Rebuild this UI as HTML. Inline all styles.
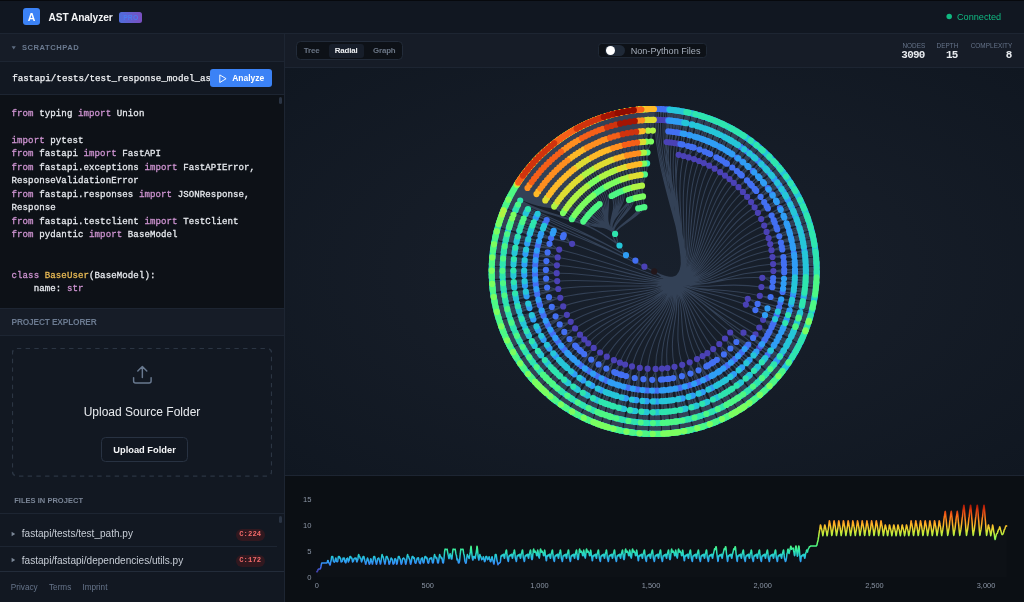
<!DOCTYPE html>
<html lang="en">
<head>
<meta charset="utf-8">
<title>AST Analyzer</title>
<style>
*{box-sizing:border-box;margin:0;padding:0}
html,body{width:1024px;height:602px;overflow:hidden;background:#111721;font-family:"Liberation Sans",sans-serif;color:#e5e7eb}
.abs{position:absolute}
#txt{position:absolute;left:0;top:0;width:1024px;height:602px;will-change:transform}
#app{position:relative;width:1024px;height:602px;overflow:hidden;background:#111721}
.topline{left:0;top:0;width:1024px;height:1px;background:#07090d}
/* header */
#hdr{left:0;top:1px;width:1024px;height:32px;background:#111721}
#hdrb{left:0;top:33px;width:1024px;height:1px;background:#1d2532}
.logo{left:23px;top:8px;width:17px;height:17px;border-radius:3px;background:#3b82f6;color:#fff;font-weight:bold;font-size:10.5px;line-height:18.8px;overflow:hidden;text-align:center}
.title{left:48.5px;top:10.8px;font-size:10.2px;line-height:13px;font-weight:bold;color:#f3f4f6;white-space:nowrap;letter-spacing:-0.1px}
.pro{left:119.3px;top:12px;width:23px;height:11.3px;border-radius:2.5px;background:linear-gradient(90deg,#4f6ddc,#7a4fc0);color:#4b7bf0;font-size:6.8px;font-weight:bold;line-height:11px;text-align:center;letter-spacing:.2px}
.conn{left:957px;top:11px;font-size:9.15px;line-height:12px;color:#10b981;white-space:nowrap}
.cdot{left:946.3px;top:13.7px;width:5.6px;height:5.6px;border-radius:50%;background:#10b981}
/* sidebar */
#side{left:0;top:34px;width:284px;height:568px;background:#121822}
#sideb{left:284px;top:34px;width:1px;height:568px;background:#1d2532}
.sechd{left:0;width:284px;background:#161c27}
.hline{left:0;width:284px;height:1px;background:#1d2532}
.lbl{font-size:8.3px;font-weight:bold;letter-spacing:-.13px;color:#6b7a90;white-space:nowrap;line-height:10px}
.mono{font-family:"Liberation Mono",monospace}
#code{left:0;top:95px;width:284px;height:213px;background:#0d1117;overflow:hidden}
#code pre{position:absolute;left:11.5px;top:12px;-webkit-text-stroke:.28px;font-family:"Liberation Mono",monospace;font-size:9.1px;line-height:13.47px;color:#e6e9ee;white-space:pre;letter-spacing:.08px}
.k{color:#cd93d0}.c{color:#ebbc55}
.btn{left:210px;top:69px;width:62px;height:18px;border-radius:3px;background:#3b82f6}
.btn span{position:absolute;left:22.2px;top:3px;font-size:8.45px;line-height:12px;font-weight:bold;color:#fff}
.fname{left:12.2px;top:71.8px;-webkit-text-stroke:.25px;width:197.8px;overflow:hidden;font-family:"Liberation Mono",monospace;font-size:9.2px;line-height:13px;color:#f1f3f6;white-space:nowrap;letter-spacing:.01px}
/* main */
#tool{left:285px;top:34px;width:739px;height:33px;background:#161c27}
#toolb{left:285px;top:67px;width:739px;height:1px;background:#1d2532}
#canvas{left:285px;top:68px;width:739px;height:407px;background:radial-gradient(ellipse farthest-corner at 50% 50%,#18202c 0%,#161d28 40%,#101721 100%)}
#chartb{left:285px;top:475px;width:739px;height:1px;background:#1d2532}
#chart{left:285px;top:476px;width:739px;height:126px;background:#0b0f14}

/* toolbar widgets */
.seg{left:296px;top:41px;width:107px;height:19px;border:1px solid #222b39;border-radius:4.5px;background:#0d1117}
.segact{left:329px;top:43.5px;width:34.5px;height:14.5px;border-radius:3px;background:#171e2a}
.segt{top:46.4px;font-size:7.9px;line-height:10px;font-weight:bold;color:#6b7686;white-space:nowrap;letter-spacing:-.14px}
.tog{left:597.6px;top:43.1px;width:109.6px;height:14.9px;border:1px solid #1f2835;border-radius:3.5px;background:#0d1117}
.track{left:605px;top:45.2px;width:19.6px;height:11px;border-radius:6px;background:#1f2937}
.knob{left:605.6px;top:46px;width:9.4px;height:9.4px;border-radius:50%;background:#fff}
.togt{left:630.7px;top:45px;font-size:9.1px;line-height:12px;color:#a3acb9;white-space:nowrap}
.stl{top:43.1px;font-size:6.4px;letter-spacing:-.12px;line-height:6px;color:#66748a;white-space:nowrap;text-align:right;letter-spacing:.05px}
.stv{top:51.2px;font-family:"Liberation Mono",monospace;font-weight:bold;font-size:10.9px;line-height:9px;color:#e8ebef;white-space:nowrap;text-align:right;letter-spacing:-.7px;margin-left:-.7px}
/* sidebar widgets */
.tri{width:0;height:0;border-style:solid}
.drop{left:12px;top:348px;width:260px;height:128.5px}
.upt{left:0;top:404.5px;width:284px;text-align:center;font-size:12px;line-height:15px;color:#e8ebef;white-space:nowrap}
.upb{left:101px;top:437.2px;width:87px;height:24.5px;border:1px solid #283242;border-radius:4.5px;background:#111721}
.upb span{position:absolute;left:0;width:100%;top:6.8px;text-align:center;font-size:9.3px;line-height:11px;font-weight:bold;color:#f5f6f8}
.frow{left:21.8px;font-size:10.05px;line-height:12px;color:#c6ccd5;white-space:nowrap}
.badge{left:235.5px;width:29.5px;height:11.5px;border-radius:6px;background:#31181f;color:#f26a6a;font-family:"Liberation Mono",monospace;font-weight:bold;font-size:7.2px;line-height:11.5px;text-align:center;letter-spacing:.1px}
.foot{top:582.8px;font-size:8.2px;line-height:10px;color:#66748a;white-space:nowrap}
.sb{width:3px;border-radius:1.5px;background:#2a3444}
</style>
</head>
<body>
<div id="app"><div id="txt">
<div class="abs" id="hdr"></div>
<div class="abs topline"></div>
<div class="abs" id="hdrb"></div>
<div class="abs logo">A</div>
<div class="abs title">AST Analyzer</div>
<div class="abs pro">PRO</div>
<svg class="abs" style="left:944px;top:11px" width="11" height="11" viewBox="0 0 11 11"><circle cx="5.2" cy="5.5" r="2.75" fill="#10b981"/></svg>
<div class="abs conn">Connected</div>

<div class="abs" id="side"></div>
<div class="abs sechd" style="top:34px;height:27px"></div>
<div class="abs hline" style="top:61px"></div>
<div class="abs hline" style="top:94px"></div>
<div class="abs" id="code"><pre><span class="k">from</span> typing <span class="k">import</span> Union

<span class="k">import</span> pytest
<span class="k">from</span> fastapi <span class="k">import</span> FastAPI
<span class="k">from</span> fastapi.exceptions <span class="k">import</span> FastAPIError,
ResponseValidationError
<span class="k">from</span> fastapi.responses <span class="k">import</span> JSONResponse,
Response
<span class="k">from</span> fastapi.testclient <span class="k">import</span> TestClient
<span class="k">from</span> pydantic <span class="k">import</span> BaseModel


<span class="k">class</span> <span class="c">BaseUser</span>(BaseModel):
    name: <span class="k">str</span></pre></div>
<div class="abs hline" style="top:308px"></div>
<div class="abs sechd" style="top:309px;height:26px"></div>
<div class="abs hline" style="top:335px"></div>

<!-- sidebar content -->
<svg class="abs" style="left:11px;top:45px" width="6" height="6" viewBox="0 0 6 6"><path d="M0.6,1.3 L4.8,1.3 L2.7,4.6 Z" fill="#5d6b80"/></svg>
<div class="abs lbl" style="left:22px;top:42.8px;font-size:7.6px;letter-spacing:.52px">SCRATCHPAD</div>
<div class="abs fname">fastapi/tests/test_response_model_as_return_annotation.py</div>
<div class="abs btn"><svg class="abs" style="left:8.5px;top:4.5px" width="9" height="10" viewBox="0 0 9 10"><path d="M0.8,0.9 L7.1,4.7 L0.8,8.5 Z" fill="none" stroke="#fff" stroke-width="0.95" stroke-linejoin="round"/></svg><span>Analyze</span></div>
<div class="abs sb" style="left:279px;top:96.5px;height:7.5px"></div>
<div class="abs lbl" style="left:11.5px;top:317.2px">PROJECT EXPLORER</div>
<svg class="abs drop" viewBox="0 0 260 128.5"><rect x="0.4" y="0.4" width="259.2" height="127.7" rx="4.5" ry="4.5" fill="none" stroke="#2b3543" stroke-width="1.4" stroke-dasharray="4.4 4.3"/></svg>
<svg class="abs" style="left:132px;top:364px" width="21" height="21" viewBox="0 0 21 21"><path d="M10.35,13.5 V2.6 M5.8,6.9 L10.35,2.4 L14.8,6.9 M1.6,13.6 V17 Q1.6,19 3.6,19 H17.1 Q19.1,19 19.1,17 V13.6" fill="none" stroke="#697990" stroke-width="1.45" stroke-linecap="round" stroke-linejoin="round"/></svg>
<div class="abs upt">Upload Source Folder</div>
<div class="abs upb"><span>Upload Folder</span></div>
<div class="abs lbl" style="left:14.2px;top:495.8px;color:#7a8596;font-size:7.5px;letter-spacing:.03px">FILES IN PROJECT</div>
<div class="abs hline" style="top:513px;background:#1d2532"></div>
<svg class="abs" style="left:11.2px;top:530.5px" width="5" height="6" viewBox="0 0 5 6"><path d="M0.6,0.8 L4.2,3 L0.6,5.2 Z" fill="#7c8797"/></svg>
<div class="abs frow" style="top:528px">fastapi/tests/test_path.py</div>
<div class="abs badge" style="top:529px">C:224</div>
<div class="abs hline" style="top:546px;width:277px;background:#1d2532"></div>
<svg class="abs" style="left:11.2px;top:556.5px" width="5" height="6" viewBox="0 0 5 6"><path d="M0.6,0.8 L4.2,3 L0.6,5.2 Z" fill="#7c8797"/></svg>
<div class="abs frow" style="top:554.6px">fastapi/fastapi/dependencies/utils.py</div>
<div class="abs badge" style="top:555.2px">C:172</div>
<div class="abs sb" style="left:279px;top:515.5px;height:7.5px"></div>
<div class="abs hline" style="top:571px;background:#232c3a"></div>
<div class="abs foot" style="left:10.8px">Privacy</div>
<div class="abs foot" style="left:49px">Terms</div>
<div class="abs foot" style="left:82.4px">Imprint</div>
<div class="abs" id="sideb"></div>

<div class="abs" id="tool"></div>
<div class="abs" id="toolb"></div>
<div class="abs" id="canvas"></div>
<div class="abs" id="chartb"></div>
<div class="abs" id="chart"></div>
<!-- toolbar content -->
<div class="abs seg"></div>
<div class="abs segact"></div>
<div class="abs segt" style="left:303.8px">Tree</div>
<div class="abs segt" style="left:334.8px;color:#eef0f3">Radial</div>
<div class="abs segt" style="left:373px">Graph</div>
<div class="abs tog"></div>
<div class="abs track"></div>
<div class="abs knob"></div>
<div class="abs togt">Non-Python Files</div>
<div class="abs stl" style="left:880px;width:45.4px">NODES</div>
<div class="abs stl" style="left:913px;width:45.4px">DEPTH</div>
<div class="abs stl" style="left:952px;width:60.4px">COMPLEXITY</div>
<div class="abs stv" style="left:880px;width:45.4px">3090</div>
<div class="abs stv" style="left:913px;width:45.4px">15</div>
<div class="abs stv" style="left:952px;width:60.4px">8</div>
<svg class="abs" style="left:285px;top:68px" width="739" height="407" viewBox="285 68 739 407">
<path fill="none" stroke="#36445a" stroke-opacity="0.92" stroke-width="1.05" d="M654.2,271.4C720,309.2,654.6,195.6,655.1,119.8M654.2,271.4C720,309.2,655.5,195.6,656.8,119.8M654.2,271.4C720,309.2,656.3,195.6,658.5,119.8M654.2,271.4C720,309.2,657.4,195.7,660.6,119.9M654.2,271.4C720,309.2,658.7,195.7,663.2,120M654.2,271.4C720,309.2,659.7,195.8,665.3,120.2M654.2,271.4C720,309.2,660.6,195.9,667,120.3M654.2,271.4C710.6,303.8,660.4,206.7,666.7,142M654.2,271.4C710.6,303.8,661.6,206.9,669.1,142.3M654.2,271.4C710.6,303.8,662.9,207,671.5,142.6M654.2,271.4C710.6,303.8,664.4,207.3,674.6,143.1M654.2,271.4C710.6,303.8,665.9,207.5,677.6,143.6M654.2,271.4C705.9,301.1,666.4,213.1,678.7,154.8M654.2,271.4C705.9,301.1,668.9,213.7,683.6,156M654.2,271.4C705.9,301.1,671.4,214.4,688.6,157.4M654.2,271.4C705.9,301.1,674.1,215.3,694,159.1M654.2,271.4C705.9,301.1,676.6,216.2,699,161M654.2,271.4C705.9,301.1,679,217.3,703.8,163.1M654.2,271.4C705.9,301.1,681.7,218.6,709.2,165.7M654.2,271.4C705.9,301.1,684.4,220.1,714.6,168.7M654.2,271.4C705.9,301.1,687.2,221.8,720.1,172.2M654.2,271.4C705.9,301.1,689.6,223.5,725,175.6M654.2,271.4C705.9,301.1,691.8,225.3,729.5,179.1M654.2,271.4C705.9,301.1,694,227.1,733.8,182.8M654.2,271.4C705.9,301.1,696.3,229.3,738.5,187.2M654.2,271.4C705.9,301.1,698.6,231.7,742.9,191.9M654.2,271.4C705.9,301.1,700.7,234.1,747.1,196.8M654.2,271.4C705.9,301.1,702.7,236.8,751.1,202.1M654.2,271.4C705.9,301.1,704.4,239.4,754.6,207.3M654.2,271.4C705.9,301.1,706.1,242.1,757.9,212.8M654.2,271.4C705.9,301.1,707.7,245.3,761.2,219.1M654.2,271.4C705.9,301.1,709.2,248.5,764.2,225.6M654.2,271.4C705.9,301.1,710.4,251.7,766.6,231.9M654.2,271.4C705.9,301.1,711.4,254.8,768.6,238.2M654.2,271.4C705.9,301.1,712.2,257.8,770.2,244.1M654.2,271.4C705.9,301.1,712.8,260.8,771.5,250.2M654.2,271.4C705.9,301.1,713.3,264.3,772.5,257.1M654.2,271.4C705.9,301.1,713.7,267.8,773.1,264.1M654.2,271.4C705.9,301.1,713.8,271.3,773.4,271.1M654.2,271.4C701.2,298.4,708.3,274.6,762.3,277.8M654.2,271.4C701.2,298.4,707.8,279.2,761.4,287M654.2,271.4C701.2,298.4,707,283.6,759.8,295.8M654.2,271.4C696.5,295.7,701,285.1,747.8,298.8M654.2,271.4C696.5,295.7,700,288,745.9,304.6M654.2,271.4C705.9,301.1,708.6,295.6,763.1,319.8M654.2,271.4C705.9,301.1,706.8,299.5,759.3,327.5M654.2,271.4C705.9,301.1,704.8,302.9,755.5,334.3M654.2,271.4C701.2,298.4,698.9,302.1,743.5,332.7M654.2,271.4C710.6,303.8,706.6,309.8,759.1,348.2M654.2,271.4C696.5,295.7,692.2,302,730.2,332.5M654.2,271.4C696.5,295.7,689.6,305,725,338.5M654.2,271.4C696.5,295.7,686.7,307.7,719.3,344M654.2,271.4C696.5,295.7,683.7,310.3,713.2,349.1M654.2,271.4C696.5,295.7,680.8,312.3,707.4,353.2M654.2,271.4C696.5,295.7,678.4,313.8,702.6,356.1M654.2,271.4C696.5,295.7,675.6,315.3,697,359.1M654.2,271.4C696.5,295.7,671.9,316.9,689.7,362.3M654.2,271.4C696.5,295.7,668.2,318.1,682.2,364.8M654.2,271.4C696.5,295.7,664.3,319.1,674.5,366.8M654.2,271.4C696.5,295.7,660.9,319.7,667.5,368M654.2,271.4C696.5,295.7,658.1,320,662,368.6M654.2,271.4C696.5,295.7,654.9,320.2,655.6,368.9M654.2,271.4C696.5,295.7,650.9,320.1,647.6,368.7M654.2,271.4C696.5,295.7,647,319.7,639.8,367.9M654.2,271.4C696.5,295.7,643.1,318.9,632,366.4M654.2,271.4C696.5,295.7,639.7,318,625.1,364.5M654.2,271.4C696.5,295.7,637,317.1,619.9,362.7M654.2,271.4C696.5,295.7,634.1,315.8,613.9,360.2M654.2,271.4C696.5,295.7,630.5,314.1,606.8,356.7M654.2,271.4C696.5,295.7,627.1,312,600.1,352.5M654.2,271.4C696.5,295.7,623.9,309.7,593.7,347.9M654.2,271.4C696.5,295.7,621.2,307.4,588.3,343.3M654.2,271.4C696.5,295.7,619.2,305.4,584.3,339.4M654.2,271.4C696.5,295.7,617.1,303.1,580,334.7M654.2,271.4C696.5,295.7,614.6,299.9,575.1,328.4M654.2,271.4C696.5,295.7,612.4,296.6,570.7,321.8M654.2,271.4C696.5,295.7,610.5,293.1,566.9,314.8M654.2,271.4C696.5,295.7,608.7,288.9,563.2,306.4M654.2,271.4C696.5,295.7,607.3,284.6,560.3,297.8M654.2,271.4C696.5,295.7,606.2,280.2,558.3,289M654.2,271.4C696.5,295.7,605.7,276.3,557.2,281.1M654.2,271.4C696.5,295.7,605.5,272.3,556.7,273.2M654.2,271.4C696.5,295.7,605.5,268.4,556.9,265.3M654.2,271.4C696.5,295.7,606,264.4,557.7,257.4M654.2,271.4C696.5,295.7,606.7,260.5,559.2,249.6M654.2,271.4C691.8,293,613.1,257.6,572.1,243.8M654.2,271.4C658.9,274.1,649.3,269.1,644.4,266.7M655.1,119.8C655.1,114.4,655.1,114.4,655.1,109M656.8,119.8C656.9,114.4,656.9,114.4,656.9,109M658.5,119.8C658.6,114.4,658.6,114.4,658.8,109M660.6,119.9C660.8,114.5,660.4,114.5,660.6,109.1M660.6,119.9C660.8,114.5,661.3,114.5,661.5,109.1M663.2,120C663.5,114.6,663,114.6,663.3,109.2M663.2,120C663.5,114.6,663.9,114.7,664.2,109.3M665.3,120.2C665.7,114.8,665.7,114.8,666.1,109.4M667,120.3C667.4,114.9,667.4,114.9,667.9,109.5M666.7,142C667.7,131.3,667.1,131.2,668.1,120.4M666.7,142C667.2,136.7,667.8,136.7,668.3,131.3M668.1,120.4C668.6,115,668.6,115,669.1,109.6M668.3,131.3C668.8,125.9,668.4,125.9,669,120.5M668.3,131.3C668.8,125.9,669.3,126,669.8,120.6M669,120.5C669.5,115.1,669.5,115.1,670,109.7M669.8,120.6C670.4,115.2,670.4,115.2,670.9,109.8M669.1,142.3C670.3,131.5,669.8,131.5,670.9,120.7M669.1,142.3C669.7,136.9,670.3,137,670.9,131.6M670.9,120.7C671.5,115.3,671.5,115.3,672.1,109.9M670.9,131.6C671.6,126.2,671.2,126.2,671.8,120.8M670.9,131.6C671.6,126.2,672,126.3,672.6,120.9M671.8,120.8C672.4,115.4,672.4,115.4,673.1,110M672.6,120.9C673.3,115.5,673.3,115.5,674,110.2M671.5,142.6C673,131.9,672.4,131.8,673.8,121.1M671.5,142.6C672.2,137.2,672.8,137.3,673.5,132M673.8,121.1C674.5,115.7,674.5,115.7,675.2,110.3M673.5,132C674.3,126.6,673.9,126.5,674.6,121.2M673.5,132C674.3,126.6,674.7,126.6,675.5,121.3M674.6,121.2C675.3,115.8,675.3,115.8,676.1,110.4M675.5,121.3C676.2,115.9,676.2,115.9,677,110.6M674.6,143.1C676.3,132.4,675,132.2,676.6,121.4M674.6,143.1C675.4,137.7,675.3,137.7,676.2,132.3M674.6,143.1C675.4,137.7,676.8,137.9,677.7,132.6M676.6,121.4C677.4,116.1,677.4,116.1,678.2,110.7M676.2,132.3C677,127,676.6,126.9,677.4,121.6M676.2,132.3C677,127,677.4,127.1,678.3,121.7M677.4,121.6C678.3,116.2,678.3,116.2,679.1,110.9M678.3,121.7C679.1,116.4,679.1,116.4,680,111M677.7,132.6C678.6,127.3,678.2,127.2,679.1,121.8M677.7,132.6C678.6,127.3,679,127.3,680,122M679.1,121.8C680,116.5,680,116.5,680.9,111.2M680,122C680.9,116.6,680.9,116.6,681.8,111.3M677.6,143.6C679.5,132.9,679.2,132.8,681.1,122.2M677.6,143.6C678.6,138.2,678.9,138.3,679.9,133M681.1,122.2C682,116.9,682,116.9,683,111.5M679.9,133C680.9,127.7,680.9,127.7,681.9,122.3M681.9,122.3C682.9,117,682.9,117,683.9,111.7M678.7,154.8C683.1,133.6,681.5,133.3,685.7,112M678.7,154.8C679.8,149.5,679.4,149.5,680.5,144.1M678.7,154.8C679.8,149.5,681.5,149.9,682.7,144.6M680.5,144.1C681.6,138.8,681.6,138.8,682.7,133.5M682.7,133.5C683.8,128.2,683.2,128.1,684.3,122.8M682.7,133.5C683.8,128.2,683.8,128.2,684.9,122.9M682.7,133.5C683.8,128.2,684.5,128.4,685.6,123.1M684.3,122.8C685.3,117.5,685.3,117.5,686.4,112.2M684.9,122.9C686,117.6,686,117.6,687.1,112.3M685.6,123.1C686.7,117.8,686.7,117.8,687.8,112.5M682.7,144.6C683.9,139.3,683.2,139.2,684.4,133.9M682.7,144.6C686.3,128.8,687,128.9,690.6,113.1M684.4,133.9C685.5,128.6,685.1,128.5,686.3,123.2M684.4,133.9C686.7,123.3,687.1,123.4,689.4,112.8M686.3,123.2C687.4,117.9,687.4,117.9,688.6,112.6M683.6,156C689,135,687.3,134.6,692.4,113.5M683.6,156C686.3,145.5,686,145.4,688.7,134.9M683.6,156C685,150.7,686.7,151.2,688.1,146M688.7,134.9C690,129.6,690,129.6,691.3,124.4M691.3,124.4C692.6,119.1,692,119,693.3,113.7M691.3,124.4C692.6,119.1,692.4,119.1,693.7,113.8M691.3,124.4C692.6,119.1,692.9,119.2,694.2,113.9M691.3,124.4C692.6,119.1,693.3,119.3,694.6,114.1M688.1,146C689.5,140.7,688.9,140.5,690.2,135.3M688.1,146C692.4,130.3,693.1,130.5,697.4,114.8M690.2,135.3C691.6,130.1,691.2,130,692.6,124.7M690.2,135.3C693,124.8,693.4,124.9,696.2,114.5M692.6,124.7C694,119.5,694,119.5,695.3,114.2M688.6,157.4C694.9,136.6,693.2,136.1,699.2,115.3M688.6,157.4C690.2,152.2,689.7,152,691.3,146.9M688.6,157.4C690.2,152.2,692.2,152.8,693.8,147.6M691.3,146.9C692.8,141.7,692.8,141.7,694.4,136.5M694.4,136.5C695.9,131.3,695.3,131.1,696.8,125.9M694.4,136.5C695.9,131.3,695.9,131.3,697.5,126.1M694.4,136.5C695.9,131.3,696.6,131.5,698.1,126.3M696.8,125.9C698.3,120.7,698.3,120.7,699.9,115.5M697.5,126.1C699,120.9,699,120.9,700.6,115.7M698.1,126.3C699.7,121.1,699.7,121.1,701.3,115.9M693.8,147.6C695.5,142.5,694.4,142.1,696,137M693.8,147.6C698.8,132.2,699,132.2,704,116.8M693.8,147.6C695.5,142.5,696.3,142.7,698,137.6M696,137C697.6,131.8,697.2,131.7,698.8,126.5M696,137C699.2,126.6,699.6,126.7,702.8,116.4M698.8,126.5C700.4,121.3,700.4,121.3,702,116.1M698,137.6C699.6,132.4,699.6,132.4,701.3,127.3M701.3,127.3C703,122.1,703,122.1,704.7,117M694,159.1C701.2,138.7,699.5,138.1,706.4,117.6M694,159.1C697.6,148.9,697.2,148.8,700.8,138.5M694,159.1C695.8,154,697.7,154.7,699.6,149.6M700.8,138.5C702.6,133.4,702.6,133.4,704.4,128.3M704.4,128.3C706.2,123.2,705.5,123,707.3,117.9M704.4,128.3C706.2,123.2,705.9,123.1,707.7,118M704.4,128.3C706.2,123.2,706.4,123.3,708.2,118.2M704.4,128.3C706.2,123.2,706.8,123.4,708.6,118.3M699.6,149.6C701.5,144.6,700.5,144.2,702.3,139.1M699.6,149.6C705.3,134.4,705.6,134.5,711.3,119.3M699.6,149.6C701.5,144.6,702.3,144.9,704.3,139.8M702.3,139.1C704.2,134,703.8,133.9,705.6,128.8M702.3,139.1C706,128.9,706.4,129.1,710.1,118.9M705.6,128.8C707.4,123.7,707.4,123.7,709.3,118.6M704.3,139.8C706.2,134.8,706.2,134.8,708.1,129.7M708.1,129.7C710,124.6,710,124.6,712,119.6M699,161C707.1,140.9,705.7,140.4,713.7,120.2M699,161C703,151,702.6,150.8,706.7,140.8M699,161C701,156,702.6,156.6,704.7,151.7M706.7,140.8C708.7,135.7,708.7,135.7,710.7,130.7M710.7,130.7C712.7,125.7,712.5,125.6,714.5,120.6M710.7,130.7C712.7,125.7,712.9,125.8,714.9,120.7M704.7,151.7C706.8,146.7,705.7,146.2,707.8,141.2M704.7,151.7C711,136.7,711.3,136.8,717.6,121.8M704.7,151.7C706.8,146.7,707.6,147,709.7,142M707.8,141.2C709.9,136.2,709.5,136,711.5,131M707.8,141.2C711.9,131.2,712.3,131.4,716.5,121.4M711.5,131C713.6,126,713.6,126,715.6,121M709.7,142C711.9,137,711.9,137,714,132.1M714,132.1C716.1,127.1,716.1,127.1,718.3,122.1M703.8,163.1C712.8,143.4,711.2,142.7,719.9,122.8M703.8,163.1C706,158.2,705.6,158,707.9,153M703.8,163.1C706,158.2,707.9,159,710.2,154.1M707.9,153C710.1,148.1,710.1,148.1,712.3,143.2M712.3,143.2C714.6,138.2,714,138,716.2,133M712.3,143.2C714.6,138.2,714.6,138.2,716.8,133.3M712.3,143.2C714.6,138.2,715.2,138.5,717.4,133.6M716.2,133C718.4,128.1,718.4,128.1,720.6,123.1M716.8,133.3C719,128.4,719,128.4,721.3,123.4M717.4,133.6C719.7,128.7,719.7,128.7,721.9,123.7M710.2,154.1C712.6,149.3,711.5,148.8,713.8,143.9M710.2,154.1C717.2,139.5,717.5,139.6,724.5,125M710.2,154.1C712.6,149.3,713.4,149.6,715.7,144.8M713.8,143.9C716.1,139,715.8,138.8,718,133.9M713.8,143.9C718.4,134.1,718.8,134.2,723.4,124.4M718,133.9C720.3,129,720.3,129,722.6,124M715.7,144.8C718.1,139.9,718.1,139.9,720.5,135M720.5,135C722.8,130.2,722.8,130.2,725.2,125.3M709.2,165.7C719.2,146.5,717.1,145.5,726.8,126.1M709.2,165.7C714.2,156.1,713.8,155.9,718.7,146.3M709.2,165.7C711.7,160.9,713.8,162,716.4,157.3M718.7,146.3C721.2,141.5,721.2,141.5,723.7,136.6M723.7,136.6C726.2,131.8,725.2,131.3,727.6,126.5M723.7,136.6C726.2,131.8,725.6,131.5,728.1,126.7M723.7,136.6C726.2,131.8,726,131.7,728.5,126.9M723.7,136.6C726.2,131.8,726.4,131.9,728.9,127.1M723.7,136.6C726.2,131.8,726.8,132.1,729.3,127.3M723.7,136.6C726.2,131.8,727.2,132.3,729.7,127.5M716.4,157.3C719,152.5,718,152,720.5,147.2M716.4,157.3C724.2,143,724.4,143.2,732.2,128.9M716.4,157.3C719,152.5,719.7,152.9,722.4,148.2M720.5,147.2C723.1,142.4,722.7,142.2,725.3,137.5M720.5,147.2C725.6,137.7,726,137.9,731.1,128.3M725.3,137.5C727.8,132.7,727.8,132.7,730.3,127.9M722.4,148.2C725,143.5,725,143.5,727.6,138.7M727.6,138.7C730.2,134,730.2,134,732.8,129.2M714.6,168.7C725.6,150,723.7,149,734.4,130.1M714.6,168.7C717.3,164,716.9,163.8,719.7,159.1M714.6,168.7C717.3,164,719.3,165.2,722.2,160.6M719.7,159.1C722.4,154.5,722.4,154.5,725.1,149.8M725.1,149.8C727.8,145.1,727,144.6,729.7,139.9M725.1,149.8C727.8,145.1,727.6,144.9,730.3,140.2M725.1,149.8C727.8,145.1,728.1,145.3,730.9,140.6M725.1,149.8C727.8,145.1,728.7,145.6,731.5,140.9M729.7,139.9C732.4,135.2,732.4,135.2,735.1,130.5M730.3,140.2C733,135.6,733,135.6,735.7,130.9M730.9,140.6C733.6,135.9,733.6,135.9,736.3,131.2M731.5,140.9C734.2,136.3,734.2,136.3,737,131.6M722.2,160.6C725,156,724,155.4,726.8,150.8M722.2,160.6C730.7,146.8,730.9,146.9,739.4,133.1M722.2,160.6C725,156,725.7,156.5,728.6,151.9M726.8,150.8C729.6,146.1,729.3,145.9,732,141.3M726.8,150.8C732.4,141.5,732.8,141.7,738.4,132.5M732,141.3C734.8,136.6,734.8,136.6,737.6,132M728.6,151.9C731.5,147.3,731.5,147.3,734.3,142.7M734.3,142.7C737.2,138.1,737.2,138.1,740,133.5M720.1,172.2C732.1,154.1,729.9,152.7,741.6,134.5M720.1,172.2C723.1,167.7,722.1,167,725.1,162.5M720.1,172.2C723.1,167.7,723.9,168.2,726.9,163.7M720.1,172.2C729.1,158.6,731.4,160.2,740.6,146.8M725.1,162.5C728.1,157.9,728.1,157.9,731,153.4M731,153.4C734,148.9,733.4,148.5,736.3,144M731,153.4C734,148.9,734,148.9,736.9,144.3M731,153.4C734,148.9,734.5,149.2,737.5,144.7M736.3,144C739.3,139.4,739.3,139.4,742.2,134.8M736.9,144.3C739.9,139.8,739.9,139.8,742.8,135.2M737.5,144.7C740.5,140.2,740.5,140.2,743.4,135.6M726.9,163.7C730,159.2,729.4,158.8,732.4,154.3M726.9,163.7C736,150.2,736.7,150.7,745.8,137.2M732.4,154.3C735.4,149.8,735.1,149.6,738.1,145.1M732.4,154.3C738.4,145.3,738.8,145.5,744.8,136.6M738.1,145.1C741.1,140.6,741.1,140.6,744,136M740.6,146.8C743.7,142.4,743.7,142.4,746.8,137.9M725,175.6C737.9,158.2,735.8,156.6,748.3,139M725,175.6C731.5,166.9,730.5,166.2,736.9,157.5M725,175.6C728.3,171.3,729,171.8,732.3,167.5M725,175.6C734.7,162.6,736.9,164.2,746.8,151.3M736.9,157.5C740.1,153.1,740.1,153.1,743.3,148.7M743.3,148.7C746.4,144.3,745.9,143.9,749.1,139.5M743.3,148.7C746.4,144.3,746.3,144.2,749.4,139.8M743.3,148.7C746.4,144.3,746.6,144.4,749.8,140M743.3,148.7C746.4,144.3,747,144.7,750.2,140.3M732.3,167.5C735.5,163.2,735,162.8,738.2,158.4M732.3,167.5C742,154.5,742.6,155,752.5,142M738.2,158.4C741.4,154.1,741.1,153.8,744.3,149.5M738.2,158.4C744.7,149.7,745,150,751.5,141.3M744.3,149.5C747.5,145.1,747.5,145.1,750.8,140.7M746.8,151.3C750.1,147.1,750.1,147.1,753.4,142.8M729.5,179.1C743.1,162.3,741.5,160.9,754.9,143.9M729.5,179.1C736.3,170.7,735.5,170,742.2,161.5M729.5,179.1C732.9,174.9,733.4,175.3,736.9,171.1M729.5,179.1C739.7,166.5,741.6,168,752.1,155.6M742.2,161.5C745.6,157.3,745.6,157.3,749,153.1M749,153.1C752.4,148.8,752.2,148.7,755.6,144.5M749,153.1C752.4,148.8,752.6,149,755.9,144.7M736.9,171.1C740.3,166.9,739.8,166.5,743.2,162.3M736.9,171.1C747.2,158.6,747.8,159,758.2,146.6M743.2,162.3C746.6,158.1,746.3,157.8,749.7,153.6M743.2,162.3C750,153.9,750.4,154.2,757.2,145.8M749.7,153.6C753.1,149.4,753.1,149.4,756.5,145.2M752.1,155.6C755.6,151.5,755.6,151.5,759.1,147.3M733.8,182.8C748.3,166.6,746.3,164.9,760.5,148.5M733.8,182.8C737.4,178.7,736.5,178,740.1,173.9M733.8,182.8C737.4,178.7,738.1,179.4,741.8,175.4M733.8,182.8C744.6,170.7,746.7,172.5,757.8,160.6M740.1,173.9C743.7,169.8,743.7,169.8,747.3,165.8M747.3,165.8C750.9,161.7,750.4,161.3,753.9,157.2M747.3,165.8C750.9,161.7,750.9,161.7,754.4,157.6M747.3,165.8C750.9,161.7,751.3,162.1,754.9,158.1M753.9,157.2C757.5,153.1,757.5,153.1,761,149M754.4,157.6C758,153.6,758,153.6,761.6,149.5M754.9,158.1C758.5,154,758.5,154,762.1,150M741.8,175.4C745.4,171.4,744.9,170.9,748.5,166.9M741.8,175.4C752.7,163.3,753.3,163.9,764.3,151.9M748.5,166.9C752.1,162.8,751.8,162.6,755.5,158.5M748.5,166.9C755.8,158.8,756.1,159.1,763.4,151.1M755.5,158.5C759.1,154.5,759.1,154.5,762.7,150.5M757.8,160.6C761.5,156.7,761.5,156.7,765.2,152.7M738.5,187.2C753.8,171.9,751.5,169.6,766.5,154M738.5,187.2C746.1,179.5,745.2,178.6,752.8,170.9M738.5,187.2C742.3,183.3,743.1,184.2,747,180.4M738.5,187.2C749.9,175.7,752.1,177.9,763.8,166.6M752.8,170.9C756.6,167,756.6,167,760.4,163.2M760.4,163.2C764.2,159.3,763.4,158.5,767.1,154.6M760.4,163.2C764.2,159.3,763.7,158.8,767.5,154.9M760.4,163.2C764.2,159.3,764,159.1,767.8,155.3M760.4,163.2C764.2,159.3,764.3,159.4,768.1,155.6M760.4,163.2C764.2,159.3,764.6,159.7,768.5,155.9M760.4,163.2C764.2,159.3,765,160.1,768.8,156.2M747,180.4C750.9,176.6,750.4,176.1,754.2,172.3M747,180.4C758.6,169,759.1,169.6,770.8,158.3M754.2,172.3C758.1,168.5,757.8,168.2,761.6,164.4M754.2,172.3C761.9,164.7,762.2,165,769.9,157.4M761.6,164.4C765.5,160.6,765.5,160.6,769.3,156.7M763.8,166.6C767.7,162.9,767.7,162.9,771.6,159.1M742.9,191.9C759.1,177.5,757.1,175.3,772.9,160.5M742.9,191.9C747,188.3,746.1,187.4,750.1,183.7M742.9,191.9C747,188.3,747.7,189.2,751.8,185.6M742.9,191.9C755,181.1,757,183.3,769.3,172.7M750.1,183.7C754.1,180.1,754.1,180.1,758.1,176.4M758.1,176.4C762.1,172.8,761.5,172,765.4,168.4M758.1,176.4C762.1,172.8,761.9,172.5,765.9,168.9M758.1,176.4C762.1,172.8,762.4,173,766.4,169.4M758.1,176.4C762.1,172.8,762.8,173.5,766.8,169.9M765.4,168.4C769.4,164.7,769.4,164.7,773.4,161M765.9,168.9C769.9,165.2,769.9,165.2,773.9,161.5M766.4,169.4C770.4,165.7,770.4,165.7,774.4,162.1M766.8,169.9C770.8,166.2,770.8,166.2,774.9,162.6M751.8,185.6C755.9,182,755.4,181.5,759.5,177.9M751.8,185.6C764,174.9,764.5,175.4,776.8,164.8M759.5,177.9C763.5,174.3,763.2,174,767.3,170.4M759.5,177.9C767.6,170.7,767.8,171,776,163.8M767.3,170.4C771.3,166.8,771.3,166.8,775.4,163.2M769.3,172.7C773.5,169.2,773.5,169.2,777.6,165.7M747.1,196.8C764,183.2,762.1,181,778.7,167.1M747.1,196.8C751.3,193.4,750.4,192.3,754.6,188.9M747.1,196.8C751.3,193.4,752,194.3,756.3,190.9M747.1,196.8C759.8,186.6,761.7,189.1,774.6,179.3M754.6,188.9C758.8,185.4,758.8,185.4,763,182M763,182C767.1,178.5,766.7,178,770.9,174.6M763,182C767.1,178.5,767.1,178.5,771.3,175.1M763,182C767.1,178.5,767.6,179,771.8,175.6M770.9,174.6C775.1,171.1,775.1,171.1,779.2,167.6M771.3,175.1C775.5,171.6,775.5,171.6,779.7,168.2M771.8,175.6C775.9,172.2,775.9,172.2,780.1,168.8M756.3,190.9C760.5,187.6,759.8,186.7,764,183.3M756.3,190.9C769,180.9,769.2,181,781.9,171M756.3,190.9C764.8,184.2,765.4,185,773.9,178.4M764,183.3C768.2,179.9,768,179.5,772.2,176.1M764,183.3C772.4,176.5,772.7,176.8,781.2,170M772.2,176.1C776.4,172.7,776.4,172.7,780.6,169.3M773.9,178.4C778.2,175,778.2,175,782.5,171.7M774.6,179.3C778.9,176,778.9,176,783.2,172.7M751.1,202.1C768.8,189.5,767,187.1,784.3,174.1M751.1,202.1C759.9,195.8,759.1,194.6,767.8,188.2M751.1,202.1C755.5,199,756.2,199.9,760.6,196.8M751.1,202.1C764.4,192.7,766.2,195.3,779.6,186.2M767.8,188.2C772.2,185,772.2,185,776.6,181.8M776.6,181.8C780.9,178.6,780.5,178.1,784.9,174.9M776.6,181.8C780.9,178.6,780.8,178.5,785.2,175.2M776.6,181.8C780.9,178.6,781.1,178.8,785.4,175.6M776.6,181.8C780.9,178.6,781.3,179.2,785.7,176M760.6,196.8C765.1,193.7,764.4,192.7,768.8,189.6M760.6,196.8C773.9,187.4,774,187.6,787.4,178.3M760.6,196.8C769.5,190.6,770.1,191.4,779,185.2M768.8,189.6C773.2,186.4,772.9,186.1,777.3,182.9M768.8,189.6C777.6,183.3,777.8,183.6,786.7,177.3M777.3,182.9C781.7,179.7,781.7,179.7,786.1,176.6M779,185.2C783.4,182.2,783.4,182.2,787.9,179.1M779.6,186.2C784.1,183.1,784.1,183.1,788.6,180.1M754.6,207.3C772.9,195.7,771.5,193.6,789.6,181.6M754.6,207.3C763.8,201.5,763,200.3,772.1,194.4M754.6,207.3C759.2,204.4,759.7,205.1,764.2,202.2M754.6,207.3C768.3,198.6,769.9,201,783.8,192.6M772.1,194.4C776.6,191.4,776.6,191.4,781.2,188.5M781.2,188.5C785.7,185.5,785.6,185.3,790.1,182.4M781.2,188.5C785.7,185.5,785.8,185.7,790.4,182.7M764.2,202.2C768.8,199.4,768.2,198.4,772.8,195.4M764.2,202.2C778,193.6,778.1,193.8,791.9,185.2M764.2,202.2C773.4,196.5,774,197.3,783.2,191.6M772.8,195.4C777.3,192.5,777.1,192.2,781.6,189.2M772.8,195.4C781.9,189.6,782.1,189.9,791.2,184.1M781.6,189.2C786.2,186.3,786.2,186.3,790.7,183.4M783.2,191.6C787.8,188.8,787.8,188.8,792.4,185.9M783.8,192.6C788.4,189.8,788.4,189.8,793,187M757.9,212.8C776.8,202.1,775.3,199.6,794,188.5M757.9,212.8C762.6,210.1,761.9,208.8,766.6,206.1M757.9,212.8C762.6,210.1,763.2,211.1,767.9,208.5M757.9,212.8C772.1,204.8,773.6,207.6,787.9,199.9M766.6,206.1C771.3,203.4,771.3,203.4,776,200.7M776,200.7C780.6,198,780.3,197.4,785,194.7M776,200.7C780.6,198,780.6,198,785.3,195.2M776,200.7C780.6,198,781,198.5,785.7,195.8M785,194.7C789.7,191.9,789.7,191.9,794.3,189.2M785.3,195.2C790,192.5,790,192.5,794.7,189.8M785.7,195.8C790.4,193.1,790.4,193.1,795.1,190.4M767.9,208.5C772.7,205.8,772.1,204.8,776.8,202.1M767.9,208.5C782.1,200.6,782.2,200.8,796.5,192.9M767.9,208.5C777.4,203.2,777.9,204.1,787.4,198.9M776.8,202.1C781.5,199.5,781.3,199.1,786,196.4M776.8,202.1C786.2,196.8,786.4,197.2,795.9,191.9M786,196.4C790.7,193.7,790.7,193.7,795.4,191.1M787.4,198.9C792.2,196.3,792.2,196.3,796.9,193.7M787.9,199.9C792.7,197.4,792.7,197.4,797.5,194.8M761.2,219.1C780.7,209.5,779.1,206.4,798.3,196.4M761.2,219.1C771,214.3,770.3,212.9,779.9,208M761.2,219.1C766.1,216.7,766.7,217.9,771.6,215.6M761.2,219.1C775.8,211.9,777.3,215.1,792.1,208.3M779.9,208C784.8,205.6,784.8,205.6,789.6,203.1M789.6,203.1C794.4,200.7,793.9,199.7,798.8,197.2M789.6,203.1C794.4,200.7,794.1,200.1,799,197.6M789.6,203.1C794.4,200.7,794.3,200.5,799.2,198M789.6,203.1C794.4,200.7,794.5,200.9,799.4,198.5M789.6,203.1C794.4,200.7,794.7,201.3,799.6,198.9M789.6,203.1C794.4,200.7,794.9,201.7,799.8,199.3M771.6,215.6C776.5,213.3,776,212.2,780.8,209.8M771.6,215.6C786.3,208.6,786.4,208.8,801,201.8M771.6,215.6C781.4,210.9,781.8,211.8,791.6,207.3M780.8,209.8C785.7,207.4,785.5,207.1,790.4,204.7M780.8,209.8C790.6,205.1,790.8,205.5,800.5,200.7M790.4,204.7C795.2,202.3,795.2,202.3,800.1,199.9M791.6,207.3C796.5,205,796.5,205,801.4,202.7M792.1,208.3C797,206,797,206,801.9,203.8M764.2,225.6C784.2,217.3,782.9,214.2,802.7,205.4M764.2,225.6C769.2,223.5,768.6,222.1,773.6,220M764.2,225.6C769.2,223.5,769.7,224.8,774.7,222.7M764.2,225.6C779.2,219.4,780.5,222.5,795.6,216.7M773.6,220C778.6,217.8,778.6,217.8,783.5,215.7M783.5,215.7C788.5,213.6,788.1,212.6,793.1,210.5M783.5,215.7C788.5,213.6,788.4,213.3,793.3,211.1M783.5,215.7C788.5,213.6,788.6,213.9,793.6,211.7M783.5,215.7C788.5,213.6,788.9,214.5,793.9,212.4M793.1,210.5C798,208.3,798,208.3,803,206.1M793.3,211.1C798.3,208.9,798.3,208.9,803.3,206.8M793.6,211.7C798.6,209.6,798.6,209.6,803.6,207.5M793.9,212.4C798.9,210.2,798.9,210.2,803.9,208.1M774.7,222.7C779.7,220.7,779.3,219.6,784.3,217.5M774.7,222.7C789.8,216.6,789.9,216.8,804.9,210.8M774.7,222.7C784.8,218.7,785.1,219.6,795.2,215.6M784.3,217.5C789.3,215.4,789.1,215.1,794.1,213M784.3,217.5C794.3,213.4,794.5,213.8,804.5,209.6M794.1,213C799.1,210.9,799.1,210.9,804.1,208.8M795.2,215.6C800.3,213.6,800.3,213.6,805.3,211.6M795.6,216.7C800.7,214.7,800.7,214.7,805.7,212.8M766.6,231.9C787.1,224.8,786.1,222.1,806.4,214.5M766.6,231.9C771.7,230.1,771.3,228.8,776.4,227M766.6,231.9C771.7,230.1,772.1,231.2,777.2,229.4M766.6,231.9C782,226.6,782.9,229.5,798.4,224.4M776.4,227C781.4,225.1,781.4,225.1,786.5,223.3M786.5,223.3C791.6,221.4,791.4,220.8,796.5,218.9M786.5,223.3C791.6,221.4,791.6,221.4,796.7,219.6M786.5,223.3C791.6,221.4,791.8,222,796.9,220.2M796.5,218.9C801.6,217,801.6,217,806.6,215.2M796.7,219.6C801.8,217.7,801.8,217.7,806.9,215.8M796.9,220.2C802,218.4,802,218.4,807.1,216.5M777.2,229.4C782.4,227.7,782,226.6,787.1,224.8M777.2,229.4C792.6,224.2,792.7,224.5,808.1,219.2M777.2,229.4C782.4,227.7,782.6,228.5,787.8,226.8M787.1,224.8C792.2,223,792.1,222.6,797.2,220.8M787.1,224.8C797.3,221.2,797.5,221.6,807.7,218.1M797.2,220.8C802.3,219,802.3,219,807.4,217.2M787.8,226.8C792.9,225.1,792.9,225.1,798,223.4M798,223.4C803.2,221.6,803.2,221.6,808.3,219.9M798.4,224.4C803.5,222.8,803.5,222.8,808.7,221.1M768.6,238.2C789.4,232.1,788.6,229.3,809.3,222.8M768.6,238.2C779,235.1,778.6,233.8,789,230.6M768.6,238.2C773.8,236.7,774.1,237.7,779.3,236.3M768.6,238.2C784.2,233.6,785.1,236.6,800.8,232.4M789,230.6C794.2,229.1,794.2,229.1,799.4,227.5M799.4,227.5C804.5,225.9,804.3,225.3,809.5,223.7M799.4,227.5C804.5,225.9,804.5,225.7,809.7,224.1M799.4,227.5C804.5,225.9,804.6,226.1,809.8,224.6M799.4,227.5C804.5,225.9,804.7,226.6,809.9,225M779.3,236.3C784.6,234.8,784.2,233.7,789.5,232.2M779.3,236.3C795,231.9,795.1,232.1,810.7,227.8M779.3,236.3C784.6,234.8,784.8,235.6,790,234.2M789.5,232.2C794.7,230.7,794.5,230.3,799.7,228.8M789.5,232.2C799.9,229.2,800,229.6,810.4,226.6M799.7,228.8C804.9,227.2,804.9,227.2,810.1,225.7M790,234.2C795.2,232.8,795.2,232.8,800.5,231.3M800.5,231.3C805.7,229.9,805.7,229.9,810.9,228.5M800.8,232.4C806,231,806,231,811.2,229.6M770.2,244.1C791.3,239.1,790.7,236.8,811.7,231.4M770.2,244.1C780.7,241.6,780.4,240.3,790.9,237.7M770.2,244.1C775.5,242.9,775.6,243.7,780.9,242.5M770.2,244.1C786,240.4,786.6,243.1,802.5,239.7M790.9,237.7C796.2,236.4,796.2,236.4,801.5,235.1M801.5,235.1C806.7,233.8,806.7,233.6,811.9,232.3M801.5,235.1C806.7,233.8,806.8,234,812,232.7M780.9,242.5C786.2,241.3,786,240.2,791.2,238.9M780.9,242.5C796.8,238.9,796.8,239.1,812.7,235.5M780.9,242.5C786.2,241.3,786.4,242.1,791.7,240.9M791.2,238.9C796.5,237.7,796.4,237.3,801.7,236M791.2,238.9C801.8,236.4,801.9,236.8,812.4,234.3M801.7,236C806.9,234.7,806.9,234.7,812.2,233.5M791.7,240.9C797,239.8,797,239.8,802.3,238.6M802.3,238.6C807.6,237.4,807.6,237.4,812.8,236.2M802.5,239.7C807.8,238.6,807.8,238.6,813.1,237.4M771.5,250.2C792.8,246.3,792.2,243.5,813.5,239.2M771.5,250.2C776.8,249.2,776.5,247.8,781.8,246.8M771.5,250.2C776.8,249.2,777,250.3,782.3,249.4M771.5,250.2C787.4,247.3,788,250.3,804,247.8M781.8,246.8C787.2,245.8,787.2,245.8,792.5,244.8M792.5,244.8C797.8,243.7,797.7,243.1,803,242M792.5,244.8C797.8,243.7,797.8,243.7,803.1,242.7M792.5,244.8C797.8,243.7,797.9,244.4,803.2,243.4M803,242C808.3,241,808.3,241,813.6,239.9M803.1,242.7C808.4,241.7,808.4,241.7,813.8,240.7M803.2,243.4C808.6,242.4,808.6,242.4,813.9,241.4M782.3,249.4C787.7,248.5,787.5,247.4,792.8,246.4M782.3,249.4C798.3,246.6,798.4,246.9,814.4,244.2M782.3,249.4C787.7,248.5,787.8,249.3,793.1,248.5M792.8,246.4C798.1,245.4,798,245,803.4,244.1M792.8,246.4C803.4,244.5,803.5,244.9,814.2,243M803.4,244.1C808.7,243.1,808.7,243.1,814,242.1M793.1,248.5C798.5,247.6,798.5,247.6,803.8,246.7M803.8,246.7C809.2,245.8,809.2,245.8,814.5,244.9M804,247.8C809.4,247,809.4,247,814.7,246.1M772.5,257.1C794,254.5,793.6,251.1,815,247.9M772.5,257.1C783.3,255.8,783.1,254.3,793.8,252.8M772.5,257.1C777.9,256.4,778,257.8,783.4,257.2M772.5,257.1C788.6,255.1,789,258.5,805.2,256.9M793.8,252.8C799.2,252.1,799.2,252.1,804.5,251.4M804.5,251.4C809.9,250.7,809.8,249.6,815.1,248.8M804.5,251.4C809.9,250.7,809.8,250,815.2,249.3M804.5,251.4C809.9,250.7,809.9,250.5,815.2,249.7M804.5,251.4C809.9,250.7,809.9,250.9,815.3,250.2M804.5,251.4C809.9,250.7,810,251.3,815.4,250.7M804.5,251.4C809.9,250.7,810,251.8,815.4,251.1M783.4,257.2C788.8,256.6,788.7,255.5,794.1,254.8M783.4,257.2C799.6,255.4,799.6,255.7,815.8,253.9M783.4,257.2C788.8,256.6,788.9,257.5,794.3,256.9M794.1,254.8C799.4,254.2,799.4,253.8,804.8,253.1M794.1,254.8C804.8,253.6,804.9,254,815.6,252.7M804.8,253.1C810.1,252.5,810.1,252.5,815.5,251.8M794.3,256.9C799.7,256.4,799.7,256.4,805.1,255.8M805.1,255.8C810.4,255.2,810.4,255.2,815.8,254.7M805.2,256.9C810.6,256.4,810.6,256.4,816,255.9M773.1,264.1C794.8,262.8,794.5,259.5,816.1,257.7M773.1,264.1C778.5,263.8,778.4,262.3,783.8,261.9M773.1,264.1C778.5,263.8,778.6,265.1,784,264.8M773.1,264.1C789.4,263.1,789.5,266.4,805.8,265.8M783.8,261.9C789.3,261.5,789.3,261.5,794.7,261.1M794.7,261.1C800.1,260.7,800,259.7,805.4,259.3M794.7,261.1C800.1,260.7,800,260.4,805.4,260M794.7,261.1C800.1,260.7,800.1,261.1,805.5,260.7M794.7,261.1C800.1,260.7,800.1,261.7,805.5,261.3M805.4,259.3C810.8,258.9,810.8,258.9,816.2,258.4M805.4,260C810.8,259.6,810.8,259.6,816.2,259.2M805.5,260.7C810.9,260.3,810.9,260.3,816.3,259.9M805.5,261.3C810.9,261,810.9,261,816.3,260.6M784,264.8C789.4,264.6,789.4,263.4,794.8,263.1M784,264.8C800.3,264,800.3,264.3,816.5,263.5M784,264.8C789.4,264.6,789.5,265.4,794.9,265.2M794.8,263.1C800.2,262.8,800.2,262.4,805.6,262M794.8,263.1C805.6,262.5,805.6,262.9,816.4,262.3M805.6,262C811,261.7,811,261.7,816.4,261.4M794.9,265.2C800.3,264.9,800.3,264.9,805.7,264.7M805.7,264.7C811.1,264.5,811.1,264.5,816.5,264.2M805.8,265.8C811.2,265.6,811.2,265.6,816.6,265.4M773.4,271.1C795,271.1,795,267.8,816.6,267.3M773.4,271.1C778.8,271.1,778.8,269.6,784.2,269.6M773.4,271.1C778.8,271.1,778.8,272.4,784.2,272.5M773.4,271.1C789.6,271.1,789.6,274.4,805.8,274.8M784.2,269.6C789.6,269.5,789.6,269.5,795,269.4M795,269.4C800.4,269.3,800.4,268.3,805.8,268.2M795,269.4C800.4,269.3,800.4,269,805.8,268.9M795,269.4C800.4,269.3,800.4,269.7,805.9,269.6M795,269.4C800.4,269.3,800.4,270.3,805.9,270.3M805.8,268.2C811.2,268.1,811.2,268.1,816.7,268M805.8,268.9C811.3,268.8,811.3,268.8,816.7,268.7M805.9,269.6C811.3,269.5,811.3,269.5,816.7,269.5M805.9,270.3C811.3,270.2,811.3,270.2,816.7,270.2M784.2,272.5C789.6,272.5,789.6,271.4,795,271.4M784.2,272.5C800.4,272.6,800.4,272.9,816.7,273.1M784.2,272.5C789.6,272.5,789.6,273.4,795,273.5M795,271.4C800.4,271.4,800.4,271,805.9,271M795,271.4C805.9,271.4,805.9,271.8,816.7,271.8M805.9,271C811.3,270.9,811.3,270.9,816.7,270.9M795,273.5C800.4,273.6,800.4,273.6,805.9,273.6M805.9,273.6C811.3,273.7,811.3,273.7,816.7,273.8M805.8,274.8C811.2,274.9,811.2,274.9,816.7,275M762.3,277.8C789.4,279.3,789.5,275.9,816.6,276.8M762.3,277.8C767.8,278.1,767.8,277.8,773.2,278.1M762.3,277.8C767.8,278.1,767.5,281.2,772.9,281.6M773.2,278.1C778.6,278.5,778.6,278.5,784,278.8M784,278.8C789.4,279.1,789.5,277.2,794.9,277.4M784,278.8C789.4,279.1,789.4,279.2,794.8,279.5M784,278.8C800.2,279.7,800.1,281.5,816.3,282.6M794.9,277.4C800.3,277.7,800.4,276.8,805.8,277M794.9,277.4C800.3,277.7,800.3,277.4,805.7,277.6M794.9,277.4C800.3,277.7,800.3,277.9,805.7,278.2M794.9,277.4C800.3,277.7,800.3,278.5,805.7,278.7M805.8,277C811.2,277.2,811.2,277.2,816.6,277.4M805.7,277.6C811.2,277.8,811.2,277.8,816.6,278M805.7,278.2C811.1,278.4,811.1,278.4,816.5,278.7M805.7,278.7C811.1,279,811.1,279,816.5,279.3M794.8,279.5C800.2,279.9,800.3,279,805.7,279.3M794.8,279.5C800.2,279.9,800.2,279.6,805.6,279.9M794.8,279.5C800.2,279.9,800.2,280.1,805.6,280.4M794.8,279.5C800.2,279.9,800.2,280.7,805.6,281M805.7,279.3C811.1,279.6,811.1,279.6,816.5,279.9M805.6,279.9C811,280.2,811,280.2,816.4,280.5M805.6,280.4C811,280.8,811,280.8,816.4,281.1M805.6,281C811,281.4,811,281.4,816.4,281.7M772.9,281.6C783.7,282.6,783.8,281.3,794.6,282.2M772.9,281.6C794.5,283.5,794.5,283.6,816.1,285.5M772.9,281.6C778.3,282.1,778.2,283.2,783.6,283.7M794.6,282.2C800,282.6,800.1,282.2,805.5,282.5M794.6,282.2C805.4,283,805.4,283.4,816.2,284.3M805.5,282.5C810.9,282.9,810.9,282.9,816.3,283.3M783.6,283.7C789,284.2,789,284.2,794.4,284.7M794.4,284.7C799.8,285.2,799.9,284.6,805.3,285.1M794.4,284.7C799.8,285.2,799.8,285.2,805.2,285.7M794.4,284.7C805.2,285.7,805.1,286.3,815.9,287.4M805.3,285.1C810.6,285.6,810.6,285.6,816,286.1M805.2,285.7C810.6,286.2,810.6,286.2,816,286.7M761.4,287C788.2,290.8,788.8,286.3,815.7,289.2M761.4,287C766.8,287.7,766.9,286.5,772.3,287.2M761.4,287C772.1,288.5,771.9,290.2,782.6,291.9M761.4,287C777.5,289.3,776.9,293.1,792.9,295.9M772.3,287.2C777.7,287.9,777.7,287.9,783.1,288.7M783.1,288.7C788.4,289.4,788.7,287.5,794,288.2M783.1,288.7C788.4,289.4,788.4,289.5,793.8,290.3M783.1,288.7C799.2,290.8,798.9,292.6,815,295M794,288.2C799.4,288.8,799.5,288,804.9,288.6M794,288.2C799.4,288.8,799.4,288.5,804.8,289.2M794,288.2C799.4,288.8,799.4,289.1,804.8,289.7M794,288.2C799.4,288.8,799.3,289.6,804.7,290.3M804.9,288.6C810.3,289.2,810.3,289.2,815.7,289.8M804.8,289.2C810.2,289.8,810.2,289.8,815.6,290.4M804.8,289.7C810.1,290.4,810.1,290.4,815.5,291M804.7,290.3C810.1,291,810.1,291,815.4,291.7M793.8,290.3C799.1,291,799.2,290.2,804.6,290.9M793.8,290.3C799.1,291,799.2,290.7,804.5,291.4M793.8,290.3C799.1,291,799.1,291.3,804.5,292M793.8,290.3C799.1,291,799,291.8,804.4,292.6M804.6,290.9C810,291.6,810,291.6,815.4,292.3M804.5,291.4C809.9,292.1,809.9,292.1,815.3,292.9M804.5,292C809.8,292.7,809.8,292.7,815.2,293.5M804.4,292.6C809.8,293.3,809.8,293.3,815.1,294.1M782.6,291.9C787.9,292.7,788,292,793.4,292.9M782.6,291.9C798.6,294.4,798.5,295.2,814.5,297.8M793.4,292.9C798.8,293.7,798.8,293.3,804.2,294.1M793.4,292.9C804.1,294.5,804,294.9,814.7,296.6M804.2,294.1C809.5,294.9,809.5,294.9,814.9,295.7M792.9,295.9C798.2,296.9,798.4,296,803.7,296.9M792.9,295.9C798.2,296.9,798.2,296.8,803.6,297.7M792.9,295.9C803.6,297.8,803.4,298.8,814,300.8M803.7,296.9C809.1,297.8,809.1,297.8,814.4,298.7M803.6,297.7C808.9,298.7,808.9,298.7,814.2,299.6M759.8,295.8C786.1,301.9,787.1,297.4,813.7,302.6M759.8,295.8C765,297,765.3,295.8,770.6,297M759.8,295.8C770.3,298.2,769.9,299.9,780.4,302.5M759.8,295.8C786.1,301.9,785.2,305.9,811.3,312.8M770.6,297C775.9,298.2,775.9,298.2,781.2,299.3M781.2,299.3C786.5,300.5,786.9,298.7,792.2,299.7M781.2,299.3C786.5,300.5,786.4,300.6,791.7,301.8M781.2,299.3C797.1,302.8,796.6,304.6,812.5,308.3M792.2,299.7C797.5,300.8,797.6,300,802.9,301.1M792.2,299.7C797.5,300.8,797.5,300.6,802.8,301.6M792.2,299.7C797.5,300.8,797.4,301.1,802.7,302.2M792.2,299.7C797.5,300.8,797.3,301.6,802.6,302.8M802.9,301.1C808.3,302.1,808.3,302.1,813.6,303.2M802.8,301.6C808.1,302.7,808.1,302.7,813.4,303.8M802.7,302.2C808,303.3,808,303.3,813.3,304.4M802.6,302.8C807.9,303.9,807.9,303.9,813.2,305M791.7,301.8C797,303,797.2,302.2,802.5,303.3M791.7,301.8C797,303,797.1,302.7,802.4,303.9M791.7,301.8C797,303,797,303.2,802.2,304.4M791.7,301.8C797,303,796.8,303.8,802.1,305M802.5,303.3C807.8,304.4,807.8,304.4,813.1,305.6M802.4,303.9C807.7,305,807.7,305,812.9,306.2M802.2,304.4C807.5,305.6,807.5,305.6,812.8,306.8M802.1,305C807.4,306.2,807.4,306.2,812.7,307.4M780.4,302.5C785.7,303.8,785.9,303.1,791.1,304.4M780.4,302.5C796.2,306.4,796,307.1,811.8,311M791.1,304.4C796.4,305.6,796.5,305.2,801.8,306.5M791.1,304.4C801.7,306.9,801.6,307.3,812.1,309.9M801.8,306.5C807,307.7,807,307.7,812.3,309M747.8,298.8C779,307.9,779.5,306,810.9,314.6M747.8,298.8C763.4,303.4,763.5,302.9,779.1,307.4M747.8,298.8C753,300.3,752.4,302.3,757.6,303.9M779.1,307.4C784.3,308.9,784.3,308.9,789.6,310.4M789.6,310.4C794.8,311.9,795,310.9,800.2,312.4M789.6,310.4C794.8,311.9,794.8,311.5,800.1,313M789.6,310.4C794.8,311.9,794.7,312.2,799.9,313.7M789.6,310.4C794.8,311.9,794.5,312.8,799.7,314.3M800.2,312.4C805.5,313.8,805.5,313.8,810.7,315.3M800.1,313C805.3,314.5,805.3,314.5,810.5,316M799.9,313.7C805.1,315.2,805.1,315.2,810.3,316.7M799.7,314.3C804.9,315.9,804.9,315.9,810.1,317.4M757.6,303.9C773.1,308.8,773.4,307.5,789,312.3M757.6,303.9C783.4,312,783.4,312,809.2,320.1M757.6,303.9C762.7,305.5,762.3,306.7,767.5,308.4M789,312.3C794.2,313.8,794.3,313.4,799.5,315M789,312.3C799.4,315.4,799.2,315.8,809.6,319M799.5,315C804.7,316.5,804.7,316.5,809.9,318.1M767.5,308.4C772.6,310.1,772.6,310.1,777.8,311.7M777.8,311.7C788.1,315.1,788.4,314.1,798.7,317.4M777.8,311.7C782.9,313.4,783,313.4,788.1,315M777.8,311.7C793.2,316.8,792.9,317.8,808.3,323M798.7,317.4C803.9,319.1,803.9,319.1,809.1,320.7M788.1,315C793.3,316.7,793.4,316.2,798.6,317.9M788.1,315C793.3,316.7,793.3,316.7,798.4,318.4M788.1,315C798.4,318.4,798.3,318.9,808.5,322.3M798.6,317.9C803.7,319.6,803.7,319.6,808.9,321.2M798.4,318.4C803.6,320,803.6,320,808.7,321.7M745.9,304.6C776.4,315.7,777,314.1,807.7,324.7M745.9,304.6C761.2,310.2,761.3,309.7,776.6,315.2M745.9,304.6C751,306.5,750.3,308.2,755.4,310.1M776.6,315.2C781.7,317,781.7,317,786.8,318.8M786.8,318.8C791.9,320.6,792.2,320,797.3,321.8M786.8,318.8C791.9,320.6,791.9,320.6,797,322.5M786.8,318.8C791.9,320.6,791.7,321.3,796.8,323.1M797.3,321.8C802.4,323.6,802.4,323.6,807.5,325.4M797,322.5C802.1,324.3,802.1,324.3,807.2,326.1M796.8,323.1C801.9,324.9,801.9,324.9,807,326.8M755.4,310.1C770.6,316,771,314.7,786.3,320.4M755.4,310.1C780.7,319.8,780.7,319.8,806,329.5M755.4,310.1C760.4,312.1,760,313.2,765,315.2M786.3,320.4C791.3,322.3,791.5,321.9,796.6,323.7M786.3,320.4C796.4,324.1,796.3,324.5,806.4,328.3M796.6,323.7C801.7,325.6,801.7,325.6,806.7,327.5M765,315.2C770.1,317.2,770.1,317.2,775.1,319.2M775.1,319.2C785.2,323.2,785.6,322.2,795.7,326.1M775.1,319.2C780.2,321.2,780.2,321.1,785.2,323.1M775.1,319.2C790.2,325.1,789.8,326.2,804.9,332.3M795.7,326.1C800.7,328.1,800.7,328.1,805.8,330M785.2,323.1C790.3,325.1,790.4,324.6,795.5,326.6M785.2,323.1C790.3,325.1,790.3,325.1,795.3,327M785.2,323.1C795.3,327.1,795.1,327.6,805.2,331.6M795.5,326.6C800.5,328.6,800.5,328.6,805.6,330.5M795.3,327C800.4,329,800.4,329,805.4,331M763.1,319.8C782.9,328.6,784.2,325.6,804.2,333.9M763.1,319.8C768,322,768.7,320.7,773.6,322.8M763.1,319.8C768,322,767.7,322.8,772.6,325.1M763.1,319.8C768,322,766.6,325.3,771.5,327.6M773.6,322.8C778.6,324.9,778.6,324.9,783.6,327.1M783.6,327.1C788.6,329.2,788.9,328.3,793.9,330.4M783.6,327.1C788.6,329.2,788.7,328.9,793.7,331M783.6,327.1C788.6,329.2,788.4,329.5,793.4,331.7M783.6,327.1C788.6,329.2,788.2,330.1,793.1,332.3M793.9,330.4C798.9,332.5,798.9,332.5,803.9,334.6M793.7,331C798.7,333.2,798.7,333.2,803.6,335.3M793.4,331.7C798.4,333.8,798.4,333.8,803.3,336M793.1,332.3C798.1,334.5,798.1,334.5,803.1,336.6M772.6,325.1C777.6,327.3,777.8,326.7,782.8,328.9M772.6,325.1C787.4,331.8,787.1,332.5,801.9,339.3M782.8,328.9C787.7,331.1,787.9,330.7,792.9,332.9M782.8,328.9C792.7,333.3,792.5,333.7,802.4,338.1M792.9,332.9C797.8,335.1,797.8,335.1,802.8,337.3M771.5,327.6C781.2,332.3,781.9,330.9,791.7,335.5M771.5,327.6C776.3,329.9,776.4,329.8,781.3,332.1M771.5,327.6C786.1,334.6,785.4,336.1,799.9,343.3M791.7,335.5C796.6,337.8,796.6,337.8,801.5,340.1M781.3,332.1C786.2,334.5,786.5,333.8,791.4,336.1M781.3,332.1C786.2,334.5,786.2,334.4,791.1,336.7M781.3,332.1C791.1,336.8,790.7,337.5,800.5,342.2M791.4,336.1C796.3,338.4,796.3,338.4,801.2,340.7M791.1,336.7C796,339.1,796,339.1,800.9,341.4M759.3,327.5C778.5,337.7,779.8,335.2,799.1,345M759.3,327.5C764.1,330.1,764.8,328.8,769.6,331.3M759.3,327.5C764.1,330.1,763.8,330.7,768.6,333.2M759.3,327.5C764.1,330.1,762.5,333,767.2,335.7M769.6,331.3C774.4,333.8,774.4,333.8,779.2,336.3M779.2,336.3C784,338.8,784.3,338.2,789.2,340.7M779.2,336.3C784,338.8,784,338.8,788.8,341.3M779.2,336.3C784,338.8,783.7,339.4,788.5,341.9M789.2,340.7C794,343.1,794,343.1,798.8,345.6M788.8,341.3C793.6,343.8,793.6,343.8,798.5,346.3M788.5,341.9C793.3,344.4,793.3,344.4,798.1,346.9M768.6,333.2C773.3,335.8,773.7,335.2,778.4,337.8M768.6,333.2C782.9,341,782.5,341.6,796.8,349.4M778.4,337.8C783.2,340.3,783.4,339.9,788.2,342.5M778.4,337.8C788,342.9,787.8,343.2,797.3,348.4M788.2,342.5C793,345,793,345,797.8,347.6M767.2,335.7C776.7,341,777.4,339.7,786.8,345M767.2,335.7C771.9,338.3,772,338.2,776.7,340.9M767.2,335.7C781.4,343.7,780.5,345.2,794.5,353.4M786.8,345C791.6,347.6,791.6,347.6,796.3,350.2M776.7,340.9C781.4,343.6,781.8,342.9,786.5,345.6M776.7,340.9C781.4,343.6,781.5,343.5,786.2,346.2M776.7,340.9C786.2,346.2,785.8,346.9,795.2,352.3M786.5,345.6C791.2,348.2,791.2,348.2,796,350.9M786.2,346.2C790.9,348.8,790.9,348.8,795.6,351.5M755.5,334.3C773.9,345.7,775,343.8,793.6,354.9M755.5,334.3C760.1,337.1,760.7,336.2,765.3,339M755.5,334.3C760.1,337.1,759.7,337.7,764.3,340.6M755.5,334.3C769.3,342.8,767.9,344.9,781.6,353.8M765.3,339C769.9,341.8,769.9,341.8,774.5,344.6M774.5,344.6C779.2,347.4,779.3,347.1,784,350M774.5,344.6C779.2,347.4,779,347.7,783.6,350.5M784,350C788.6,352.8,788.6,352.8,793.2,355.6M783.6,350.5C788.2,353.4,788.2,353.4,792.9,356.2M764.3,340.6C768.9,343.5,769.2,342.9,773.8,345.8M764.3,340.6C778,349.3,777.6,349.9,791.3,358.6M773.8,345.8C778.4,348.6,778.6,348.3,783.3,351.1M773.8,345.8C783,351.5,782.8,351.8,792,357.6M783.3,351.1C787.9,354,787.9,354,792.5,356.8M781.6,353.8C786.1,356.7,786.1,356.7,790.7,359.6M743.5,332.7C765.9,348,767.1,346.2,789.7,361.2M743.5,332.7C748,335.8,748.6,334.9,753.1,337.9M743.5,332.7C752.5,338.8,752,339.5,760.9,345.7M743.5,332.7C761.4,345,760,347,777.6,359.6M753.1,337.9C757.6,340.9,757.6,340.9,762.1,344M762.1,344C771.1,350,771.3,349.7,780.3,355.8M762.1,344C766.6,347,766.4,347.3,770.9,350.3M780.3,355.8C784.8,358.8,784.8,358.8,789.3,361.8M770.9,350.3C775.4,353.3,775.4,353.3,779.9,356.3M779.9,356.3C784.4,359.4,784.4,359.3,788.9,362.3M779.9,356.3C784.4,359.4,784.3,359.5,788.8,362.5M760.9,345.7C765.4,348.8,765.8,348.2,770.2,351.2M760.9,345.7C774.3,354.9,773.8,355.6,787.1,364.9M770.2,351.2C774.7,354.3,774.9,354,779.4,357M770.2,351.2C779.2,357.4,778.9,357.7,787.8,363.9M779.4,357C783.9,360.1,783.9,360.1,788.4,363.1M777.6,359.6C782,362.7,782,362.7,786.4,365.9M759.1,348.2C767.8,354.6,768.2,354.2,777,360.5M759.1,348.2C763.5,351.4,763.1,351.9,767.5,355.1M777,360.5C781.3,363.7,781.3,363.7,785.7,366.9M767.5,355.1C771.8,358.3,772.1,358,776.5,361.2M767.5,355.1C771.8,358.3,771.6,358.7,775.9,361.9M776.5,361.2C780.8,364.4,780.8,364.4,785.2,367.6M775.9,361.9C780.3,365.1,780.3,365.1,784.6,368.4M730.2,332.5C755.5,352.9,757.7,350.1,783.5,369.8M730.2,332.5C738.6,339.3,739.7,337.9,748.3,344.6M730.2,332.5C738.6,339.3,737.9,340.2,746.3,347.1M730.2,332.5C734.4,335.9,732.3,338.5,736.4,342M748.3,344.6C761.1,354.6,761.5,354,774.4,363.9M748.3,344.6C752.6,347.9,752.2,348.4,756.4,351.7M774.4,363.9C778.7,367.2,778.7,367.2,783,370.5M756.4,351.7C760.7,355.1,761,354.7,765.3,358M756.4,351.7C769.2,361.8,768.9,362.2,781.6,372.3M765.3,358C769.6,361.3,769.8,361.1,774.1,364.4M765.3,358C773.8,364.7,773.6,364.9,782.2,371.6M774.1,364.4C778.3,367.7,778.3,367.7,782.6,371M746.3,347.1C750.5,350.5,750.9,350,755.1,353.4M746.3,347.1C754.6,354,754.2,354.6,762.5,361.5M755.1,353.4C759.3,356.8,759.9,356.1,764.1,359.5M755.1,353.4C767.7,363.6,767.6,363.8,780.2,374.1M755.1,353.4C767.7,363.6,767.3,364.1,779.9,374.4M764.1,359.5C768.3,362.9,768.5,362.7,772.8,366M764.1,359.5C772.5,366.3,772.3,366.6,780.8,373.4M772.8,366C777,369.4,777,369.4,781.2,372.8M762.5,361.5C766.7,365,766.9,364.6,771.1,368.1M762.5,361.5C770.8,368.4,770.5,368.8,778.9,375.7M771.1,368.1C775.3,371.5,775.3,371.5,779.4,375M736.4,342C740.5,345.5,740.5,345.5,744.6,349.1M744.6,349.1C748.7,352.6,749.4,351.9,753.5,355.4M744.6,349.1C761.1,363.2,761.1,363.2,777.5,377.3M744.6,349.1C757,359.6,756.3,360.4,768.5,371.1M753.5,355.4C757.6,358.9,757.6,358.9,761.8,362.3M761.8,362.3C765.9,365.8,766.1,365.6,770.2,369.1M761.8,362.3C770,369.3,769.9,369.6,778.1,376.6M770.2,369.1C774.4,372.6,774.4,372.6,778.5,376.1M768.5,371.1C772.6,374.7,773,374.3,777.1,377.8M768.5,371.1C772.6,374.7,772.7,374.5,776.8,378.1M768.5,371.1C772.6,374.7,772.5,374.8,776.6,378.4M768.5,371.1C772.6,374.7,772.3,375.1,776.3,378.6M725,338.5C748.6,360.9,750.9,358.3,775.1,380M725,338.5C732.8,346,734,344.7,742,352M725,338.5C732.8,346,732,346.8,739.8,354.3M725,338.5C728.9,342.2,726.6,344.6,730.4,348.5M742,352C754,363,754.5,362.5,766.5,373.4M742,352C746,355.7,745.6,356.1,749.6,359.8M766.5,373.4C770.5,377,770.5,377,774.5,380.7M749.6,359.8C753.5,363.5,753.9,363.1,757.9,366.7M749.6,359.8C761.5,370.8,761.1,371.3,773,382.3M757.9,366.7C761.9,370.4,762.1,370.2,766.1,373.8M757.9,366.7C765.9,374.1,765.6,374.3,773.6,381.7M766.1,373.8C770.1,377.5,770.1,377.5,774.1,381.1M739.8,354.3C743.7,358.1,744.2,357.6,748.1,361.3M739.8,354.3C747.6,361.9,747.1,362.4,754.8,370M748.1,361.3C752,365.1,752.6,364.5,756.6,368.2M748.1,361.3C759.9,372.6,759.7,372.7,771.4,384M748.1,361.3C759.9,372.6,759.4,373,771.1,384.3M756.6,368.2C760.5,371.9,760.7,371.7,764.7,375.4M756.6,368.2C764.4,375.6,764.2,375.9,772.1,383.3M764.7,375.4C768.6,379.1,768.6,379.1,772.6,382.8M754.8,370C758.7,373.8,759,373.5,762.8,377.3M754.8,370C762.5,377.6,762.2,377.9,770,385.5M762.8,377.3C766.7,381.1,766.7,381.1,770.6,384.8M730.4,348.5C734.2,352.3,734.2,352.3,738,356.2M738,356.2C741.8,360,742.5,359.3,746.3,363.2M738,356.2C753.3,371.6,753.3,371.5,768.5,386.9M738,356.2C749.5,367.7,748.7,368.4,760,380.1M746.3,363.2C750.2,367,750.2,367,754,370.8M754,370.8C757.9,374.6,758.1,374.4,761.9,378.2M754,370.8C761.7,378.4,761.5,378.6,769.2,386.3M761.9,378.2C765.7,382.1,765.7,382.1,769.6,385.9M760,380.1C763.8,384,764.2,383.6,768,387.5M760,380.1C763.8,384,763.9,383.8,767.7,387.7M760,380.1C763.8,384,763.7,384.1,767.5,388M760,380.1C763.8,384,763.4,384.3,767.2,388.2M719.3,344C741,368.2,743.6,365.9,765.9,389.5M719.3,344C726.5,352.1,727.8,350.9,735.2,358.9M719.3,344C726.5,352.1,725.6,352.9,732.8,361M719.3,344C722.9,348.1,720.4,350.2,723.9,354.4M735.2,358.9C746.2,370.8,746.7,370.3,757.8,382.2M735.2,358.9C738.9,362.8,738.4,363.3,742.1,367.3M757.8,382.2C761.5,386.2,761.5,386.2,765.2,390.1M742.1,367.3C745.7,371.2,746.1,370.9,749.8,374.9M742.1,367.3C753.1,379.2,752.6,379.6,763.6,391.6M749.8,374.9C753.5,378.8,753.7,378.6,757.4,382.6M749.8,374.9C757.2,382.8,756.9,383.1,764.2,391M757.4,382.6C761.1,386.6,761.1,386.6,764.8,390.5M732.8,361C736.4,365.1,736.9,364.6,740.5,368.7M732.8,361C739.9,369.2,739.4,369.7,746.5,377.9M740.5,368.7C744.1,372.7,744.7,372.2,748.4,376.2M740.5,368.7C751.3,380.8,751.1,381,761.9,393.1M740.5,368.7C751.3,380.8,750.8,381.2,761.5,393.4M748.4,376.2C752,380.2,752.2,380,755.9,384M748.4,376.2C755.6,384.2,755.3,384.5,762.6,392.5M755.9,384C759.5,388,759.5,388,763.1,392M746.5,377.9C750,382,750.3,381.7,753.9,385.8M746.5,377.9C753.6,386,753.2,386.3,760.3,394.5M753.9,385.8C757.4,389.8,757.4,389.8,761,393.9M723.9,354.4C727.4,358.5,727.4,358.5,730.9,362.7M730.9,362.7C734.3,366.8,735.1,366.2,738.6,370.3M730.9,362.7C744.8,379.3,744.8,379.3,758.7,395.9M730.9,362.7C741.3,375.1,740.5,375.8,750.9,388.3M738.6,370.3C742.1,374.5,742.1,374.5,745.6,378.6M745.6,378.6C749.1,382.7,749.3,382.5,752.9,386.6M745.6,378.6C752.6,386.8,752.4,387,759.4,395.3M752.9,386.6C756.4,390.8,756.4,390.8,759.9,394.9M750.9,388.3C754.3,392.5,754.7,392.2,758.2,396.3M750.9,388.3C754.3,392.5,754.4,392.4,757.9,396.6M750.9,388.3C754.3,392.5,754.2,392.6,757.6,396.8M750.9,388.3C754.3,392.5,753.9,392.8,757.3,397M713.2,349.1C732.8,375,735.6,372.8,755.9,398.2M713.2,349.1C719.7,357.7,721.1,356.6,727.8,365.2M713.2,349.1C719.7,357.7,718.8,358.4,725.2,367.1M713.2,349.1C716.4,353.4,713.8,355.4,716.9,359.8M727.8,365.2C737.8,377.9,738.4,377.5,748.5,390.3M727.8,365.2C731.2,369.4,730.7,369.8,734,374.1M748.5,390.3C751.8,394.5,751.8,394.5,755.2,398.7M734,374.1C737.3,378.4,737.7,378,741.1,382.3M734,374.1C744,386.9,743.5,387.3,753.4,400.1M741.1,382.3C744.4,386.6,744.7,386.4,748,390.6M741.1,382.3C747.8,390.8,747.5,391,754.2,399.6M748,390.6C751.4,394.9,751.4,394.9,754.7,399.1M725.2,367.1C728.5,371.5,729.1,371,732.3,375.4M725.2,367.1C731.7,375.8,731.1,376.3,737.5,385M732.3,375.4C735.6,379.7,736.2,379.2,739.5,383.5M732.3,375.4C742.1,388.3,741.9,388.5,751.6,401.5M732.3,375.4C742.1,388.3,741.6,388.7,751.3,401.8M739.5,383.5C742.8,387.8,743.1,387.6,746.4,391.9M739.5,383.5C746.1,392.1,745.8,392.3,752.4,400.9M746.4,391.9C749.7,396.2,749.7,396.2,752.9,400.5M737.5,385C740.7,389.4,741,389.1,744.2,393.5M737.5,385C743.9,393.7,743.6,394,749.9,402.7M744.2,393.5C747.5,397.9,747.5,397.9,750.7,402.2M716.9,359.8C720,364.2,720,364.2,723.2,368.6M723.2,368.6C726.3,373,727.1,372.5,730.3,376.9M723.2,368.6C735.7,386.3,735.7,386.3,748.3,403.9M723.2,368.6C732.6,381.9,731.7,382.5,741,395.8M730.3,376.9C733.4,381.3,733.4,381.3,736.6,385.7M736.6,385.7C739.8,390.1,740,389.9,743.2,394.3M736.6,385.7C742.9,394.4,742.7,394.6,749,403.4M743.2,394.3C746.3,398.7,746.3,398.7,749.5,403.1M741,395.8C744.1,400.2,744.6,399.9,747.7,404.4M741,395.8C744.1,400.2,744.3,400.1,747.4,404.6M741,395.8C744.1,400.2,744,400.3,747.1,404.8M741,395.8C744.1,400.2,743.7,400.5,746.8,405M707.4,353.2C725.1,380.4,727.1,379.1,745.3,406M707.4,353.2C710.3,357.7,710.4,357.7,713.3,362.2M707.4,353.2C710.3,357.7,708.8,358.7,711.6,363.3M713.3,362.2C716.3,366.8,716.9,366.4,719.8,370.9M713.3,362.2C716.3,366.8,715.7,367.1,718.7,371.7M719.8,370.9C722.8,375.4,723.2,375.2,726.2,379.7M719.8,370.9C728.8,384.5,728.4,384.7,737.3,398.3M726.2,379.7C729.2,384.2,729.5,384,732.5,388.5M726.2,379.7C732.2,388.7,731.9,388.9,737.9,398M732.5,388.5C735.6,393,735.8,392.8,738.8,397.3M732.5,388.5C738.6,397.5,738.3,397.6,744.3,406.7M738.8,397.3C741.8,401.8,741.8,401.8,744.8,406.3M737.9,398C740.8,402.5,740.8,402.5,743.8,407M737.3,398.3C740.3,402.9,740.3,402.9,743.2,407.4M718.7,371.7C721.6,376.2,721.6,376.2,724.5,380.8M724.5,380.8C727.4,385.4,727.8,385.1,730.7,389.7M724.5,380.8C733.3,394.5,732.9,394.7,741.7,408.4M730.7,389.7C733.7,394.2,733.9,394.1,736.9,398.6M730.7,389.7C736.6,398.8,736.4,398.9,742.3,408M736.9,398.6C739.8,403.1,739.8,403.1,742.8,407.7M711.6,363.3C714.5,367.9,714.5,367.9,717.4,372.5M717.4,372.5C728.9,390.9,729.3,390.6,740.9,408.9M717.4,372.5C728.9,390.9,729,390.8,740.5,409.1M717.4,372.5C720.2,377.1,719.7,377.4,722.5,382M722.5,382C728.2,391.3,728.5,391.1,734.3,400.3M722.5,382C725.4,386.6,725.1,386.8,727.9,391.4M734.3,400.3C737.1,404.9,737.1,404.9,740,409.5M727.9,391.4C730.8,396.1,731,395.9,733.8,400.5M727.9,391.4C733.6,400.7,733.4,400.8,739,410.1M733.8,400.5C736.7,405.1,736.7,405.1,739.5,409.7M702.6,356.1C718.8,384.3,720.8,383.1,737.4,411M702.6,356.1C705.3,360.8,705.4,360.7,708.1,365.4M702.6,356.1C705.3,360.8,703.7,361.7,706.3,366.4M708.1,365.4C710.8,370.1,711.3,369.8,714.1,374.5M708.1,365.4C710.8,370.1,710.2,370.5,712.8,375.2M714.1,374.5C716.8,379.2,717.2,378.9,719.9,383.6M714.1,374.5C722.2,388.5,721.8,388.8,729.9,402.9M719.9,383.6C722.7,388.3,723,388.1,725.7,392.8M719.9,383.6C725.4,393,725,393.2,730.5,402.5M725.7,392.8C728.5,397.4,728.7,397.3,731.5,402M725.7,392.8C731.2,402.1,731,402.2,736.5,411.6M731.5,402C734.2,406.6,734.2,406.6,737,411.3M730.5,402.5C733.2,407.2,733.2,407.2,735.9,411.9M729.9,402.9C732.6,407.6,732.6,407.6,735.3,412.3M712.8,375.2C715.5,379.9,715.5,379.9,718.2,384.6M718.2,384.6C720.8,389.3,721.2,389.1,723.9,393.8M718.2,384.6C726.2,398.8,725.7,399,733.7,413.2M723.9,393.8C726.6,398.5,726.8,398.4,729.5,403.1M723.9,393.8C729.2,403.3,729,403.4,734.3,412.8M729.5,403.1C732.2,407.8,732.2,407.8,734.9,412.5M706.3,366.4C708.9,371.2,708.9,371.2,711.5,375.9M711.5,375.9C721.9,394.9,722.4,394.7,732.9,413.6M711.5,375.9C721.9,394.9,722.1,394.9,732.5,413.8M711.5,375.9C714.1,380.7,713.5,381,716.1,385.8M716.1,385.8C721.3,395.3,721.6,395.1,726.8,404.6M716.1,385.8C718.7,390.5,718.4,390.7,721,395.5M726.8,404.6C729.4,409.4,729.4,409.4,732,414.1M721,395.5C723.5,400.2,723.8,400.1,726.4,404.9M721,395.5C726.1,405,725.8,405.1,731,414.7M726.4,404.9C728.9,409.6,728.9,409.6,731.5,414.4M697,359.1C711.2,388.3,714.3,386.7,729.4,415.5M697,359.1C701.7,368.8,703.3,368,708.2,377.7M697,359.1C701.7,368.8,700.7,369.3,705.3,379.1M697,359.1C699.3,363.9,696.3,365.3,698.5,370.3M708.2,377.7C715.6,392.2,716.1,391.9,723.6,406.3M708.2,377.7C710.6,382.5,710.1,382.8,712.5,387.6M723.6,406.3C726.1,411.1,726.1,411.1,728.5,415.9M712.5,387.6C714.9,392.5,715.4,392.2,717.9,397.1M712.5,387.6C719.8,402.2,719.3,402.4,726.5,417M717.9,397.1C720.3,401.9,720.6,401.7,723.1,406.6M717.9,397.1C722.8,406.7,722.5,406.9,727.3,416.6M723.1,406.6C725.5,411.4,725.5,411.4,728,416.2M705.3,379.1C707.6,384,708.3,383.7,710.6,388.6M705.3,379.1C709.9,388.9,709.3,389.2,713.8,399M710.6,388.6C713,393.4,713.7,393.1,716.1,397.9M710.6,388.6C717.7,403.2,717.5,403.3,724.5,418M710.6,388.6C717.7,403.2,717.1,403.5,724.1,418.2M716.1,397.9C718.5,402.8,718.8,402.7,721.2,407.5M716.1,397.9C720.9,407.7,720.6,407.8,725.3,417.6M721.2,407.5C723.6,412.4,723.6,412.4,726,417.2M713.8,399C716.1,403.9,716.5,403.8,718.8,408.7M713.8,399C718.4,408.8,718,409,722.6,418.9M718.8,408.7C721.1,413.6,721.1,413.6,723.4,418.5M698.5,370.3C700.8,375.2,700.8,375.2,703,380.2M703,380.2C705.2,385.1,706.1,384.7,708.3,389.6M703,380.2C711.9,399.9,711.9,399.9,720.7,419.7M703,380.2C709.6,395,708.7,395.4,715.2,410.3M708.3,389.6C710.6,394.6,710.6,394.6,712.8,399.5M712.8,399.5C715.1,404.4,715.3,404.3,717.6,409.2M712.8,399.5C717.3,409.3,717.1,409.5,721.6,419.3M717.6,409.2C719.9,414.2,719.9,414.2,722.1,419.1M715.2,410.3C717.4,415.3,717.9,415,720.1,420M715.2,410.3C717.4,415.3,717.6,415.2,719.7,420.1M715.2,410.3C717.4,415.3,717.2,415.3,719.4,420.3M715.2,410.3C717.4,415.3,716.9,415.5,719.1,420.4M689.7,362.3C701.5,392.5,704.7,391.2,717.4,421.2M689.7,362.3C693.6,372.4,695.3,371.7,699.4,381.7M689.7,362.3C693.6,372.4,692.5,372.8,696.4,382.9M689.7,362.3C691.7,367.3,688.6,368.5,690.4,373.6M699.4,381.7C705.5,396.8,706.2,396.5,712.4,411.5M699.4,381.7C701.4,386.7,700.8,387,702.9,392M712.4,411.5C714.5,416.5,714.5,416.5,716.5,421.5M702.9,392C704.9,397,705.4,396.8,707.4,401.8M702.9,392C709,407.1,708.4,407.3,714.5,422.4M707.4,401.8C709.5,406.8,709.8,406.7,711.9,411.7M707.4,401.8C711.5,411.9,711.2,412,715.3,422M711.9,411.7C713.9,416.7,713.9,416.7,716,421.7M696.4,382.9C698.3,388,699,387.7,700.9,392.8M696.4,382.9C700.2,393,699.5,393.3,703.3,403.5M700.9,392.8C702.9,397.8,703.7,397.5,705.6,402.6M700.9,392.8C706.8,407.9,706.5,408,712.4,423.2M700.9,392.8C706.8,407.9,706.2,408.2,711.9,423.4M705.6,402.6C707.6,407.6,707.9,407.5,709.9,412.5M705.6,402.6C709.6,412.6,709.3,412.8,713.2,422.9M709.9,412.5C711.9,417.6,711.9,417.6,713.9,422.6M703.3,403.5C705.2,408.5,705.5,408.4,707.4,413.5M703.3,403.5C707,413.6,706.6,413.8,710.4,423.9M707.4,413.5C709.3,418.5,709.3,418.5,711.2,423.6M690.4,373.6C692.2,378.7,692.2,378.7,694,383.8M694,383.8C695.8,388.9,696.7,388.6,698.5,393.7M694,383.8C701.2,404.2,701.2,404.2,708.5,424.6M694,383.8C699.4,399.1,698.4,399.4,703.7,414.8M698.5,393.7C700.4,398.8,700.4,398.8,702.2,403.8M702.2,403.8C704.1,408.9,704.3,408.8,706.2,413.9M702.2,403.8C705.9,414,705.6,414.1,709.3,424.3M706.2,413.9C708,419,708,419,709.9,424.1M703.7,414.8C705.5,419.9,706,419.8,707.8,424.9M703.7,414.8C705.5,419.9,705.7,419.9,707.4,425M703.7,414.8C705.5,419.9,705.3,420,707.1,425.1M703.7,414.8C705.5,419.9,705,420.1,706.7,425.2M682.2,364.8C691.5,396,694.8,394.9,705,425.8M682.2,364.8C685.3,375.2,687,374.7,690.3,385M682.2,364.8C685.3,375.2,684.2,375.6,687.2,386M682.2,364.8C683.7,370,680.6,370.9,681.9,376.2M690.3,385C695.2,400.5,695.8,400.3,700.8,415.8M690.3,385C691.9,390.2,691.3,390.4,692.9,395.6M700.8,415.8C702.5,420.9,702.5,420.9,704.1,426.1M692.9,395.6C694.5,400.7,695,400.6,696.7,405.7M692.9,395.6C697.8,411.1,697.2,411.2,702,426.8M696.7,405.7C698.3,410.9,698.6,410.8,700.3,416M696.7,405.7C699.9,416.1,699.6,416.2,702.9,426.5M700.3,416C701.9,421.1,701.9,421.1,703.6,426.3M687.2,386C688.7,391.2,689.4,391,690.9,396.2M687.2,386C690.2,396.4,689.4,396.6,692.4,407M690.9,396.2C692.4,401.4,693.2,401.1,694.8,406.3M690.9,396.2C695.5,411.7,695.3,411.8,699.8,427.4M690.9,396.2C695.5,411.7,694.9,411.9,699.4,427.5M694.8,406.3C696.4,411.5,696.7,411.4,698.3,416.6M694.8,406.3C697.9,416.7,697.6,416.8,700.7,427.2M698.3,416.6C699.8,421.8,699.8,421.8,701.4,426.9M692.4,407C693.8,412.2,694.2,412.1,695.7,417.3M692.4,407C695.3,417.4,694.9,417.6,697.8,428M695.7,417.3C697.2,422.5,697.2,422.5,698.7,427.7M681.9,376.2C683.3,381.4,683.3,381.4,684.7,386.6M684.7,386.6C686.1,391.9,687,391.6,688.4,396.9M684.7,386.6C690.3,407.6,690.3,407.6,695.8,428.5M684.7,386.6C688.9,402.4,687.9,402.6,691.9,418.4M688.4,396.9C689.9,402.1,689.9,402.1,691.3,407.3M691.3,407.3C692.7,412.5,693,412.5,694.4,417.7M691.3,407.3C694.1,417.8,693.9,417.8,696.7,428.3M694.4,417.7C695.9,422.9,695.9,422.9,697.3,428.1M691.9,418.4C693.2,423.6,693.8,423.5,695.1,428.7M691.9,418.4C693.2,423.6,693.4,423.6,694.8,428.8M691.9,418.4C693.2,423.6,693.1,423.6,694.4,428.9M691.9,418.4C693.2,423.6,692.7,423.7,694.1,429M674.5,366.8C681.3,398.6,684.7,397.8,692.3,429.4M674.5,366.8C676.8,377.4,678.5,377,680.9,387.6M674.5,366.8C676.8,377.4,675.6,377.6,677.8,388.3M674.5,366.8C675.6,372.1,672.4,372.7,673.3,378.1M680.9,387.6C684.5,403.4,685.2,403.3,688.9,419.1M680.9,387.6C682.1,392.9,681.5,393,682.7,398.3M688.9,419.1C690.2,424.4,690.2,424.4,691.4,429.6M682.7,398.3C683.9,403.6,684.4,403.5,685.6,408.7M682.7,398.3C686.3,414.1,685.7,414.3,689.2,430.1M685.6,408.7C686.8,414,687.1,413.9,688.4,419.2M685.6,408.7C688,419.3,687.7,419.4,690.1,429.9M688.4,419.2C689.6,424.5,689.6,424.5,690.8,429.8M677.8,388.3C678.8,393.6,679.5,393.4,680.6,398.7M677.8,388.3C679.9,398.9,679.1,399,681.2,409.7M680.6,398.7C681.7,404,682.6,403.9,683.7,409.2M680.6,398.7C683.9,414.6,683.7,414.7,687,430.6M680.6,398.7C683.9,414.6,683.3,414.8,686.5,430.7M683.7,409.2C684.8,414.5,685.2,414.4,686.3,419.7M683.7,409.2C686,419.8,685.6,419.8,687.9,430.4M686.3,419.7C687.5,425,687.5,425,688.6,430.3M681.2,409.7C682.3,415,682.7,414.9,683.7,420.2M681.2,409.7C683.3,420.3,682.9,420.4,684.9,431M683.7,420.2C684.8,425.5,684.8,425.5,685.8,430.8M673.3,378.1C674.3,383.4,674.3,383.4,675.2,388.7M675.2,388.7C676.2,394.1,677.1,393.9,678.1,399.2M675.2,388.7C679.1,410.1,679.1,410.1,682.9,431.4M675.2,388.7C678.1,404.7,677.1,404.9,679.8,420.9M678.1,399.2C679.1,404.6,679.1,404.6,680.1,409.9M680.1,409.9C681.1,415.2,681.4,415.2,682.4,420.5M680.1,409.9C682.1,420.5,681.8,420.6,683.8,431.2M682.4,420.5C683.4,425.8,683.4,425.8,684.4,431.1M679.8,420.9C680.7,426.3,681.3,426.2,682.2,431.5M679.8,420.9C680.7,426.3,680.9,426.2,681.8,431.6M679.8,420.9C680.7,426.3,680.6,426.3,681.5,431.6M679.8,420.9C680.7,426.3,680.2,426.4,681.1,431.7M667.5,368C672,400.2,674.3,399.9,679.3,432M667.5,368C668.3,373.4,668.3,373.4,669.1,378.8M667.5,368C668.3,373.4,666.4,373.6,667,379M669.1,378.8C669.8,384.1,670.5,384,671.2,389.4M669.1,378.8C669.8,384.1,669.1,384.2,669.8,389.6M671.2,389.4C672,394.8,672.5,394.7,673.3,400M671.2,389.4C673.6,405.5,673.1,405.5,675.4,421.6M673.3,400C674.1,405.4,674.4,405.3,675.3,410.7M673.3,400C674.9,410.8,674.5,410.8,676,421.5M675.3,410.7C676.1,416.1,676.3,416,677.2,421.4M675.3,410.7C676.9,421.4,676.6,421.5,678.2,432.2M677.2,421.4C678,426.7,678,426.7,678.8,432.1M676,421.5C676.8,426.9,676.8,426.9,677.6,432.3M675.4,421.6C676.1,427,676.1,427,676.9,432.4M669.8,389.6C670.6,395,670.6,395,671.3,400.3M671.3,400.3C672,405.7,672.4,405.6,673.1,411M671.3,400.3C673.4,416.4,672.9,416.5,675,432.6M673.1,411C673.9,416.4,674.1,416.3,674.9,421.7M673.1,411C674.6,421.7,674.3,421.8,675.7,432.5M674.9,421.7C675.6,427.1,675.6,427.1,676.3,432.4M667,379C667.7,384.4,667.7,384.4,668.3,389.8M668.3,389.8C670.9,411.3,671.5,411.2,674.1,432.7M668.3,389.8C670.9,411.3,671.1,411.3,673.7,432.8M668.3,389.8C669,395.2,668.3,395.2,669,400.6M669,400.6C670.2,411.4,670.5,411.3,671.8,422.1M669,400.6C669.6,406,669.2,406,669.8,411.4M671.8,422.1C672.4,427.5,672.4,427.5,673,432.9M669.8,411.4C670.4,416.8,670.7,416.8,671.3,422.1M669.8,411.4C671,422.2,670.7,422.2,671.9,433M671.3,422.1C671.9,427.5,671.9,427.5,672.5,432.9M662,368.6C664.6,401,666.9,400.8,670.1,433.2M662,368.6C662.4,374,662.5,374,662.9,379.4M662,368.6C662.4,374,660.6,374.2,660.9,379.6M662.9,379.4C663.3,384.8,664,384.8,664.5,390.2M662.9,379.4C663.3,384.8,662.7,384.9,663.1,390.3M664.5,390.2C665,395.6,665.4,395.5,665.9,400.9M664.5,390.2C665.9,406.4,665.4,406.4,666.7,422.6M665.9,400.9C666.4,406.3,666.8,406.3,667.3,411.7M665.9,400.9C666.9,411.7,666.5,411.7,667.4,422.5M667.3,411.7C667.8,417.1,668,417,668.6,422.4M667.3,411.7C668.3,422.5,668,422.5,669,433.3M668.6,422.4C669.1,427.8,669.1,427.8,669.6,433.2M667.4,422.5C667.9,427.9,667.9,427.9,668.4,433.3M666.7,422.6C667.2,428,667.2,428,667.6,433.4M663.1,390.3C663.5,395.7,663.5,395.7,663.9,401.1M663.9,401.1C664.3,406.5,664.7,406.5,665.1,411.9M663.9,401.1C665.1,417.3,664.6,417.3,665.8,433.5M665.1,411.9C665.6,417.3,665.8,417.2,666.3,422.6M665.1,411.9C666,422.7,665.7,422.7,666.5,433.5M666.3,422.6C666.7,428,666.7,428,667.1,433.4M660.9,379.6C661.2,385,661.2,385,661.6,390.4M661.6,390.4C662.9,412,663.5,412,664.9,433.6M661.6,390.4C662.9,412,663.1,412,664.4,433.6M661.6,390.4C661.9,395.8,661.3,395.8,661.6,401.2M661.6,401.2C662.2,412.1,662.5,412,663.2,422.9M661.6,401.2C661.9,406.6,661.5,406.7,661.8,412.1M663.2,422.9C663.5,428.3,663.5,428.3,663.8,433.7M661.8,412.1C662.1,417.5,662.4,417.5,662.7,422.9M661.8,412.1C662.4,422.9,662.1,422.9,662.7,433.7M662.7,422.9C663,428.3,663,428.3,663.3,433.7M655.6,368.9C656,401.4,659.5,401.3,660.9,433.8M655.6,368.9C655.7,379.8,657.5,379.7,657.8,390.6M655.6,368.9C655.7,379.8,654.6,379.8,654.6,390.6M655.6,368.9C655.7,374.4,652.3,374.3,652.2,379.8M657.8,390.6C658.3,406.8,659,406.8,659.6,423M657.8,390.6C658,396,657.4,396,657.5,401.4M659.6,423C659.7,428.4,659.7,428.4,659.9,433.8M657.5,401.4C657.6,406.8,658.2,406.8,658.3,412.2M657.5,401.4C657.9,417.7,657.3,417.7,657.7,433.9M658.3,412.2C658.5,417.6,658.8,417.6,659,423M658.3,412.2C658.6,423.1,658.3,423.1,658.6,433.9M659,423C659.2,428.5,659.2,428.5,659.3,433.9M654.6,390.6C654.6,396,655.4,396,655.4,401.4M654.6,390.6C654.6,401.4,653.9,401.4,653.8,412.3M655.4,401.4C655.5,406.9,656.3,406.9,656.4,412.3M655.4,401.4C655.6,417.7,655.3,417.7,655.4,433.9M655.4,401.4C655.6,417.7,654.9,417.7,655,433.9M656.4,412.3C656.5,417.7,656.8,417.7,656.9,423.1M656.4,412.3C656.5,423.1,656.2,423.1,656.3,433.9M656.9,423.1C657,428.5,657,428.5,657.1,433.9M653.8,412.3C653.8,417.7,654.2,417.7,654.2,423.1M653.8,412.3C653.8,423.1,653.4,423.1,653.3,433.9M654.2,423.1C654.2,428.5,654.2,428.5,654.2,433.9M652.2,379.8C652.1,385.2,652.1,385.2,652,390.6M652,390.6C651.9,396,652.9,396,652.8,401.4M652,390.6C651.7,412.3,651.7,412.3,651.3,433.9M652,390.6C651.8,406.8,650.7,406.8,650.3,423.1M652.8,401.4C652.8,406.9,652.8,406.9,652.7,412.3M652.7,412.3C652.7,417.7,652.9,417.7,652.9,423.1M652.7,412.3C652.6,423.1,652.3,423.1,652.2,433.9M652.9,423.1C652.9,428.5,652.9,428.5,652.8,433.9M650.3,423.1C650.1,428.5,650.7,428.5,650.6,433.9M650.3,423.1C650.1,428.5,650.3,428.5,650.2,433.9M650.3,423.1C650.1,428.5,650,428.5,649.8,433.9M650.3,423.1C650.1,428.5,649.6,428.5,649.5,433.9M647.6,368.7C645.5,401.2,648.9,401.3,647.6,433.8M647.6,368.7C646.9,379.5,648.7,379.6,648.1,390.5M647.6,368.7C646.9,379.5,645.8,379.5,644.9,390.3M647.6,368.7C647.3,374.1,644,373.9,643.4,379.2M648.1,390.5C647.3,406.7,648,406.7,647.2,423M648.1,390.5C647.8,395.9,647.2,395.8,646.9,401.2M647.2,423C647,428.4,647,428.4,646.7,433.8M646.9,401.2C646.6,406.7,647.1,406.7,646.9,412.1M646.9,401.2C646,417.5,645.4,417.4,644.5,433.7M646.9,412.1C646.6,417.5,646.9,417.5,646.6,422.9M646.9,412.1C646.3,422.9,646,422.9,645.4,433.7M646.6,422.9C646.4,428.3,646.4,428.3,646.1,433.7M644.9,390.3C644.5,395.7,645.2,395.7,644.8,401.1M644.9,390.3C644.1,401.1,643.3,401,642.4,411.8M644.8,401.1C644.4,406.5,645.3,406.6,644.9,412M644.8,401.1C643.7,417.3,643.4,417.3,642.2,433.5M644.8,401.1C643.7,417.3,643,417.3,641.8,433.5M644.9,412C644.6,417.4,644.9,417.4,644.5,422.8M644.9,412C644.2,422.8,643.9,422.8,643.1,433.6M644.5,422.8C644.2,428.2,644.2,428.2,643.9,433.6M642.4,411.8C641.9,417.2,642.3,417.2,641.9,422.6M642.4,411.8C641.5,422.6,641.1,422.5,640.1,433.3M641.9,422.6C641.5,428,641.5,428,641,433.4M643.4,379.2C642.9,384.6,642.9,384.6,642.4,390M642.4,390C641.8,395.4,642.8,395.5,642.3,400.9M642.4,390C640.2,411.6,640.2,411.6,638.1,433.1M642.4,390C640.7,406.2,639.7,406.1,638,422.2M642.3,400.9C641.8,406.3,641.8,406.3,641.3,411.7M641.3,411.7C640.8,417.1,641.1,417.1,640.6,422.5M641.3,411.7C640.3,422.5,640,422.5,639,433.2M640.6,422.5C640.1,427.9,640.1,427.9,639.6,433.3M638,422.2C637.4,427.6,637.9,427.7,637.4,433.1M638,422.2C637.4,427.6,637.6,427.6,637,433M638,422.2C637.4,427.6,637.2,427.6,636.6,433M638,422.2C637.4,427.6,636.9,427.6,636.3,433M639.8,367.9C634.9,400,638.4,400.5,634.4,432.7M639.8,367.9C638.2,378.6,639.9,378.8,638.5,389.6M639.8,367.9C638.2,378.6,637,378.4,635.3,389.1M639.8,367.9C639,373.2,635.7,372.7,634.7,378M638.5,389.6C636.3,405.7,637,405.8,634.9,421.9M638.5,389.6C637.7,394.9,637.1,394.9,636.4,400.2M634.9,421.9C634.2,427.3,634.2,427.3,633.5,432.6M636.4,400.2C635.6,405.6,636.2,405.7,635.5,411M636.4,400.2C634.2,416.3,633.6,416.2,631.3,432.3M635.5,411C634.7,416.4,635.1,416.4,634.4,421.8M635.5,411C634,421.8,633.7,421.7,632.2,432.5M634.4,421.8C633.6,427.2,633.6,427.2,632.9,432.6M635.3,389.1C634.4,394.5,635.1,394.6,634.3,399.9M635.3,389.1C633.6,399.8,632.8,399.7,631,410.4M634.3,399.9C633.5,405.3,634.3,405.4,633.5,410.8M634.3,399.9C631.8,416,631.6,415.9,629.1,432M634.3,399.9C631.8,416,631.2,415.9,628.6,431.9M633.5,410.8C632.7,416.1,633,416.2,632.3,421.5M633.5,410.8C631.9,421.5,631.6,421.4,630,432.1M632.3,421.5C631.5,426.9,631.5,426.9,630.7,432.2M631,410.4C630.1,415.7,630.5,415.8,629.7,421.1M631,410.4C629.2,421,628.8,421,627,431.7M629.7,421.1C628.8,426.5,628.8,426.5,627.9,431.8M634.7,378C633.7,383.3,633.7,383.3,632.8,388.7M632.8,388.7C631.8,394,632.7,394.2,631.8,399.5M632.8,388.7C628.9,410,628.9,410,625,431.3M632.8,388.7C629.8,404.7,628.8,404.5,625.8,420.4M631.8,399.5C630.9,404.8,630.9,404.8,629.9,410.2M629.9,410.2C629,415.5,629.3,415.6,628.3,420.9M629.9,410.2C628,420.8,627.8,420.8,625.9,431.5M628.3,420.9C627.4,426.2,627.4,426.2,626.5,431.6M625.8,420.4C624.7,425.7,625.3,425.8,624.3,431.2M625.8,420.4C624.7,425.7,624.9,425.8,623.9,431.1M625.8,420.4C624.7,425.7,624.6,425.7,623.5,431M625.8,420.4C624.7,425.7,624.2,425.6,623.2,431M632,366.4C624.6,398,628,398.8,621.4,430.6M632,366.4C629.5,376.9,631.2,377.3,628.9,387.9M632,366.4C629.5,376.9,628.4,376.7,625.8,387.2M632,366.4C630.7,371.7,627.5,370.8,626.1,376.1M628.9,387.9C625.5,403.8,626.1,403.9,622.7,419.8M628.9,387.9C627.8,393.2,627.2,393.1,626,398.3M622.7,419.8C621.6,425.1,621.6,425.1,620.5,430.4M626,398.3C624.8,403.6,625.3,403.8,624.2,409M626,398.3C622.4,414.2,621.9,414.1,618.3,429.9M624.2,409C623,414.3,623.3,414.4,622.2,419.7M624.2,409C621.9,419.6,621.5,419.6,619.2,430.1M622.2,419.7C621,425,621,425,619.9,430.3M625.8,387.2C624.5,392.4,625.2,392.6,623.9,397.9M625.8,387.2C623.2,397.7,622.4,397.5,619.8,408M623.9,397.9C622.7,403.1,623.5,403.3,622.3,408.6M623.9,397.9C620.1,413.7,619.9,413.6,616.1,429.4M623.9,397.9C620.1,413.7,619.5,413.5,615.7,429.3M622.3,408.6C621,413.9,621.4,414,620.1,419.2M622.3,408.6C619.8,419.2,619.5,419.1,617,429.6M620.1,419.2C618.9,424.5,618.9,424.5,617.7,429.8M619.8,408C618.5,413.3,618.9,413.4,617.6,418.6M619.8,408C617.1,418.5,616.7,418.4,614.1,428.9M617.6,418.6C616.3,423.9,616.3,423.9,614.9,429.1M626.1,376.1C624.7,381.3,624.7,381.3,623.3,386.5M623.3,386.5C621.9,391.8,622.8,392,621.4,397.3M623.3,386.5C617.7,407.5,617.7,407.5,612.1,428.4M623.3,386.5C619.1,402.2,618.1,402,613.7,417.6M621.4,397.3C620.1,402.5,620.1,402.5,618.7,407.7M618.7,407.7C617.4,413,617.6,413.1,616.3,418.3M618.7,407.7C616,418.2,615.7,418.2,613,428.6M616.3,418.3C614.9,423.5,614.9,423.5,613.6,428.8M613.7,417.6C612.3,422.8,612.8,423,611.4,428.2M613.7,417.6C612.3,422.8,612.5,422.9,611,428.1M613.7,417.6C612.3,422.8,612.1,422.8,610.7,428M613.7,417.6C612.3,422.8,611.8,422.7,610.3,427.9M625.1,364.5C615.5,395.5,617.7,396.2,608.6,427.4M625.1,364.5C623.5,369.7,623.6,369.7,622,374.9M625.1,364.5C623.5,369.7,621.7,369.1,620,374.3M622,374.9C620.3,380,621,380.2,619.4,385.4M622,374.9C620.3,380,619.7,379.8,618.1,385M619.4,385.4C617.8,390.6,618.3,390.7,616.7,395.9M619.4,385.4C614.7,401,614.2,400.8,609.4,416.3M616.7,395.9C615.1,401.1,615.5,401.2,614,406.4M616.7,395.9C613.6,406.3,613.2,406.2,610,416.5M614,406.4C612.4,411.6,612.7,411.7,611.1,416.9M614,406.4C610.9,416.8,610.6,416.7,607.5,427.1M611.1,416.9C609.6,422.1,609.6,422.1,608.1,427.3M610,416.5C608.5,421.7,608.5,421.7,606.9,426.9M609.4,416.3C607.8,421.5,607.8,421.5,606.2,426.7M618.1,385C616.4,390.2,616.4,390.2,614.8,395.3M614.8,395.3C613.1,400.5,613.5,400.6,611.9,405.8M614.8,395.3C609.8,410.8,609.4,410.7,604.4,426.1M611.9,405.8C610.3,410.9,610.5,411,608.9,416.2M611.9,405.8C608.7,416.1,608.4,416,605.1,426.4M608.9,416.2C607.3,421.4,607.3,421.4,605.7,426.5M620,374.3C618.3,379.4,618.3,379.4,616.6,384.5M616.6,384.5C609.8,405.1,610.3,405.3,603.5,425.9M616.6,384.5C609.8,405.1,609.9,405.1,603.1,425.7M616.6,384.5C614.9,389.7,614.3,389.5,612.6,394.6M612.6,394.6C609.1,404.9,609.4,405,606,415.2M612.6,394.6C610.8,399.7,610.5,399.6,608.7,404.7M606,415.2C604.3,420.4,604.3,420.4,602.5,425.5M608.7,404.7C607,409.9,607.3,410,605.5,415.1M608.7,404.7C605.2,415,605,414.9,601.5,425.2M605.5,415.1C603.8,420.2,603.8,420.2,602,425.4M619.9,362.7C608.4,393.1,610.6,393.9,599.7,424.6M619.9,362.7C618,367.8,618,367.8,616.1,372.9M619.9,362.7C618,367.8,616.2,367.1,614.2,372.1M616.1,372.9C614.2,377.9,614.8,378.2,613,383.3M616.1,372.9C614.2,377.9,613.6,377.7,611.6,382.8M613,383.3C611.1,388.3,611.5,388.5,609.7,393.6M613,383.3C607.3,398.5,606.9,398.3,601.2,413.6M609.7,393.6C607.8,398.7,608.2,398.8,606.3,403.9M609.7,393.6C605.9,403.8,605.6,403.6,601.8,413.8M606.3,403.9C604.5,409,604.7,409.1,602.9,414.2M606.3,403.9C602.6,414.1,602.4,414,598.7,424.2M602.9,414.2C601.1,419.3,601.1,419.3,599.2,424.4M601.8,413.8C600,418.9,600,418.9,598.1,424M601.2,413.6C599.3,418.6,599.3,418.6,597.4,423.7M611.6,382.8C609.7,387.8,609.7,387.8,607.8,392.9M607.8,392.9C605.8,397.9,606.2,398.1,604.3,403.2M607.8,392.9C602,408.1,601.5,407.9,595.7,423M604.3,403.2C602.4,408.2,602.6,408.3,600.7,413.4M604.3,403.2C600.5,413.3,600.2,413.2,596.4,423.3M600.7,413.4C598.8,418.5,598.8,418.5,596.9,423.5M614.2,372.1C612.2,377.2,612.2,377.2,610.2,382.2M610.2,382.2C602.2,402.3,602.7,402.5,594.8,422.7M610.2,382.2C602.2,402.3,602.4,402.4,594.4,422.5M610.2,382.2C608.2,387.2,607.6,387,605.6,392M605.6,392C601.5,402.1,601.9,402.2,597.9,412.3M605.6,392C603.6,397,603.2,396.9,601.2,401.9M597.9,412.3C595.8,417.3,595.8,417.3,593.8,422.3M601.2,401.9C599.2,407,599.4,407.1,597.4,412.1M601.2,401.9C597.1,412,596.9,411.9,592.8,421.9M597.4,412.1C595.4,417.1,595.4,417.1,593.3,422.1M613.9,360.2C600.5,389.8,603.7,391.2,591.1,421.2M613.9,360.2C609.5,370.1,611.1,370.8,606.8,380.8M613.9,360.2C609.5,370.1,608.4,369.6,603.8,379.4M613.9,360.2C611.7,365.2,608.7,363.8,606.3,368.6M606.8,380.8C600.3,395.7,600.9,395.9,594.5,410.9M606.8,380.8C604.6,385.7,604,385.5,601.9,390.4M594.5,410.9C592.4,415.9,592.4,415.9,590.2,420.8M601.9,390.4C599.7,395.4,600.2,395.6,598,400.6M601.9,390.4C595.3,405.3,594.8,405.1,588.2,419.9M598,400.6C595.8,405.5,596.1,405.7,594,410.7M598,400.6C593.7,410.5,593.4,410.4,589,420.3M594,410.7C591.8,415.6,591.8,415.6,589.7,420.6M603.8,379.4C601.5,384.4,602.2,384.7,599.9,389.6M603.8,379.4C599.2,389.3,598.5,388.9,593.9,398.7M599.9,389.6C597.7,394.5,598.4,394.9,596.2,399.8M599.9,389.6C593.2,404.4,592.9,404.2,586.1,419M599.9,389.6C593.2,404.4,592.6,404.1,585.7,418.8M596.2,399.8C594,404.7,594.3,404.9,592.1,409.8M596.2,399.8C591.7,409.7,591.4,409.5,587,419.4M592.1,409.8C589.8,414.7,589.8,414.7,587.6,419.7M593.9,398.7C591.6,403.6,592,403.8,589.7,408.7M593.9,398.7C589.3,408.5,588.9,408.3,584.2,418.1M589.7,408.7C587.4,413.6,587.4,413.6,585,418.5M606.3,368.6C603.9,373.5,603.9,373.5,601.5,378.3M601.5,378.3C599.1,383.2,600,383.6,597.6,388.5M601.5,378.3C591.9,397.8,592,397.8,582.4,417.2M601.5,378.3C594.3,392.9,593.4,392.4,586.1,407M597.6,388.5C595.3,393.4,595.3,393.4,592.9,398.2M592.9,398.2C590.5,403.1,590.8,403.2,588.4,408.1M592.9,398.2C588.2,408,587.9,407.9,583.2,417.6M588.4,408.1C586.1,413,586.1,413,583.8,417.9M586.1,407C583.7,411.8,584.1,412,581.7,416.9M586.1,407C583.7,411.8,583.8,411.9,581.4,416.7M586.1,407C583.7,411.8,583.5,411.7,581.1,416.6M586.1,407C583.7,411.8,583.2,411.6,580.7,416.4M606.8,356.7C591.1,385.1,594.1,386.7,579.1,415.6M606.8,356.7C601.6,366.2,603.1,367,598,376.5M606.8,356.7C601.6,366.2,600.6,365.6,595.2,375M606.8,356.7C604.2,361.4,601.3,359.8,598.6,364.4M598,376.5C590.4,390.9,591,391.2,583.4,405.6M598,376.5C595.5,381.3,594.9,381,592.3,385.8M583.4,405.6C580.8,410.4,580.8,410.4,578.3,415.1M592.3,385.8C589.8,390.6,590.2,390.8,587.7,395.6M592.3,385.8C584.6,400.1,584.1,399.8,576.3,414.1M587.7,395.6C585.1,400.4,585.4,400.5,582.9,405.3M587.7,395.6C582.6,405.1,582.3,405,577.1,414.5M582.9,405.3C580.3,410.1,580.3,410.1,577.8,414.9M595.2,375C592.5,379.7,593.2,380.1,590.5,384.8M595.2,375C589.8,384.4,589.2,384,583.8,393.4M590.5,384.8C587.9,389.5,588.6,389.9,586,394.6M590.5,384.8C582.6,398.9,582.3,398.8,574.4,413M590.5,384.8C582.6,398.9,582,398.6,574,412.8M586,394.6C583.3,399.4,583.6,399.5,581,404.3M586,394.6C580.7,404.1,580.4,404,575.1,413.4M581,404.3C578.4,409,578.4,409,575.8,413.8M583.8,393.4C581,398.1,581.4,398.3,578.7,403M583.8,393.4C578.3,402.8,578,402.6,572.5,411.9M578.7,403C576,407.7,576,407.7,573.3,412.4M598.6,364.4C595.8,369.1,595.8,369.1,593,373.7M593,373.7C590.2,378.3,591,378.8,588.3,383.5M593,373.7C581.9,392.3,581.9,392.3,570.8,410.9M593,373.7C584.7,387.6,583.8,387.1,575.3,401M588.3,383.5C585.5,388.2,585.5,388.2,582.8,392.8M582.8,392.8C580.1,397.5,580.3,397.6,577.5,402.3M582.8,392.8C577.3,402.2,577.1,402,571.5,411.4M577.5,402.3C574.8,407,574.8,407,572.1,411.7M575.3,401C572.5,405.6,572.9,405.9,570.1,410.5M575.3,401C572.5,405.6,572.6,405.7,569.8,410.3M575.3,401C572.5,405.6,572.3,405.5,569.5,410.1M575.3,401C572.5,405.6,572,405.3,569.2,409.9M600.1,352.5C582,379.6,585,381.5,567.6,409M600.1,352.5C594.1,361.6,595.5,362.5,589.7,371.6M600.1,352.5C594.1,361.6,593.1,360.9,587,369.8M600.1,352.5C597.1,357.1,594.3,355.2,591.2,359.6M589.7,371.6C580.9,385.3,581.4,385.7,572.7,399.4M589.7,371.6C586.7,376.2,586.2,375.8,583.3,380.4M572.7,399.4C569.8,403.9,569.8,403.9,566.9,408.5M583.3,380.4C580.3,384.9,580.7,385.2,577.8,389.8M583.3,380.4C574.4,394,573.9,393.7,565,407.3M577.8,389.8C574.9,394.3,575.1,394.5,572.2,399M577.8,389.8C571.9,398.9,571.6,398.7,565.7,407.8M572.2,399C569.3,403.6,569.3,403.6,566.4,408.2M587,369.8C583.9,374.3,584.5,374.7,581.5,379.2M587,369.8C580.9,378.8,580.2,378.4,574.1,387.3M581.5,379.2C578.5,383.7,579.2,384.2,576.2,388.7M581.5,379.2C572.4,392.7,572.2,392.6,563.1,406M581.5,379.2C572.4,392.7,571.9,392.3,562.7,405.8M576.2,388.7C573.2,393.2,573.4,393.4,570.5,397.9M576.2,388.7C570.2,397.7,569.9,397.5,563.9,406.5M570.5,397.9C567.5,402.4,567.5,402.4,564.5,406.9M574.1,387.3C571,391.7,571.3,392,568.3,396.4M574.1,387.3C567.9,396.2,567.6,395.9,561.4,404.8M568.3,396.4C565.2,400.9,565.2,400.9,562.1,405.3M591.2,359.6C588,364,588,364,584.9,368.4M584.9,368.4C581.7,372.8,582.5,373.3,579.4,377.8M584.9,368.4C572.3,386,572.3,386,559.7,403.6M584.9,368.4C575.4,381.6,574.6,381,565,394.1M579.4,377.8C576.3,382.2,576.3,382.2,573.2,386.6M573.2,386.6C570,391.1,570.3,391.2,567.2,395.7M573.2,386.6C566.9,395.5,566.7,395.3,560.4,404.2M567.2,395.7C564.1,400.1,564.1,400.1,560.9,404.5M565,394.1C561.8,398.5,562.3,398.8,559.1,403.2M565,394.1C561.8,398.5,562,398.6,558.8,403M565,394.1C561.8,398.5,561.7,398.4,558.5,402.8M565,394.1C561.8,398.5,561.4,398.2,558.2,402.6M593.7,347.9C573.5,373.4,576.2,375.5,556.7,401.5M593.7,347.9C586.9,356.4,588.3,357.4,581.7,366M593.7,347.9C586.9,356.4,586,355.6,579.2,364.1M593.7,347.9C590.3,352.1,587.7,350,584.2,354.2M581.7,366C571.8,378.9,572.4,379.4,562.6,392.3M581.7,366C578.4,370.3,577.9,370,574.6,374.3M562.6,392.3C559.3,396.6,559.3,396.6,556,400.9M574.6,374.3C571.3,378.5,571.7,378.9,568.4,383.2M574.6,374.3C564.7,387.1,564.2,386.8,554.2,399.6M568.4,383.2C565.1,387.5,565.4,387.7,562.1,392M568.4,383.2C561.8,391.8,561.6,391.5,555,400.1M562.1,392C558.8,396.3,558.8,396.3,555.5,400.6M579.2,364.1C575.8,368.3,576.4,368.7,573,373M579.2,364.1C572.4,372.5,571.8,372,564.9,380.4M573,373C569.6,377.2,570.3,377.7,566.9,382M573,373C562.8,385.6,562.6,385.5,552.5,398.2M573,373C562.8,385.6,562.3,385.2,552.1,397.9M566.9,382C563.5,386.2,563.8,386.4,560.4,390.7M566.9,382C560.2,390.5,559.9,390.2,553.2,398.7M560.4,390.7C557.1,394.9,557.1,394.9,553.8,399.2M564.9,380.4C561.5,384.6,561.8,384.8,558.4,389M564.9,380.4C558.1,388.7,557.7,388.5,550.8,396.8M558.4,389C555,393.2,555,393.2,551.5,397.4M584.2,354.2C580.7,358.3,580.7,358.3,577.2,362.4M577.2,362.4C573.7,366.6,574.5,367.2,571,371.3M577.2,362.4C563.2,379,563.3,379,549.3,395.5M577.2,362.4C566.7,374.8,565.9,374.2,555.3,386.5M571,371.3C567.5,375.5,567.5,375.5,564.1,379.7M564.1,379.7C560.6,383.8,560.8,384,557.3,388.2M564.1,379.7C557.1,388,556.9,387.8,550,396.1M557.3,388.2C553.9,392.3,553.9,392.3,550.4,396.5M555.3,386.5C551.8,390.6,552.2,390.9,548.7,395.1M555.3,386.5C551.8,390.6,552,390.7,548.4,394.8M555.3,386.5C551.8,390.6,551.7,390.5,548.1,394.6M555.3,386.5C551.8,390.6,551.4,390.2,547.9,394.3M588.3,343.3C566.3,367.2,568,368.8,546.5,393.1M588.3,343.3C584.6,347.3,584.6,347.3,581,351.3M588.3,343.3C584.6,347.3,583.2,346,579.5,349.9M581,351.3C577.3,355.3,577.8,355.7,574.2,359.8M581,351.3C577.3,355.3,576.8,354.8,573.1,358.8M574.2,359.8C570.6,363.8,570.9,364.1,567.3,368.1M574.2,359.8C563.3,371.8,562.9,371.5,552,383.5M567.3,368.1C563.6,372.1,563.9,372.4,560.3,376.4M567.3,368.1C560,376.2,559.7,375.9,552.5,383.9M560.3,376.4C556.7,380.5,556.9,380.7,553.3,384.7M560.3,376.4C553.1,384.5,552.9,384.3,545.7,392.4M553.3,384.7C549.7,388.7,549.7,388.7,546.1,392.8M552.5,383.9C548.8,388,548.8,388,545.2,392M552,383.5C548.3,387.5,548.3,387.5,544.7,391.5M573.1,358.8C569.5,362.8,569.5,362.8,565.8,366.7M565.8,366.7C562.1,370.7,562.4,371,558.7,375M565.8,366.7C554.7,378.7,554.4,378.3,543.3,390.2M558.7,375C555.1,379,555.3,379.2,551.6,383.1M558.7,375C551.4,383,551.2,382.8,543.8,390.7M551.6,383.1C547.9,387.1,547.9,387.1,544.3,391.1M579.5,349.9C575.8,353.8,575.8,353.8,572,357.8M572,357.8C557.1,373.5,557.5,373.8,542.6,389.6M572,357.8C557.1,373.5,557.2,373.6,542.3,389.3M572,357.8C568.3,361.7,567.8,361.2,564.1,365.1M564.1,365.1C556.6,373,556.8,373.2,549.3,381M564.1,365.1C560.3,369,560.1,368.8,556.3,372.7M549.3,381C545.6,384.9,545.6,384.9,541.8,388.9M556.3,372.7C552.5,376.6,552.7,376.8,549,380.7M556.3,372.7C548.8,380.5,548.6,380.3,541,388.1M549,380.7C545.2,384.6,545.2,384.6,541.5,388.5M584.3,339.4C561,362.1,562.6,363.7,539.7,386.8M584.3,339.4C580.4,343.2,580.4,343.2,576.6,347M584.3,339.4C580.4,343.2,579.1,341.8,575.1,345.5M576.6,347C572.7,350.8,573.1,351.3,569.3,355.1M576.6,347C572.7,350.8,572.2,350.3,568.3,354M569.3,355.1C565.4,358.9,565.7,359.2,561.9,363M569.3,355.1C557.7,366.5,557.4,366.1,545.7,377.5M561.9,363C558.1,366.8,558.3,367.1,554.5,370.9M561.9,363C554.2,370.6,553.9,370.3,546.2,377.9M554.5,370.9C550.6,374.7,550.8,374.9,547,378.8M554.5,370.9C546.8,378.6,546.6,378.4,538.9,386M547,378.8C543.2,382.6,543.2,382.6,539.4,386.4M546.2,377.9C542.4,381.8,542.4,381.8,538.5,385.6M545.7,377.5C541.9,381.2,541.9,381.2,538,385M568.3,354C564.4,357.8,564.4,357.8,560.5,361.5M560.5,361.5C556.6,365.3,556.9,365.6,553,369.4M560.5,361.5C548.8,372.8,548.4,372.5,536.7,383.7M553,369.4C549.1,373.1,549.3,373.3,545.4,377.1M553,369.4C545.2,376.9,545,376.7,537.2,384.2M545.4,377.1C541.5,380.9,541.5,380.9,537.6,384.7M575.1,345.5C571.2,349.2,571.2,349.2,567.2,352.9M567.2,352.9C551.4,367.7,551.8,368.2,536.1,383M567.2,352.9C551.4,367.7,551.5,367.9,535.8,382.7M567.2,352.9C563.3,356.6,562.9,356.2,558.9,359.8M558.9,359.8C550.9,367.2,551.2,367.5,543.3,374.9M558.9,359.8C554.9,363.5,554.7,363.3,550.7,367M543.3,374.9C539.3,378.6,539.3,378.6,535.3,382.3M550.7,367C546.7,370.6,546.9,370.8,542.9,374.5M550.7,367C542.7,374.3,542.5,374.1,534.6,381.4M542.9,374.5C539,378.2,539,378.2,535,381.9M580,334.7C555.2,355.7,557.5,358.3,533.3,380.1M580,334.7C571.7,341.7,572.9,343,564.7,350.2M580,334.7C571.7,341.7,571,340.8,562.6,347.7M580,334.7C575.8,338.2,573.7,335.6,569.5,339M564.7,350.2C552.5,360.9,553,361.4,540.8,372.2M564.7,350.2C560.7,353.7,560.3,353.3,556.2,356.8M540.8,372.2C536.8,375.8,536.8,375.8,532.7,379.4M556.2,356.8C552.1,360.4,552.4,360.8,548.4,364.4M556.2,356.8C543.9,367.5,543.5,367.1,531.2,377.7M548.4,364.4C544.3,367.9,544.5,368.2,540.4,371.8M548.4,364.4C540.2,371.5,540,371.3,531.8,378.4M540.4,371.8C536.4,375.3,536.4,375.3,532.3,378.9M562.6,347.7C558.5,351.2,558.9,351.7,554.8,355.2M562.6,347.7C554.3,354.6,553.8,354.1,545.5,360.9M554.8,355.2C550.7,358.7,551.2,359.4,547.1,362.9M554.8,355.2C542.4,365.7,542.2,365.5,529.8,376M554.8,355.2C542.4,365.7,542,365.2,529.5,375.6M547.1,362.9C543,366.4,543.2,366.7,539.1,370.2M547.1,362.9C538.8,369.9,538.6,369.7,530.4,376.7M539.1,370.2C535,373.7,535,373.7,530.8,377.2M545.5,360.9C541.3,364.4,541.5,364.7,537.4,368.2M545.5,360.9C537.1,367.8,536.8,367.5,528.4,374.4M537.4,368.2C533.2,371.6,533.2,371.6,529,375.1M569.5,339C565.3,342.4,565.3,342.4,561,345.7M561,345.7C556.8,349.1,557.4,349.9,553.2,353.3M561,345.7C544.1,359.2,544.1,359.3,527.2,372.8M561,345.7C548.3,355.9,547.7,355,534.9,365.1M553.2,353.3C549,356.7,549,356.7,544.8,360.1M544.8,360.1C540.5,363.5,540.7,363.7,536.5,367.1M544.8,360.1C536.3,366.9,536.2,366.7,527.7,373.5M536.5,367.1C532.3,370.5,532.3,370.5,528.1,374M534.9,365.1C530.6,368.4,530.9,368.8,526.7,372.2M534.9,365.1C530.6,368.4,530.7,368.6,526.5,371.9M534.9,365.1C530.6,368.4,530.5,368.3,526.2,371.6M534.9,365.1C530.6,368.4,530.3,368,526,371.3M575.1,328.4C548.7,347.4,550.8,350.2,524.9,369.9M575.1,328.4C566.3,334.7,567.3,336.2,558.6,342.6M575.1,328.4C566.3,334.7,565.6,333.8,556.7,340M575.1,328.4C570.7,331.6,568.8,328.8,564.3,331.9M558.6,342.6C545.6,352.3,546,352.9,533,362.6M558.6,342.6C554.3,345.9,553.9,345.4,549.5,348.6M533,362.6C528.7,365.9,528.7,365.9,524.4,369.2M549.5,348.6C545.2,351.8,545.5,352.2,541.2,355.4M549.5,348.6C536.5,358.2,536.1,357.8,523,367.3M541.2,355.4C536.8,358.7,537,358.9,532.7,362.2M541.2,355.4C532.5,361.9,532.3,361.6,523.5,368.1M532.7,362.2C528.3,365.4,528.3,365.4,524,368.7M556.7,340C552.3,343.1,552.7,343.7,548.3,346.9M556.7,340C547.9,346.2,547.4,345.6,538.5,351.8M548.3,346.9C543.9,350,544.4,350.7,540,353.9M548.3,346.9C535.1,356.3,534.9,356.1,521.7,365.5M548.3,346.9C535.1,356.3,534.7,355.8,521.4,365.1M540,353.9C535.6,357,535.8,357.3,531.4,360.5M540,353.9C531.2,360.2,531,359.9,522.2,366.3M531.4,360.5C527,363.7,527,363.7,522.6,366.8M538.5,351.8C534.1,354.9,534.3,355.2,529.9,358.3M538.5,351.8C529.6,358,529.4,357.6,520.5,363.8M529.9,358.3C525.4,361.4,525.4,361.4,521,364.5M564.3,331.9C559.8,334.9,559.8,334.9,555.3,337.9M555.3,337.9C550.8,340.9,551.3,341.7,546.9,344.8M555.3,337.9C537.3,350,537.3,350,519.3,362.1M555.3,337.9C541.8,347,541.2,346.1,527.7,355.1M546.9,344.8C542.4,347.8,542.4,347.8,537.9,350.9M537.9,350.9C533.4,353.9,533.6,354.2,529.1,357.2M537.9,350.9C529,357,528.8,356.8,519.8,362.9M529.1,357.2C524.7,360.3,524.7,360.3,520.2,363.4M527.7,355.1C523.1,358,523.4,358.5,518.9,361.5M527.7,355.1C523.1,358,523.2,358.2,518.7,361.2M527.7,355.1C523.1,358,523,357.9,518.5,360.9M527.7,355.1C523.1,358,522.8,357.6,518.3,360.6M570.7,321.8C542.9,338.6,544.7,341.5,517.3,359M570.7,321.8C561.4,327.4,562.3,328.9,553.2,334.6M570.7,321.8C561.4,327.4,560.8,326.4,551.5,331.9M570.7,321.8C566.1,324.6,564.4,321.7,559.7,324.4M553.2,334.6C539.4,343.2,539.7,343.8,526,352.5M553.2,334.6C548.6,337.5,548.2,337,543.6,339.8M526,352.5C521.4,355.4,521.4,355.4,516.8,358.3M543.6,339.8C539,342.7,539.3,343.1,534.7,346M543.6,339.8C529.8,348.4,529.5,347.9,515.6,356.4M534.7,346C530.1,348.8,530.3,349.1,525.7,352M534.7,346C525.5,351.7,525.3,351.4,516.1,357.1M525.7,352C521.1,354.9,521.1,354.9,516.5,357.8M551.5,331.9C546.8,334.6,547.2,335.2,542.5,338M551.5,331.9C542.1,337.4,541.8,336.7,532.4,342.1M542.5,338C537.9,340.8,538.3,341.5,533.7,344.3M542.5,338C528.6,346.3,528.5,346.1,514.5,354.4M542.5,338C528.6,346.3,528.2,345.8,514.2,354M533.7,344.3C529,347.1,529.2,347.4,524.6,350.2M533.7,344.3C524.4,349.9,524.2,349.6,514.9,355.2M524.6,350.2C520,353,520,353,515.3,355.8M532.4,342.1C527.7,344.8,527.9,345.2,523.2,347.9M532.4,342.1C523,347.6,522.8,347.2,513.4,352.6M523.2,347.9C518.6,350.7,518.6,350.7,513.9,353.4M559.7,324.4C554.9,327,554.9,327,550.2,329.6M550.2,329.6C545.5,332.3,546,333.1,541.2,335.8M550.2,329.6C531.3,340.2,531.3,340.2,512.4,350.8M550.2,329.6C536,337.6,535.5,336.7,521.3,344.5M541.2,335.8C536.5,338.5,536.5,338.5,531.8,341.2M531.8,341.2C527.1,343.8,527.3,344.1,522.6,346.8M531.8,341.2C522.4,346.5,522.3,346.3,512.9,351.6M522.6,346.8C517.9,349.5,517.9,349.5,513.2,352.2M521.3,344.5C516.5,347.1,516.8,347.6,512.1,350.2M521.3,344.5C516.5,347.1,516.6,347.3,511.9,349.9M521.3,344.5C516.5,347.1,516.4,346.9,511.7,349.5M521.3,344.5C516.5,347.1,516.3,346.6,511.5,349.2M566.9,314.8C537.7,329.2,539.4,332.4,510.7,347.6M566.9,314.8C557.1,319.6,558,321.2,548.3,326.2M566.9,314.8C557.1,319.6,556.7,318.6,546.9,323.3M566.9,314.8C562,317.2,560.5,314,555.6,316.3M548.3,326.2C533.9,333.7,534.2,334.2,519.8,341.8M548.3,326.2C543.5,328.7,543.3,328.1,538.4,330.6M519.8,341.8C515,344.3,515,344.3,510.2,346.8M538.4,330.6C533.6,333.1,533.9,333.5,529,336M538.4,330.6C524,338,523.7,337.5,509.2,344.8M529,336C524.2,338.5,524.4,338.8,519.6,341.3M529,336C519.4,341,519.3,340.7,509.6,345.6M519.6,341.3C514.8,343.8,514.8,343.8,509.9,346.3M546.9,323.3C542,325.7,542.4,326.3,537.5,328.7M546.9,323.3C537.2,328,536.8,327.3,527,332M537.5,328.7C532.6,331.1,533,331.9,528.2,334.3M537.5,328.7C522.9,335.9,522.8,335.7,508.2,342.8M537.5,328.7C522.9,335.9,522.6,335.3,508,342.4M528.2,334.3C523.3,336.7,523.5,337,518.6,339.4M528.2,334.3C518.5,339.1,518.3,338.8,508.6,343.6M518.6,339.4C513.8,341.8,513.8,341.8,508.9,344.3M527,332C522.2,334.3,522.3,334.7,517.4,337M527,332C517.3,336.6,517.1,336.3,507.3,340.9M517.4,337C512.6,339.4,512.6,339.4,507.7,341.7M555.6,316.3C550.6,318.5,550.6,318.5,545.7,320.7M545.7,320.7C540.8,323,541.3,324.1,536.4,326.4M545.7,320.7C526,329.7,526.1,330,506.4,339M545.7,320.7C535.8,325.2,535.2,323.7,525.2,328.1M536.4,326.4C531.5,328.7,531.5,328.7,526.6,331M526.6,331C521.7,333.3,521.8,333.5,516.9,335.8M526.6,331C516.7,335.6,516.6,335.3,506.8,339.9M516.9,335.8C512,338.1,512,338.1,507.1,340.4M525.2,328.1C520.3,330.2,520.8,331.4,515.9,333.6M525.2,328.1C520.3,330.2,520.2,330.1,515.3,332.3M525.2,328.1C515.3,332.4,514.8,331.3,504.9,335.6M515.9,333.6C510.9,335.8,511.1,336.2,506.2,338.5M515.9,333.6C510.9,335.8,511,336,506,338.2M515.9,333.6C510.9,335.8,510.9,335.7,505.9,337.9M515.9,333.6C510.9,335.8,510.7,335.4,505.8,337.6M515.3,332.3C510.3,334.5,510.5,334.9,505.5,337.1M515.3,332.3C510.3,334.5,510.4,334.6,505.4,336.8M515.3,332.3C510.3,334.5,510.3,334.4,505.3,336.5M515.3,332.3C510.3,334.5,510.1,334.1,505.2,336.3M563.2,306.4C532.9,318.1,534.2,321.4,504.2,333.9M563.2,306.4C553.1,310.3,553.7,312,543.7,316.1M563.2,306.4C553.1,310.3,552.7,309.3,542.5,313.1M563.2,306.4C558.1,308.4,556.9,305.1,551.8,306.9M543.7,316.1C528.6,322.2,528.9,322.8,513.9,328.9M543.7,316.1C538.7,318.1,538.5,317.5,533.4,319.5M513.9,328.9C508.8,331,508.8,331,503.8,333.1M533.4,319.5C528.4,321.5,528.6,322,523.6,324.1M533.4,319.5C518.3,325.5,518.1,325,503,331M523.6,324.1C518.5,326.1,518.7,326.4,513.6,328.4M523.6,324.1C513.5,328.1,513.4,327.8,503.3,331.8M513.6,328.4C508.6,330.5,508.6,330.5,503.6,332.5M542.5,313.1C537.5,315,537.7,315.7,532.7,317.6M542.5,313.1C532.4,316.9,532.1,316.1,521.9,319.9M532.7,317.6C527.6,319.5,527.9,320.3,522.8,322.2M532.7,317.6C517.5,323.3,517.4,323.1,502.2,328.9M532.7,317.6C517.5,323.3,517.2,322.7,502,328.4M522.8,322.2C517.8,324.2,517.9,324.5,512.9,326.5M522.8,322.2C512.7,326.1,512.6,325.8,502.5,329.7M512.9,326.5C507.8,328.4,507.8,328.4,502.8,330.4M521.9,319.9C516.9,321.7,517,322.1,511.9,324M521.9,319.9C511.8,323.6,511.6,323.2,501.4,326.9M511.9,324C506.8,325.9,506.8,325.9,501.8,327.7M551.8,306.9C546.7,308.6,546.7,308.6,541.6,310.4M541.6,310.4C536.5,312.2,536.9,313.4,531.8,315.2M541.6,310.4C521.1,317.5,521.2,317.8,500.8,325M541.6,310.4C531.3,313.9,530.8,312.4,520.5,315.8M531.8,315.2C526.7,317,526.7,317,521.6,318.8M521.6,318.8C516.5,320.6,516.6,320.9,511.5,322.7M521.6,318.8C511.4,322.5,511.3,322.2,501.1,325.8M511.5,322.7C506.4,324.6,506.4,324.6,501.3,326.4M520.5,315.8C515.4,317.5,515.8,318.7,510.7,320.4M520.5,315.8C515.4,317.5,515.4,317.4,510.2,319.1M520.5,315.8C510.2,319.2,509.9,318,499.6,321.4M510.7,320.4C505.5,322.2,505.7,322.6,500.6,324.4M510.7,320.4C505.5,322.2,505.6,322.3,500.5,324.1M510.7,320.4C505.5,322.2,505.5,322.1,500.4,323.8M510.7,320.4C505.5,322.2,505.4,321.8,500.3,323.5M510.2,319.1C505.1,320.8,505.2,321.2,500.1,322.9M510.2,319.1C505.1,320.8,505.1,320.9,500,322.6M510.2,319.1C505.1,320.8,505,320.7,499.9,322.4M510.2,319.1C505.1,320.8,504.9,320.4,499.8,322.1M560.3,297.8C529,306.6,530,310,499,319.6M560.3,297.8C549.9,300.7,550.4,302.5,540,305.6M560.3,297.8C549.9,300.7,549.6,299.7,539.1,302.5M560.3,297.8C555.1,299.3,554.2,295.9,549,297.2M540,305.6C524.5,310.2,524.6,310.9,509.1,315.6M540,305.6C534.8,307.1,534.7,306.5,529.5,308.1M509.1,315.6C503.9,317.2,503.9,317.2,498.7,318.8M529.5,308.1C524.3,309.6,524.4,310.1,519.2,311.6M529.5,308.1C513.9,312.6,513.7,312.1,498.1,316.6M519.2,311.6C514,313.2,514.1,313.5,508.9,315.1M519.2,311.6C508.8,314.7,508.7,314.4,498.4,317.5M508.9,315.1C503.7,316.6,503.7,316.6,498.6,318.2M539.1,302.5C533.9,303.9,534.1,304.6,528.9,306M539.1,302.5C528.7,305.3,528.5,304.6,518,307.3M528.9,306C523.7,307.5,523.9,308.3,518.7,309.8M528.9,306C513.2,310.4,513.2,310.1,497.5,314.4M528.9,306C513.2,310.4,513,309.7,497.4,314M518.7,309.8C513.5,311.2,513.6,311.6,508.3,313M518.7,309.8C508.3,312.7,508.2,312.4,497.7,315.3M508.3,313C503.1,314.5,503.1,314.5,497.9,316M518,307.3C512.8,308.7,512.9,309.1,507.6,310.5M518,307.3C507.5,310.1,507.4,309.7,496.9,312.4M507.6,310.5C502.4,311.9,502.4,311.9,497.2,313.3M549,297.2C543.7,298.4,543.7,298.4,538.4,299.7M538.4,299.7C533.2,301,533.5,302.2,528.2,303.6M538.4,299.7C517.4,304.9,517.5,305.2,496.4,310.4M538.4,299.7C527.9,302.3,527.5,300.7,517,303.1M528.2,303.6C523,304.9,523,304.9,517.7,306.2M517.7,306.2C512.5,307.6,512.6,307.8,507.3,309.2M517.7,306.2C507.2,308.9,507.2,308.6,496.7,311.3M507.3,309.2C502.1,310.5,502.1,310.5,496.8,311.9M517,303.1C511.7,304.3,512,305.6,506.7,306.8M517,303.1C511.7,304.3,511.7,304.2,506.4,305.5M517,303.1C506.4,305.6,506.2,304.4,495.6,306.7M506.7,306.8C501.5,308.1,501.6,308.5,496.3,309.8M506.7,306.8C501.5,308.1,501.5,308.3,496.2,309.5M506.7,306.8C501.5,308.1,501.4,308,496.2,309.2M506.7,306.8C501.5,308.1,501.4,307.7,496.1,308.9M506.4,305.5C501.1,306.7,501.2,307.1,495.9,308.3M506.4,305.5C501.1,306.7,501.2,306.8,495.9,308M506.4,305.5C501.1,306.7,501.1,306.5,495.8,307.7M506.4,305.5C501.1,306.7,501,306.2,495.7,307.4M558.3,289C526.3,294.8,527,298.2,495.2,304.9M558.3,289C547.6,290.9,548,292.7,537.3,294.8M558.3,289C547.6,290.9,547.4,289.8,536.8,291.6M558.3,289C553,290,552.4,286.7,547.1,287.5M537.3,294.8C521.4,298,521.5,298.6,505.6,301.9M537.3,294.8C532,295.8,531.9,295.2,526.6,296.3M505.6,301.9C500.3,303,500.3,303,495,304M526.6,296.3C521.3,297.3,521.4,297.8,516.1,298.9M526.6,296.3C510.6,299.4,510.5,298.8,494.6,301.8M516.1,298.9C510.7,299.9,510.8,300.3,505.5,301.3M516.1,298.9C505.4,301,505.4,300.6,494.7,302.7M505.5,301.3C500.2,302.4,500.2,302.4,494.9,303.5M536.8,291.6C531.4,292.5,531.5,293.3,526.2,294.2M536.8,291.6C526.1,293.4,525.9,292.7,515.3,294.5M526.2,294.2C520.9,295.1,521,296,515.7,297M526.2,294.2C510.2,297,510.2,296.8,494.2,299.6M526.2,294.2C510.2,297,510.1,296.4,494.1,299.2M515.7,297C510.4,297.9,510.4,298.3,505.1,299.3M515.7,297C505,298.9,505,298.6,494.3,300.5M505.1,299.3C499.8,300.2,499.8,300.2,494.5,301.2M515.3,294.5C509.9,295.3,510,295.7,504.6,296.6M515.3,294.5C504.6,296.2,504.5,295.8,493.8,297.5M504.6,296.6C499.3,297.5,499.3,297.5,494,298.4M547.1,287.5C541.7,288.3,541.7,288.3,536.3,289.1M536.3,289.1C531,289.9,531.1,290.8,525.8,291.7M536.3,289.1C514.9,292.3,514.9,292.3,493.5,295.5M536.3,289.1C520.3,291.5,520.1,290.5,504,292.7M525.8,291.7C520.4,292.5,520.4,292.5,515.1,293.4M515.1,293.4C509.7,294.2,509.8,294.5,504.4,295.3M515.1,293.4C504.4,295,504.3,294.8,493.6,296.4M504.4,295.3C499.1,296.2,499.1,296.2,493.7,297M504,292.7C498.7,293.5,498.7,294,493.4,294.8M504,292.7C498.7,293.5,498.7,293.7,493.3,294.4M504,292.7C498.7,293.5,498.6,293.3,493.3,294.1M504,292.7C498.7,293.5,498.6,293,493.2,293.7M557.2,281.1C524.8,284.3,525.2,287.8,493,291.9M557.2,281.1C546.4,282.2,546.6,283.9,535.8,285.2M557.2,281.1C546.4,282.2,546.3,281,535.5,282M557.2,281.1C551.8,281.7,551.5,278.4,546.1,278.7M535.8,285.2C519.7,287.1,519.8,287.7,503.6,289.7M535.8,285.2C530.4,285.8,530.4,285.2,525,285.8M503.6,289.7C498.3,290.3,498.3,290.3,492.9,291M525,285.8C519.6,286.4,519.7,286.9,514.3,287.5M525,285.8C508.8,287.6,508.8,287,492.6,288.8M514.3,287.5C508.9,288.2,508.9,288.5,503.6,289.1M514.3,287.5C503.5,288.8,503.5,288.4,492.7,289.7M503.6,289.1C498.2,289.8,498.2,289.8,492.8,290.4M535.5,282C530.1,282.5,530.2,283.2,524.8,283.7M535.5,282C524.7,283,524.6,282.2,513.8,283.1M524.8,283.7C519.4,284.2,519.5,285.1,514.1,285.6M524.8,283.7C508.6,285.2,508.6,285,492.4,286.5M524.8,283.7C508.6,285.2,508.5,284.6,492.4,286.1M514.1,285.6C508.7,286.2,508.7,286.5,503.3,287M514.1,285.6C503.3,286.7,503.3,286.4,492.5,287.4M503.3,287C497.9,287.6,497.9,287.6,492.6,288.1M513.8,283.1C508.4,283.5,508.5,283.9,503.1,284.4M513.8,283.1C503.1,284,503,283.6,492.2,284.4M503.1,284.4C497.7,284.9,497.7,284.9,492.3,285.3M546.1,278.7C540.7,279.1,540.7,279.1,535.3,279.4M535.3,279.4C529.9,279.8,530,280.8,524.6,281.2M535.3,279.4C513.7,280.9,513.7,280.9,492.1,282.4M535.3,279.4C519.1,280.5,519,279.5,502.8,280.5M524.6,281.2C519.2,281.6,519.2,281.6,513.8,282M513.8,282C508.4,282.4,508.4,282.6,503,283.1M513.8,282C503,282.8,502.9,282.5,492.1,283.3M503,283.1C497.6,283.5,497.6,283.5,492.2,283.9M502.8,280.5C497.4,280.8,497.4,281.3,492,281.6M502.8,280.5C497.4,280.8,497.4,281,492,281.3M502.8,280.5C497.4,280.8,497.4,280.6,492,280.9M502.8,280.5C497.4,280.8,497.4,280.2,492,280.5M556.7,273.2C524.2,273.8,524.3,277.3,491.9,278.7M556.7,273.2C545.9,273.4,545.9,275.2,535.1,275.5M556.7,273.2C545.9,273.4,545.9,272.2,535,272.3M556.7,273.2C551.3,273.3,551.3,270,545.9,269.9M535.1,275.5C518.9,276.1,518.9,276.7,502.6,277.4M535.1,275.5C529.7,275.7,529.7,275.1,524.3,275.2M502.6,277.4C497.2,277.6,497.2,277.6,491.8,277.8M524.3,275.2C518.8,275.4,518.9,275.9,513.4,276.1M524.3,275.2C508,275.7,508,275.1,491.8,275.6M513.4,276.1C508,276.3,508,276.6,502.6,276.8M513.4,276.1C502.6,276.5,502.6,276.1,491.8,276.5M502.6,276.8C497.2,277,497.2,277,491.8,277.2M535,272.3C529.6,272.3,529.6,273.1,524.2,273.2M535,272.3C524.2,272.4,524.2,271.6,513.4,271.6M524.2,273.2C518.8,273.2,518.8,274.1,513.4,274.2M524.2,273.2C508,273.4,508,273.1,491.7,273.3M524.2,273.2C508,273.4,508,272.7,491.7,272.8M513.4,274.2C508,274.3,508,274.6,502.6,274.7M513.4,274.2C502.6,274.4,502.6,274,491.7,274.2M502.6,274.7C497.2,274.8,497.2,274.8,491.7,274.9M513.4,271.6C508,271.6,508,272,502.5,272.1M513.4,271.6C502.5,271.6,502.5,271.2,491.7,271.2M502.5,272.1C497.1,272.1,497.1,272.1,491.7,272.1M545.9,269.9C540.5,269.8,540.5,269.8,535,269.8M535,269.8C529.6,269.7,529.6,270.6,524.2,270.6M535,269.8C513.4,269.4,513.4,269.5,491.7,269.2M535,269.8C518.8,269.5,518.8,268.5,502.6,268.1M524.2,270.6C518.8,270.6,518.8,270.6,513.4,270.5M513.4,270.5C508,270.5,508,270.8,502.5,270.7M513.4,270.5C502.5,270.4,502.5,270.2,491.7,270.1M502.5,270.7C497.1,270.7,497.1,270.7,491.7,270.7M502.6,268.1C497.2,268,497.1,268.5,491.7,268.4M502.6,268.1C497.2,268,497.2,268.2,491.7,268.1M502.6,268.1C497.2,268,497.2,267.8,491.7,267.7M502.6,268.1C497.2,268,497.2,267.5,491.8,267.3M556.9,265.3C524.5,263.2,524.3,266.7,491.8,265.5M556.9,265.3C546.1,264.6,546,266.3,535.2,265.8M556.9,265.3C546.1,264.6,546.2,263.4,535.4,262.6M556.9,265.3C551.5,264.9,551.8,261.6,546.4,261.1M535.2,265.8C518.9,265.1,518.9,265.7,502.7,265M535.2,265.8C529.8,265.6,529.8,264.9,524.4,264.7M502.7,265C497.3,264.8,497.3,264.8,491.8,264.6M524.4,264.7C519,264.4,518.9,264.9,513.5,264.7M524.4,264.7C508.1,263.8,508.2,263.2,492,262.3M513.5,264.7C508.1,264.4,508.1,264.7,502.7,264.5M513.5,264.7C502.7,264.1,502.7,263.8,491.9,263.2M502.7,264.5C497.3,264.2,497.3,264.2,491.9,264M535.4,262.6C530,262.2,529.9,262.9,524.5,262.6M535.4,262.6C524.6,261.8,524.6,261,513.8,260.2M524.5,262.6C519.1,262.2,519,263,513.6,262.7M524.5,262.6C508.3,261.5,508.3,261.2,492.1,260.1M524.5,262.6C508.3,261.5,508.3,260.8,492.1,259.6M513.6,262.7C508.2,262.4,508.2,262.7,502.8,262.4M513.6,262.7C502.8,262,502.8,261.7,492,261M502.8,262.4C497.4,262,497.4,262,492,261.7M513.8,260.2C508.4,259.7,508.4,260.2,503,259.7M513.8,260.2C503,259.3,503.1,258.9,492.3,258M503,259.7C497.6,259.3,497.6,259.3,492.2,258.9M546.4,261.1C541,260.6,541,260.6,535.6,260.1M535.6,260.1C530.2,259.5,530.1,260.5,524.7,260M535.6,260.1C514,258,514,258,492.4,255.9M535.6,260.1C519.4,258.5,519.5,257.5,503.3,255.8M524.7,260C519.3,259.5,519.3,259.5,513.9,259.1M513.9,259.1C508.5,258.6,508.5,258.9,503.1,258.4M513.9,259.1C503.1,258.1,503.1,257.8,492.4,256.9M503.1,258.4C497.7,257.9,497.7,257.9,492.3,257.5M503.3,255.8C498,255.2,497.9,255.8,492.5,255.2M503.3,255.8C498,255.2,497.9,255.4,492.5,254.9M503.3,255.8C498,255.2,498,255.1,492.6,254.5M503.3,255.8C498,255.2,498,254.7,492.6,254.1M557.7,257.4C525.6,252.7,525.1,256.1,492.8,252.3M557.7,257.4C547,255.8,546.8,257.6,536,256.2M557.7,257.4C547,255.8,547.2,254.7,536.5,253M557.7,257.4C552.4,256.6,552.9,253.3,547.6,252.4M536,256.2C519.9,254.1,519.8,254.7,503.7,252.7M536,256.2C530.6,255.5,530.7,254.9,525.4,254.1M503.7,252.7C498.3,252.1,498.3,252.1,492.9,251.4M525.4,254.1C520,253.4,519.9,253.9,514.5,253.2M525.4,254.1C509.3,252,509.3,251.4,493.2,249.2M514.5,253.2C509.2,252.5,509.1,252.9,503.8,252.2M514.5,253.2C503.8,251.8,503.9,251.5,493.1,250.1M503.8,252.2C498.4,251.5,498.4,251.5,493,250.8M536.5,253C531.1,252.1,531,252.9,525.7,252.1M536.5,253C525.8,251.3,525.9,250.5,515.2,248.8M525.7,252.1C520.3,251.2,520.2,252.1,514.8,251.3M525.7,252.1C509.6,249.6,509.6,249.4,493.6,246.9M525.7,252.1C509.6,249.6,509.7,249,493.6,246.5M514.8,251.3C509.5,250.5,509.4,250.9,504,250.1M514.8,251.3C504.1,249.8,504.1,249.4,493.4,247.8M504,250.1C498.7,249.3,498.7,249.3,493.3,248.6M515.2,248.8C509.9,247.9,509.8,248.3,504.4,247.5M515.2,248.8C504.5,247.1,504.6,246.6,493.9,244.9M504.4,247.5C499.1,246.6,499.1,246.6,493.7,245.8M547.6,252.4C542.2,251.4,542.2,251.4,536.9,250.5M536.9,250.5C531.6,249.5,531.4,250.4,526.1,249.5M536.9,250.5C515.6,246.6,515.6,246.7,494.2,242.8M536.9,250.5C520.9,247.6,521.1,246.6,505.1,243.6M526.1,249.5C520.7,248.6,520.7,248.6,515.4,247.7M515.4,247.7C510,246.8,510,247.1,504.7,246.2M515.4,247.7C504.7,245.9,504.8,245.6,494.1,243.7M504.7,246.2C499.3,245.2,499.3,245.2,494,244.3M505.1,243.6C499.8,242.6,499.7,243.1,494.4,242.1M505.1,243.6C499.8,242.6,499.8,242.8,494.4,241.8M505.1,243.6C499.8,242.6,499.8,242.4,494.5,241.4M505.1,243.6C499.8,242.6,499.9,242.1,494.6,241M559.2,249.6C527.5,242.3,526.8,245.7,494.9,239.3M559.2,249.6C548.6,247.1,548.2,248.9,537.7,246.6M559.2,249.6C548.6,247.1,548.9,246,538.4,243.5M559.2,249.6C553.9,248.4,554.7,245.1,549.5,243.8M537.7,246.6C521.8,243.2,521.6,243.9,505.7,240.6M537.7,246.6C532.4,245.5,532.5,244.9,527.2,243.7M505.7,240.6C500.4,239.5,500.4,239.5,495.1,238.4M527.2,243.7C521.9,242.6,521.8,243.1,516.5,241.9M527.2,243.7C511.3,240.2,511.4,239.7,495.6,236.2M516.5,241.9C511.2,240.8,511.1,241.1,505.8,240M516.5,241.9C505.9,239.7,506,239.3,495.4,237M505.8,240C500.5,238.9,500.5,238.9,495.2,237.8M538.4,243.5C533.1,242.2,532.9,242.9,527.7,241.7M538.4,243.5C527.8,240.9,528,240.2,517.5,237.6M527.7,241.7C522.4,240.4,522.2,241.2,516.9,240M527.7,241.7C511.8,237.9,511.9,237.7,496.1,234M527.7,241.7C511.8,237.9,512,237.3,496.2,233.5M516.9,240C511.6,238.8,511.6,239.1,506.3,237.9M516.9,240C506.4,237.6,506.4,237.3,495.9,234.8M506.3,237.9C501,236.8,501,236.8,495.7,235.6M517.5,237.6C512.2,236.3,512.1,236.7,506.9,235.4M517.5,237.6C507,235,507.1,234.5,496.6,231.9M506.9,235.4C501.6,234.1,501.6,234.1,496.4,232.8M549.5,243.8C544.2,242.4,544.2,242.4,539,241M539,241C533.8,239.6,533.5,240.5,528.3,239.2M539,241C518,235.4,518,235.5,497.1,229.9M539,241C523.3,236.8,523.6,235.8,507.9,231.5M528.3,239.2C523,237.8,523,237.8,517.8,236.5M517.8,236.5C512.5,235.1,512.5,235.4,507.2,234.1M517.8,236.5C507.3,233.8,507.4,233.5,496.9,230.8M507.2,234.1C502,232.7,502,232.7,496.7,231.4M507.9,231.5C502.7,230.1,502.5,230.6,497.3,229.2M507.9,231.5C502.7,230.1,502.6,230.3,497.4,228.9M507.9,231.5C502.7,230.1,502.7,229.9,497.5,228.5M507.9,231.5C502.7,230.1,502.8,229.6,497.6,228.2M572.1,243.8C536.1,231.7,534.5,236.9,498.1,226.4M572.1,243.8C551.5,236.9,550.4,240.6,529.6,234.4M572.1,243.8C561.8,240.3,561.4,241.4,551.1,238.1M572.1,243.8C566.9,242,568,239.1,562.9,237.2M572.1,243.8C566.9,242,568.8,237,563.8,235M529.6,234.4C519.2,231.3,519.1,231.7,508.7,228.6M529.6,234.4C524.4,232.9,524.5,232.6,519.3,231M508.7,228.6C503.5,227.1,503.5,227.1,498.3,225.5M519.3,231C514.1,229.5,514.1,229.5,508.9,227.9M508.9,227.9C503.7,226.4,503.7,226.4,498.5,224.8M551.1,238.1C546,236.4,545.6,237.6,540.4,235.9M551.1,238.1C546,236.4,546.4,235.3,541.2,233.5M540.4,235.9C535.3,234.3,535.1,234.8,530,233.2M540.4,235.9C524.9,231.1,525.1,230.6,509.6,225.7M530,233.2C524.8,231.6,524.7,231.9,519.5,230.4M530,233.2C519.6,230,519.7,229.6,509.4,226.4M519.5,230.4C514.3,228.8,514.2,229,509.1,227.5M519.5,230.4C509.1,227.2,509.2,226.9,498.9,223.7M509.1,227.5C503.9,225.9,503.9,225.9,498.7,224.3M509.4,226.4C504.2,224.8,504.2,224.8,499,223.2M509.6,225.7C504.4,224.1,504.4,224.1,499.3,222.5M541.2,233.5C520.7,226.6,520.2,228.2,499.5,221.6M541.2,233.5C536.1,231.8,535.8,232.7,530.7,231M541.2,233.5C536.1,231.8,536.2,231.5,531.1,229.7M541.2,233.5C536.1,231.8,536.8,229.9,531.6,228.1M530.7,231C525.5,229.3,525.5,229.3,520.4,227.6M520.4,227.6C515.2,225.9,515.1,226.1,510,224.5M520.4,227.6C515.2,225.9,515.3,225.7,510.2,224M510,224.5C504.8,222.8,504.8,222.8,499.7,221.1M510.2,224C505,222.3,505,222.3,499.9,220.6M531.1,229.7C525.9,228,525.8,228.4,520.7,226.7M531.1,229.7C515.7,224.5,515.8,224.1,500.5,218.8M520.7,226.7C515.5,225,515.4,225.2,510.3,223.5M520.7,226.7C510.4,223.3,510.5,223,500.2,219.5M510.3,223.5C505.2,221.8,505.2,221.8,500,220.1M531.6,228.1C521.4,224.5,521.1,225.3,510.9,221.8M531.6,228.1C526.5,226.3,526.5,226.3,521.4,224.5M531.6,228.1C516.3,222.7,516.7,221.7,501.4,216.2M510.9,221.8C505.8,220,505.8,220,500.7,218.3M521.4,224.5C516.3,222.7,516.2,223.1,511,221.3M521.4,224.5C511.2,220.9,511.2,220.8,501,217.2M521.4,224.5C511.2,220.9,511.3,220.5,501.1,216.9M511,221.3C505.9,219.6,505.9,219.6,500.8,217.8M562.9,237.2C557.8,235.3,557.8,235.3,552.8,233.4M552.8,233.4C527.4,223.9,527.1,224.7,501.7,215.4M552.8,233.4C527.4,223.9,527.2,224.3,501.8,214.9M552.8,233.4C547.7,231.5,548.1,230.5,543,228.6M543,228.6C538,226.6,537.7,227.3,532.6,225.4M543,228.6C522.8,220.8,522.9,220.6,502.7,212.8M543,228.6C522.8,220.8,523,220.3,502.8,212.4M532.6,225.4C527.6,223.4,527.4,223.8,522.4,221.9M532.6,225.4C517.4,219.6,517.6,219.2,502.4,213.4M522.4,221.9C517.3,220,517.2,220.2,512.2,218.3M522.4,221.9C512.2,218.1,512.3,217.8,502.2,214M512.2,218.3C507.1,216.4,507.1,216.4,502,214.5M563.8,235C558.8,232.9,558.8,232.9,553.7,230.9M553.7,230.9C528.6,220.8,528.3,221.5,503.1,211.6M553.7,230.9C528.6,220.8,528.5,221.2,503.3,211.1M553.7,230.9C548.7,228.9,549.1,227.9,544.1,225.8M544.1,225.8C539.1,223.8,538.8,224.4,533.8,222.3M544.1,225.8C524.1,217.5,524.2,217.3,504.2,209M544.1,225.8C524.1,217.5,524.3,217,504.3,208.7M533.8,222.3C528.8,220.3,528.7,220.6,523.7,218.6M533.8,222.3C518.8,216.2,518.9,215.8,503.9,209.7M523.7,218.6C518.6,216.6,518.5,216.8,513.5,214.8M523.7,218.6C513.6,214.5,513.7,214.3,503.7,210.2M513.5,214.8C508.5,212.7,508.5,212.7,503.5,210.7M644.4,266.7C576.1,233.8,574.6,237.1,505,207M644.4,266.7C595.6,243.2,594.8,245,545.3,223M644.4,266.7C595.6,243.2,595.5,243.4,546.7,220.1M644.4,266.7C639.6,264.4,640.1,263.3,635.4,260.6M545.3,223C530.5,216.4,530.2,217,515.3,210.5M545.3,223C540.4,220.8,540.6,220.2,535.7,218M515.3,210.5C510.4,208.3,510.4,208.3,505.4,206.1M535.7,218C530.8,215.8,530.5,216.3,525.6,214.1M535.7,218C520.9,211.3,521.1,210.8,506.3,204.1M525.6,214.1C520.6,211.9,520.5,212.2,515.6,210M525.6,214.1C515.7,209.7,515.8,209.3,505.9,204.9M515.6,210C510.6,207.8,510.6,207.8,505.7,205.6M546.7,220.1C541.8,217.8,541.5,218.4,536.6,216.1M546.7,220.1C536.9,215.4,537.2,214.7,527.5,210M536.6,216.1C531.7,213.8,531.3,214.6,526.4,212.3M536.6,216.1C521.9,209.2,522,209,507.3,202M536.6,216.1C521.9,209.2,522.1,208.6,507.5,201.6M526.4,212.3C521.5,210,521.3,210.3,516.4,208M526.4,212.3C516.6,207.7,516.7,207.4,506.9,202.9M516.4,208C511.5,205.8,511.5,205.8,506.6,203.5M527.5,210C522.6,207.6,522.4,208,517.5,205.7M527.5,210C517.7,205.3,517.9,204.9,508.2,200.1M517.5,205.7C512.7,203.3,512.7,203.3,507.8,201M635.4,260.6C630.7,257.9,630.7,257.9,626,255.2M626,255.2C583.8,230.9,581.4,235.4,537.7,213.8M626,255.2C569.7,222.8,567.1,227.6,509.1,198.3M626,255.2C621.3,252.5,623.8,248.7,619.5,245.5M537.7,213.8C532.8,211.4,532.8,211.4,528,209M528,209C523.1,206.6,523,206.8,518.1,204.5M528,209C518.3,204.2,518.4,203.9,508.7,199.1M518.1,204.5C513.3,202.1,513.3,202.1,508.4,199.7M619.5,245.5C571.8,209.8,562.5,224.7,509.4,197.6M619.5,245.5C571.8,209.8,562.6,224.5,509.6,197.3M619.5,245.5C571.8,209.8,562.7,224.3,509.8,197M619.5,245.5C571.8,209.8,562.8,224.1,509.9,196.7M619.5,245.5C571.8,209.8,562.9,223.9,510.1,196.3M619.5,245.5C576.1,213.1,568,225.8,520.2,200.5M619.5,245.5C615.2,242.3,619,237.7,615.1,233.9M619.5,245.5C593.5,226,649.2,195.8,647.1,163.4M520.2,200.5C515.4,197.9,515.2,198.3,510.4,195.8M520.2,200.5C515.4,197.9,515.3,198.1,510.5,195.5M520.2,200.5C515.4,197.9,515.4,197.8,510.7,195.3M520.2,200.5C515.4,197.9,515.6,197.5,510.8,195M615.1,233.9C576.1,196.4,558.8,220.1,511.1,194.5M615.1,233.9C576.1,196.4,558.9,219.9,511.2,194.2M615.1,233.9C576.1,196.4,559,219.8,511.4,193.9M615.1,233.9C576.1,196.4,559.1,219.6,511.5,193.7M615.1,233.9C576.1,196.4,559.2,219.4,511.7,193.4M615.1,233.9C576.1,196.4,559.3,219.2,511.8,193.1M615.1,233.9C576.1,196.4,559.4,219.1,512,192.9M615.1,233.9C576.1,196.4,559.5,218.9,512.1,192.6M615.1,233.9C576.1,196.4,559.6,218.7,512.3,192.3M615.1,233.9C576.1,196.4,559.7,218.5,512.4,192.1M615.1,233.9C576.1,196.4,559.8,218.3,512.6,191.8M615.1,233.9C576.1,196.4,559.9,218.2,512.7,191.5M615.1,233.9C576.1,196.4,560,218,512.9,191.3M615.1,233.9C576.1,196.4,560.1,217.8,513,191M615.1,233.9C576.1,196.4,560.2,217.6,513.2,190.7M615.1,233.9C576.1,196.4,560.3,217.5,513.3,190.5M615.1,233.9C576.1,196.4,560.4,217.3,513.5,190.2M615.1,233.9C576.1,196.4,560.5,217.1,513.6,189.9M615.1,233.9C576.1,196.4,560.6,216.9,513.8,189.7M615.1,233.9C576.1,196.4,560.7,216.8,513.9,189.4M615.1,233.9C576.1,196.4,560.8,216.6,514.1,189.2M615.1,233.9C576.1,196.4,560.9,216.4,514.2,188.9M615.1,233.9C576.1,196.4,561,216.2,514.4,188.6M615.1,233.9C576.1,196.4,561.1,216.1,514.5,188.4M615.1,233.9C576.1,196.4,561.2,215.9,514.7,188.1M615.1,233.9C576.1,196.4,561.3,215.7,514.9,187.8M615.1,233.9C576.1,196.4,561.4,215.5,515,187.6M615.1,233.9C576.1,196.4,561.5,215.4,515.2,187.3M615.1,233.9C576.1,196.4,561.6,215.2,515.3,187.1M615.1,233.9C576.1,196.4,561.7,215,515.5,186.8M615.1,233.9C576.1,196.4,561.8,214.8,515.6,186.5M615.1,233.9C576.1,196.4,561.9,214.7,515.8,186.3M615.1,233.9C576.1,196.4,562,214.5,516,186M615.1,233.9C576.1,196.4,562.2,214.3,516.1,185.8M615.1,233.9C576.1,196.4,562.3,214.2,516.3,185.5M615.1,233.9C576.1,196.4,562.4,214,516.5,185.2M615.1,233.9C599.5,218.9,590.2,230.8,571.9,219.2M615.1,233.9C599.5,218.9,591.2,229.3,573.1,217.3M615.1,233.9C603.4,222.7,596.6,230.9,583.3,221.6M615.1,233.9C603.4,222.7,597.6,229.5,584.6,219.8M615.1,233.9C603.4,222.7,598.7,228.1,585.9,218.1M615.1,233.9C603.4,222.7,599.8,226.7,587.3,216.4M615.1,233.9C603.4,222.7,601,225.4,588.7,214.7M615.1,233.9C603.4,222.7,602.1,224,590.1,213.1M615.1,233.9C603.4,222.7,603.3,222.7,591.6,211.5M615.1,233.9C603.4,222.7,604.6,221.5,593.1,209.9M615.1,233.9C603.4,222.7,605.9,220.2,594.7,208.4M615.1,233.9C603.4,222.7,607.2,219,596.3,206.9M615.1,233.9C603.4,222.7,608.5,217.9,598,205.5M615.1,233.9C603.4,222.7,609.9,216.7,599.6,204.1M615.1,233.9C599.5,218.9,608,211.4,594.7,194.2M615.1,233.9C599.5,218.9,609.4,210.3,596.6,192.8M615.1,233.9C599.5,218.9,610.8,209.2,598.4,191.5M615.1,233.9C599.5,218.9,612.3,208.2,600.3,190.2M615.1,233.9C599.5,218.9,613.8,207.3,602.3,188.9M615.1,233.9C599.5,218.9,615.3,206.3,604.2,187.7M615.1,233.9C603.4,222.7,619.5,210.2,611.5,196M615.1,233.9C603.4,222.7,621.1,209.3,613.4,195M615.1,233.9C603.4,222.7,622.7,208.5,615.4,194M615.1,233.9C603.4,222.7,624.3,207.7,617.3,193M615.1,233.9C603.4,222.7,625.9,207,619.3,192.1M615.1,233.9C603.4,222.7,627.5,206.3,621.3,191.3M615.1,233.9C603.4,222.7,629.1,205.6,623.4,190.5M615.1,233.9C607.3,226.4,632.6,210.1,629,199.9M615.1,233.9C607.3,226.4,634.5,209.5,631.2,199.2M615.1,233.9C607.3,226.4,636.3,208.9,633.4,198.5M615.1,233.9C611.2,230.2,639.6,213.7,638.2,208.4M615.1,233.9C611.2,230.2,641.4,213.2,640.3,208M615.1,233.9C611.2,230.2,643.3,212.9,642.3,207.5M615.1,233.9C611.2,230.2,645.2,212.5,644.4,207.2M615.1,233.9C599.5,218.9,645.2,196.2,642.6,174.6M615.1,233.9C599.5,218.9,646.9,196,644.9,174.4M571.9,219.2C544.5,201.8,544.2,202.1,516.7,184.8M571.9,219.2C567.3,216.3,567.5,216,563,213.1M563,213.1C540.1,198.5,539.8,198.9,517,184.4M563,213.1C540.1,198.5,539.9,198.8,517.1,184.2M563,213.1C540.1,198.5,540,198.6,517.2,184M563,213.1C540.1,198.5,540.2,198.4,517.3,183.8M563,213.1C540.1,198.5,540.3,198.3,517.5,183.6M563,213.1C558.4,210.1,558.8,209.5,554.2,206.6M554.2,206.6C536.1,194.8,535.9,195.1,517.7,183.3M554.2,206.6C549.7,203.6,549.8,203.4,545.3,200.4M545.3,200.4C531.7,191.6,531.5,191.8,517.9,183M545.3,200.4C531.7,191.6,531.6,191.7,518,182.8M545.3,200.4C531.7,191.6,531.7,191.6,518.1,182.7M545.3,200.4C540.8,197.5,541,197.1,536.5,194.1M536.5,194.1C527.4,188.2,527.3,188.3,518.3,182.4M536.5,194.1C532,191.2,532,191,527.5,188M527.5,188C523,185.1,523,185.1,518.4,182.2M527.5,188C523,185.1,523,185,518.5,182M573.1,217.3C546.1,199.2,545.9,199.6,518.8,181.6M573.1,217.3C568.6,214.2,568.8,214,564.4,210.9M564.4,210.9C541.9,195.8,541.6,196.3,519.1,181.2M564.4,210.9C541.9,195.8,541.7,196.1,519.2,181M564.4,210.9C541.9,195.8,541.8,195.9,519.3,180.8M564.4,210.9C541.9,195.8,541.9,195.8,519.4,180.6M564.4,210.9C541.9,195.8,542,195.6,519.6,180.5M564.4,210.9C559.9,207.9,560.3,207.3,555.8,204.3M555.8,204.3C537.9,192,537.7,192.3,519.8,180.1M555.8,204.3C551.3,201.2,551.5,201,547,197.9M547,197.9C533.6,188.7,533.4,189,520,179.8M547,197.9C533.6,188.7,533.5,188.8,520.1,179.7M547,197.9C533.6,188.7,533.6,188.7,520.2,179.5M547,197.9C542.5,194.8,542.8,194.5,538.3,191.4M538.3,191.4C529.4,185.2,529.3,185.4,520.4,179.2M538.3,191.4C533.9,188.3,534,188.2,529.5,185.1M529.5,185.1C525.1,182,525,182.1,520.6,179M529.5,185.1C525.1,182,525.1,181.9,520.7,178.9M583.3,221.6C552.3,199.8,552,200.1,521,178.4M583.3,221.6C578.9,218.5,579.1,218.2,574.6,215.1M574.6,215.1C548.1,196.3,547.8,196.7,521.2,178.1M574.6,215.1C548.1,196.3,547.9,196.6,521.3,177.9M574.6,215.1C548.1,196.3,548,196.4,521.5,177.7M574.6,215.1C548.1,196.3,548.1,196.3,521.6,177.5M574.6,215.1C548.1,196.3,548.2,196.1,521.7,177.3M574.6,215.1C570.2,212,570.6,211.4,566.2,208.3M566.2,208.3C544.2,192.5,544,192.7,522,177M566.2,208.3C561.8,205.1,561.9,204.9,557.6,201.7M557.6,201.7C540,189.1,539.8,189.3,522.2,176.7M557.6,201.7C540,189.1,539.9,189.2,522.3,176.5M557.6,201.7C540,189.1,540,189.1,522.4,176.4M557.6,201.7C553.2,198.6,553.4,198.2,549,195M549,195C535.9,185.5,535.8,185.7,522.6,176.1M549,195C544.7,191.8,544.8,191.7,540.4,188.5M540.4,188.5C531.6,182.1,531.5,182.2,522.8,175.9M540.4,188.5C536,185.3,536.1,185.2,531.7,182M531.7,182C527.4,178.8,527.3,178.8,522.9,175.6M531.7,182C527.4,178.8,527.4,178.7,523,175.5M584.6,219.8C554.1,197.2,553.9,197.6,523.3,175.1M584.6,219.8C580.2,216.6,580.4,216.3,576.1,213.1M576.1,213.1C550,193.7,549.7,194.1,523.6,174.7M576.1,213.1C550,193.7,549.8,193.9,523.7,174.6M576.1,213.1C550,193.7,549.9,193.8,523.9,174.4M576.1,213.1C550,193.7,550.1,193.6,524,174.2M576.1,213.1C550,193.7,550.2,193.5,524.2,174M576.1,213.1C571.7,209.9,572.1,209.3,567.8,206.1M567.8,206.1C546.2,189.7,546,190,524.4,173.7M567.8,206.1C563.5,202.8,563.7,202.6,559.3,199.3M559.3,199.3C542.1,186.2,541.9,186.5,524.6,173.4M559.3,199.3C542.1,186.2,542,186.3,524.7,173.2M559.3,199.3C542.1,186.2,542.1,186.2,524.8,173.1M559.3,199.3C555,196,555.3,195.7,551,192.4M551,192.4C538.1,182.5,538,182.7,525,172.8M551,192.4C546.7,189.1,546.8,189,542.5,185.7M542.5,185.7C533.9,179.1,533.8,179.2,525.2,172.6M542.5,185.7C538.2,182.4,538.3,182.2,534,178.9M534,178.9C529.7,175.6,529.7,175.7,525.4,172.4M534,178.9C529.7,175.6,529.8,175.6,525.5,172.3M585.9,218.1C556,194.7,555.8,195.1,525.8,171.8M585.9,218.1C581.6,214.8,581.8,214.5,577.6,211.2M577.6,211.2C552,191.1,551.7,191.5,526.1,171.5M577.6,211.2C552,191.1,551.8,191.3,526.2,171.3M577.6,211.2C552,191.1,551.9,191.2,526.4,171.1M577.6,211.2C552,191.1,552,191,526.5,170.9M577.6,211.2C552,191.1,552.2,190.9,526.6,170.8M577.6,211.2C573.3,207.8,573.7,207.3,569.5,203.9M569.5,203.9C548.3,187,548.1,187.3,526.9,170.4M569.5,203.9C565.3,200.5,565.4,200.3,561.2,197M561.2,197C544.3,183.4,544.1,183.7,527.1,170.2M561.2,197C544.3,183.4,544.2,183.5,527.2,170M561.2,197C544.3,183.4,544.3,183.4,527.4,169.9M561.2,197C557,193.6,557.2,193.2,553,189.8M553,189.8C540.4,179.6,540.2,179.8,527.6,169.6M553,189.8C548.8,186.4,548.9,186.3,544.7,182.9M544.7,182.9C536.3,176.1,536.2,176.2,527.8,169.4M544.7,182.9C540.5,179.5,540.6,179.3,536.4,175.9M536.4,175.9C532.2,172.5,532.1,172.6,527.9,169.2M536.4,175.9C532.2,172.5,532.2,172.5,528,169.1M587.3,216.4C558,192.3,557.7,192.6,528.4,168.6M587.3,216.4C583.1,212.9,583.3,212.7,579.1,209.2M579.1,209.2C554.1,188.5,553.8,188.9,528.6,168.3M579.1,209.2C554.1,188.5,553.9,188.8,528.8,168.1M579.1,209.2C554.1,188.5,554,188.6,528.9,167.9M579.1,209.2C554.1,188.5,554.1,188.5,529.1,167.8M579.1,209.2C554.1,188.5,554.2,188.4,529.2,167.6M579.1,209.2C574.9,205.8,575.4,205.3,571.2,201.8M571.2,201.8C550.5,184.4,550.3,184.6,529.5,167.3M571.2,201.8C567.1,198.3,567.2,198.1,563.1,194.6M563.1,194.6C546.5,180.7,546.3,180.9,529.7,167M563.1,194.6C546.5,180.7,546.4,180.8,529.8,166.9M563.1,194.6C546.5,180.7,546.5,180.7,530,166.7M563.1,194.6C558.9,191.2,559.2,190.8,555.1,187.3M555.1,187.3C542.7,176.8,542.6,177,530.2,166.5M555.1,187.3C551,183.8,551.1,183.7,547,180.1M547,180.1C538.7,173.1,538.6,173.2,530.4,166.2M547,180.1C542.9,176.6,543,176.5,538.8,173M538.8,173C534.7,169.5,534.7,169.5,530.5,166M538.8,173C534.7,169.5,534.8,169.4,530.6,165.9M588.7,214.7C560,189.9,559.7,190.2,531,165.5M588.7,214.7C584.6,211.2,584.8,210.9,580.7,207.4M580.7,207.4C556.2,186,555.9,186.4,531.3,165.2M580.7,207.4C556.2,186,556,186.3,531.4,165M580.7,207.4C556.2,186,556.1,186.1,531.6,164.8M580.7,207.4C556.2,186,556.2,186,531.7,164.6M580.7,207.4C556.2,186,556.3,185.9,531.9,164.5M580.7,207.4C576.6,203.8,577.1,203.3,573,199.7M573,199.7C552.7,181.8,552.5,182.1,532.1,164.2M573,199.7C568.9,196.2,569.1,196,565.1,192.4M565.1,192.4C548.8,178,548.6,178.2,532.4,163.9M565.1,192.4C548.8,178,548.7,178.1,532.5,163.8M565.1,192.4C548.8,178,548.8,178,532.6,163.6M565.1,192.4C561,188.8,561.3,188.5,557.2,184.8M557.2,184.8C545.1,174,545,174.2,532.9,163.4M557.2,184.8C553.2,181.2,553.3,181.1,549.3,177.5M549.3,177.5C541.2,170.2,541.1,170.4,533.1,163.1M549.3,177.5C545.3,173.9,545.4,173.7,541.3,170.1M541.3,170.1C537.3,166.5,537.3,166.6,533.2,162.9M541.3,170.1C537.3,166.5,537.4,166.5,533.3,162.8M590.1,213.1C562.1,187.6,561.8,187.9,533.7,162.4M590.1,213.1C586.1,209.4,586.3,209.2,582.3,205.5M582.3,205.5C558.4,183.6,558,184,534,162.1M582.3,205.5C558.4,183.6,558.2,183.8,534.1,161.9M582.3,205.5C558.4,183.6,558.3,183.7,534.3,161.8M582.3,205.5C558.4,183.6,558.4,183.6,534.5,161.6M582.3,205.5C558.4,183.6,558.5,183.4,534.6,161.4M582.3,205.5C578.4,201.9,578.8,201.4,574.8,197.7M574.8,197.7C555,179.3,554.8,179.5,534.9,161.1M574.8,197.7C570.9,194,571,193.8,567.1,190.2M567.1,190.2C551.2,175.4,551,175.6,535.1,160.9M567.1,190.2C551.2,175.4,551.1,175.5,535.3,160.7M567.1,190.2C551.2,175.4,551.2,175.4,535.4,160.6M567.1,190.2C563.1,186.5,563.4,186.1,559.5,182.4M559.5,182.4C547.6,171.3,547.5,171.5,535.6,160.4M559.5,182.4C555.5,178.7,555.6,178.6,551.7,174.9M551.7,174.9C543.8,167.4,543.7,167.6,535.8,160.1M551.7,174.9C547.8,171.1,547.9,171,543.9,167.3M543.9,167.3C540,163.6,540,163.6,536,159.9M543.9,167.3C540,163.6,540,163.5,536.1,159.8M591.6,211.5C564.2,185.3,563.9,185.6,536.5,159.4M591.6,211.5C587.7,207.8,587.9,207.5,584,203.8M584,203.8C560.6,181.2,560.3,181.6,536.8,159.1M584,203.8C560.6,181.2,560.4,181.4,536.9,158.9M584,203.8C560.6,181.2,560.5,181.3,537.1,158.8M584,203.8C560.6,181.2,560.6,181.2,537.3,158.6M584,203.8C560.6,181.2,560.8,181.1,537.4,158.5M584,203.8C580.1,200,580.6,199.5,576.7,195.7M576.7,195.7C557.3,176.8,557.1,177,537.7,158.2M576.7,195.7C572.8,192,573,191.8,569.1,188M569.1,188C553.7,172.8,553.5,173,538,157.9M569.1,188C553.7,172.8,553.6,172.9,538.1,157.8M569.1,188C553.7,172.8,553.7,172.8,538.2,157.6M569.1,188C565.3,184.2,565.6,183.9,561.7,180.1M561.7,180.1C550.2,168.7,550,168.8,538.4,157.4M561.7,180.1C557.9,176.3,558,176.1,554.2,172.3M554.2,172.3C546.5,164.7,546.4,164.8,538.7,157.2M554.2,172.3C550.3,168.5,550.4,168.4,546.6,164.6M546.6,164.6C542.7,160.8,542.7,160.8,538.9,157M546.6,164.6C542.7,160.8,542.8,160.7,539,156.9M593.1,209.9C566.4,183,566.1,183.3,539.3,156.5M593.1,209.9C589.3,206.1,589.6,205.9,585.8,202M585.8,202C562.9,178.9,562.6,179.2,539.6,156.2M585.8,202C562.9,178.9,562.7,179.1,539.8,156M585.8,202C562.9,178.9,562.8,179,540,155.9M585.8,202C562.9,178.9,562.9,178.9,540.1,155.7M585.8,202C562.9,178.9,563.1,178.7,540.3,155.6M585.8,202C581.9,198.2,582.4,197.7,578.6,193.8M578.6,193.8C559.7,174.4,559.5,174.6,540.6,155.3M578.6,193.8C574.9,189.9,575,189.8,571.3,185.9M571.3,185.9C556.2,170.3,556,170.5,540.8,155M571.3,185.9C556.2,170.3,556.1,170.4,541,154.9M571.3,185.9C556.2,170.3,556.2,170.3,541.1,154.8M571.3,185.9C567.5,182,567.8,181.7,564.1,177.8M564.1,177.8C552.8,166.1,552.6,166.2,541.4,154.5M564.1,177.8C560.3,173.9,560.4,173.7,556.7,169.8M556.7,169.8C549.2,162,549.1,162.1,541.6,154.3M556.7,169.8C552.9,165.9,553.1,165.8,549.3,161.9M549.3,161.9C545.6,158,545.5,158,541.8,154.1M549.3,161.9C545.6,158,545.6,157.9,541.9,154M594.7,208.4C568.7,180.9,568.4,181.1,542.3,153.7M594.7,208.4C591,204.5,591.2,204.3,587.5,200.3M587.5,200.3C565.3,176.6,564.9,177,542.6,153.3M587.5,200.3C565.3,176.6,565,176.8,542.8,153.2M587.5,200.3C565.3,176.6,565.2,176.7,542.9,153M587.5,200.3C565.3,176.6,565.3,176.6,543.1,152.9M587.5,200.3C565.3,176.6,565.4,176.5,543.3,152.7M587.5,200.3C583.8,196.4,584.3,195.9,580.6,191.9M580.6,191.9C562.2,172.1,562,172.3,543.5,152.4M580.6,191.9C576.9,188,577.1,187.8,573.5,183.8M573.5,183.8C558.8,167.9,558.5,168.1,543.8,152.2M573.5,183.8C558.8,167.9,558.6,168,543.9,152.1M573.5,183.8C558.8,167.9,558.8,167.9,544.1,151.9M573.5,183.8C569.8,179.8,570.1,179.5,566.4,175.5M566.4,175.5C555.5,163.5,555.3,163.7,544.3,151.7M566.4,175.5C562.8,171.5,562.9,171.4,559.3,167.4M559.3,167.4C552,159.4,551.9,159.5,544.6,151.5M559.3,167.4C555.6,163.4,555.8,163.3,552.1,159.3M552.1,159.3C548.5,155.3,548.4,155.3,544.8,151.3M552.1,159.3C548.5,155.3,548.5,155.2,544.9,151.2M596.3,206.9C571,178.7,570.7,179,545.3,150.9M596.3,206.9C592.7,202.9,592.9,202.7,589.3,198.7M589.3,198.7C567.7,174.4,567.3,174.8,545.6,150.6M589.3,198.7C567.7,174.4,567.4,174.6,545.8,150.4M589.3,198.7C567.7,174.4,567.6,174.5,545.9,150.3M589.3,198.7C567.7,174.4,567.7,174.4,546.1,150.1M589.3,198.7C567.7,174.4,567.9,174.3,546.3,150M589.3,198.7C585.7,194.6,586.2,194.2,582.6,190.1M582.6,190.1C564.7,169.8,564.5,170,546.6,149.7M582.6,190.1C579.1,186.1,579.3,185.9,575.7,181.8M575.7,181.8C561.4,165.5,561.2,165.7,546.9,149.5M575.7,181.8C561.4,165.5,561.3,165.6,547,149.3M575.7,181.8C561.4,165.5,561.4,165.5,547.1,149.2M575.7,181.8C572.1,177.7,572.4,177.4,568.9,173.4M568.9,173.4C558.2,161.1,558.1,161.2,547.4,149M568.9,173.4C565.3,169.3,565.5,169.1,561.9,165M561.9,165C554.8,156.9,554.7,157,547.6,148.8M561.9,165C558.4,161,558.5,160.9,555,156.8M555,156.8C551.4,152.7,551.4,152.7,547.8,148.6M555,156.8C551.4,152.7,551.5,152.6,547.9,148.5M598,205.5C573.4,176.7,573,176.9,548.3,148.2M598,205.5C594.4,201.4,594.7,201.2,591.2,197.1M591.2,197.1C570.2,172.3,569.8,172.6,548.7,147.9M591.2,197.1C570.2,172.3,569.9,172.5,548.8,147.7M591.2,197.1C570.2,172.3,570.1,172.4,549,147.6M591.2,197.1C570.2,172.3,570.2,172.2,549.2,147.4M591.2,197.1C570.2,172.3,570.3,172.1,549.4,147.3M591.2,197.1C587.7,192.9,588.2,192.5,584.7,188.3M584.7,188.3C567.3,167.6,567.1,167.8,549.7,147M584.7,188.3C581.2,184.2,581.4,184,578,179.9M578,179.9C564.1,163.2,563.9,163.4,550,146.8M578,179.9C564.1,163.2,564,163.3,550.1,146.7M578,179.9C564.1,163.2,564.1,163.2,550.2,146.6M578,179.9C574.5,175.7,574.8,175.4,571.4,171.2M571.4,171.2C561,158.7,560.9,158.9,550.5,146.3M571.4,171.2C567.9,167.1,568.1,166.9,564.6,162.8M564.6,162.8C557.8,154.4,557.6,154.5,550.7,146.2M564.6,162.8C561.2,158.6,561.3,158.5,557.9,154.3M557.9,154.3C554.4,150.1,554.4,150.2,550.9,146M557.9,154.3C554.4,150.1,554.5,150.1,551.1,145.9M599.6,204.1C575.8,174.7,575.4,174.9,551.5,145.6M599.6,204.1C596.2,199.9,596.5,199.7,593.1,195.5M593.1,195.5C572.7,170.2,572.3,170.5,551.8,145.3M593.1,195.5C572.7,170.2,572.4,170.4,552,145.1M593.1,195.5C572.7,170.2,572.6,170.3,552.2,145M593.1,195.5C572.7,170.2,572.7,170.2,552.3,144.8M593.1,195.5C572.7,170.2,572.9,170,552.5,144.7M593.1,195.5C589.7,191.3,590.2,190.9,586.8,186.6M586.8,186.6C570,165.4,569.7,165.6,552.8,144.4M586.8,186.6C583.5,182.4,583.7,182.2,580.3,178M580.3,178C566.9,161,566.6,161.2,553.1,144.2M580.3,178C566.9,161,566.7,161.1,553.3,144.1M580.3,178C566.9,161,566.9,161,553.4,144M580.3,178C576.9,173.7,577.3,173.5,573.9,169.2M573.9,169.2C563.9,156.4,563.7,156.5,553.7,143.8M573.9,169.2C570.6,164.9,570.7,164.8,567.4,160.5M567.4,160.5C560.7,152,560.6,152.1,553.9,143.6M567.4,160.5C564.1,156.3,564.2,156.2,560.9,151.9M560.9,151.9C557.5,147.6,557.5,147.7,554.1,143.4M560.9,151.9C557.5,147.6,557.6,147.6,554.2,143.3M594.7,194.2C574.9,168.4,574.6,168.7,554.7,143M594.7,194.2C591.4,189.9,591.7,189.7,588.4,185.4M588.4,185.4C572,163.8,571.6,164.2,555,142.7M588.4,185.4C572,163.8,571.7,164.1,555.2,142.6M588.4,185.4C572,163.8,571.9,163.9,555.4,142.4M588.4,185.4C572,163.8,572,163.8,555.6,142.3M588.4,185.4C572,163.8,572.2,163.7,555.7,142.2M588.4,185.4C585.1,181.1,585.7,180.6,582.4,176.3M582.4,176.3C569.4,159,569.2,159.2,556.1,141.9M582.4,176.3C579.2,172,579.4,171.8,576.2,167.5M576.2,167.5C566.4,154.5,566.1,154.7,556.4,141.7M576.2,167.5C566.4,154.5,566.3,154.6,556.5,141.6M576.2,167.5C566.4,154.5,566.4,154.5,556.7,141.5M576.2,167.5C572.9,163.1,573.3,162.9,570,158.5M570,158.5C563.5,149.9,563.4,150,556.9,141.3M570,158.5C566.8,154.2,566.9,154.1,563.7,149.8M563.7,149.8C560.5,145.4,560.4,145.4,557.2,141.1M563.7,149.8C560.5,145.4,560.5,145.4,557.3,141M596.6,192.8C577.4,166.6,577,166.9,557.7,140.7M596.6,192.8C593.4,188.4,593.7,188.2,590.5,183.8M590.5,183.8C574.5,161.9,574.1,162.3,558.1,140.4M590.5,183.8C574.5,161.9,574.2,162.2,558.3,140.3M590.5,183.8C574.5,161.9,574.4,162,558.4,140.2M590.5,183.8C574.5,161.9,574.6,161.9,558.6,140M590.5,183.8C574.5,161.9,574.7,161.8,558.8,139.9M590.5,183.8C587.3,179.5,587.9,179,584.7,174.6M584.7,174.6C572.1,157,571.8,157.2,559.1,139.7M584.7,174.6C581.5,170.2,581.8,170.1,578.6,165.7M578.6,165.7C569.2,152.5,568.9,152.6,559.4,139.4M578.6,165.7C569.2,152.5,569,152.5,559.6,139.3M578.6,165.7C569.2,152.5,569.2,152.4,559.7,139.2M578.6,165.7C575.5,161.3,575.8,161,572.7,156.6M572.7,156.6C566.4,147.8,566.3,147.9,560,139M572.7,156.6C569.6,152.2,569.7,152.1,566.6,147.7M566.6,147.7C563.4,143.2,563.4,143.3,560.3,138.9M566.6,147.7C563.4,143.2,563.5,143.2,560.4,138.8M598.4,191.5C579.9,164.8,579.5,165.1,560.8,138.5M598.4,191.5C595.3,187,595.6,186.8,592.5,182.4M592.5,182.4C577.1,160.1,576.7,160.4,561.2,138.2M592.5,182.4C577.1,160.1,576.8,160.3,561.4,138.1M592.5,182.4C577.1,160.1,577,160.2,561.6,137.9M592.5,182.4C577.1,160.1,577.2,160.1,561.7,137.8M592.5,182.4C577.1,160.1,577.3,160,561.9,137.7M592.5,182.4C589.5,177.9,590.1,177.5,587,173M587,173C574.8,155.1,574.5,155.3,562.3,137.5M587,173C583.9,168.6,584.2,168.4,581.1,163.9M581.1,163.9C572,150.5,571.7,150.7,562.6,137.2M581.1,163.9C572,150.5,571.9,150.6,562.7,137.1M581.1,163.9C572,150.5,572,150.5,562.9,137M581.1,163.9C578.1,159.4,578.5,159.2,575.4,154.7M575.4,154.7C569.4,145.7,569.2,145.8,563.1,136.9M575.4,154.7C572.4,150.2,572.5,150.1,569.5,145.6M569.5,145.6C566.5,141.1,566.4,141.2,563.4,136.7M569.5,145.6C566.5,141.1,566.5,141.1,563.5,136.6M600.3,190.2C582.4,163.1,582,163.3,564,136.3M600.3,190.2C597.3,185.7,597.6,185.5,594.7,180.9M594.7,180.9C579.8,158.3,579.3,158.6,564.3,136.1M594.7,180.9C579.8,158.3,579.5,158.5,564.5,135.9M594.7,180.9C579.8,158.3,579.6,158.4,564.7,135.8M594.7,180.9C579.8,158.3,579.8,158.3,564.9,135.7M594.7,180.9C579.8,158.3,580,158.2,565.1,135.6M594.7,180.9C591.7,176.4,592.3,176,589.3,171.5M589.3,171.5C577.5,153.3,577.3,153.5,565.4,135.3M589.3,171.5C586.4,166.9,586.6,166.8,583.7,162.2M583.7,162.2C574.9,148.6,574.6,148.8,565.7,135.1M583.7,162.2C574.9,148.6,574.7,148.7,565.9,135M583.7,162.2C574.9,148.6,574.9,148.6,566.1,134.9M583.7,162.2C580.7,157.7,581.1,157.4,578.2,152.9M578.2,152.9C572.3,143.8,572.2,143.9,566.3,134.8M578.2,152.9C575.3,148.3,575.4,148.2,572.5,143.7M572.5,143.7C569.6,139.1,569.5,139.2,566.6,134.6M572.5,143.7C569.6,139.1,569.6,139.1,566.7,134.5M602.3,188.9C584.9,161.4,584.6,161.7,567.2,134.2M602.3,188.9C599.4,184.4,599.7,184.2,596.8,179.6M596.8,179.6C582.5,156.6,582,156.9,567.5,134M596.8,179.6C582.5,156.6,582.2,156.8,567.7,133.9M596.8,179.6C582.5,156.6,582.3,156.7,567.9,133.7M596.8,179.6C582.5,156.6,582.5,156.6,568.1,133.6M596.8,179.6C582.5,156.6,582.6,156.5,568.3,133.5M596.8,179.6C593.9,175,594.5,174.6,591.7,170M591.7,170C580.3,151.5,580.1,151.7,568.7,133.3M591.7,170C588.9,165.4,589.1,165.2,586.3,160.6M586.3,160.6C577.8,146.8,577.5,146.9,569,133.1M586.3,160.6C577.8,146.8,577.6,146.8,569.1,133M586.3,160.6C577.8,146.8,577.8,146.8,569.3,132.9M586.3,160.6C583.4,156,583.8,155.8,581,151.1M581,151.1C575.4,141.9,575.2,142,569.6,132.7M581,151.1C578.2,146.5,578.3,146.4,575.5,141.8M575.5,141.8C572.7,137.2,572.6,137.2,569.8,132.6M575.5,141.8C572.7,137.2,572.8,137.1,570,132.5M604.2,187.7C587.6,159.8,587.2,160.1,570.4,132.2M604.2,187.7C601.4,183.1,601.7,182.9,599,178.2M599,178.2C585.2,154.9,584.7,155.2,570.8,132M599,178.2C585.2,154.9,584.9,155.1,571,131.9M599,178.2C585.2,154.9,585,155,571.2,131.7M599,178.2C585.2,154.9,585.2,154.9,571.4,131.6M599,178.2C585.2,154.9,585.4,154.8,571.6,131.5M599,178.2C596.2,173.6,596.8,173.2,594.1,168.5M594.1,168.5C583.2,149.8,582.9,150,571.9,131.3M594.1,168.5C591.4,163.9,591.6,163.7,588.9,159M588.9,159C580.7,145,580.4,145.2,572.3,131.1M588.9,159C580.7,145,580.6,145.1,572.4,131M588.9,159C580.7,145,580.7,145,572.6,130.9M588.9,159C586.2,154.4,586.6,154.1,583.8,149.4M583.8,149.4C578.4,140.1,578.3,140.2,572.9,130.8M583.8,149.4C581.1,144.8,581.3,144.7,578.6,140M578.6,140C575.9,135.3,575.8,135.3,573.1,130.6M578.6,140C575.9,135.3,576,135.2,573.3,130.5M611.5,196C592.9,163,592.5,163.2,573.7,130.3M611.5,196C608.9,191.3,609.1,191.1,606.5,186.4M606.5,186.4C590.6,158.1,590.1,158.3,574.1,130.1M606.5,186.4C590.6,158.1,590.3,158.2,574.3,129.9M606.5,186.4C590.6,158.1,590.4,158.2,574.5,129.8M606.5,186.4C590.6,158.1,590.6,158.1,574.7,129.7M606.5,186.4C590.6,158.1,590.8,158,574.9,129.6M606.5,186.4C603.8,181.7,604.4,181.4,601.8,176.6M601.8,176.6C588.7,152.9,588.4,153.1,575.3,129.4M601.8,176.6C599.2,171.9,599.4,171.8,596.8,167M596.8,167C586.3,148,586.1,148.2,575.6,129.2M596.8,167C586.3,148,586.2,148.1,575.7,129.1M596.8,167C586.3,148,586.3,148,575.9,129.1M596.8,167C594.2,162.3,594.6,162.1,592,157.3M592,157.3C584.2,143.1,584,143.2,576.2,128.9M592,157.3C589.4,152.6,589.5,152.5,587,147.7M587,147.7C581.8,138.2,581.6,138.3,576.5,128.8M587,147.7C584.4,142.9,584.5,142.9,581.9,138.1M581.9,138.1C579.3,133.3,579.3,133.4,576.7,128.6M581.9,138.1C579.3,133.3,579.4,133.3,576.8,128.6M613.4,195C595.6,161.5,595.2,161.7,577.3,128.3M613.4,195C610.9,190.2,611.2,190,608.6,185.2M608.6,185.2C593.5,156.5,593,156.8,577.7,128.1M608.6,185.2C593.5,156.5,593.2,156.7,577.9,128M608.6,185.2C593.5,156.5,593.3,156.6,578.1,127.9M608.6,185.2C593.5,156.5,593.5,156.5,578.3,127.8M608.6,185.2C593.5,156.5,593.6,156.4,578.5,127.7M608.6,185.2C606.1,180.5,606.7,180.2,604.2,175.4M604.2,175.4C591.7,151.3,591.4,151.5,578.9,127.5M604.2,175.4C601.7,170.5,601.9,170.4,599.4,165.6M599.4,165.6C589.5,146.4,589.2,146.5,579.2,127.3M599.4,165.6C589.5,146.4,589.3,146.4,579.3,127.2M599.4,165.6C589.5,146.4,589.5,146.4,579.5,127.1M599.4,165.6C596.9,160.8,597.3,160.6,594.9,155.8M594.9,155.8C587.4,141.3,587.2,141.4,579.8,127M594.9,155.8C592.4,151,592.6,150.9,590.1,146.1M590.1,146.1C585.2,136.4,585,136.5,580.1,126.8M590.1,146.1C587.6,141.2,587.8,141.2,585.3,136.3M585.3,136.3C582.8,131.5,582.8,131.5,580.3,126.7M585.3,136.3C582.8,131.5,582.9,131.5,580.4,126.7M615.4,194C598.4,160.1,598,160.3,580.9,126.4M615.4,194C613,189.1,613.2,189,610.8,184.1M610.8,184.1C596.4,155,595.9,155.3,581.3,126.2M610.8,184.1C596.4,155,596.1,155.2,581.5,126.1M610.8,184.1C596.4,155,596.2,155.1,581.7,126M610.8,184.1C596.4,155,596.4,155,581.9,125.9M610.8,184.1C596.4,155,596.6,154.9,582.1,125.8M610.8,184.1C608.4,179.3,609,179,606.6,174.1M606.6,174.1C594.7,149.8,594.5,149.9,582.5,125.6M606.6,174.1C604.2,169.3,604.5,169.1,602.1,164.3M602.1,164.3C592.6,144.8,592.3,144.9,582.8,125.5M602.1,164.3C592.6,144.8,592.5,144.9,583,125.4M602.1,164.3C592.6,144.8,592.6,144.8,583.2,125.3M602.1,164.3C599.7,159.4,600.1,159.2,597.8,154.3M597.8,154.3C590.7,139.7,590.5,139.8,583.5,125.2M597.8,154.3C595.4,149.5,595.6,149.4,593.3,144.5M593.3,144.5C588.6,134.7,588.4,134.8,583.7,125M593.3,144.5C590.9,139.6,591.1,139.5,588.7,134.6M588.7,134.6C586.4,129.8,586.3,129.8,584,124.9M588.7,134.6C586.4,129.8,586.5,129.7,584.1,124.8M617.3,193C601.2,158.7,600.8,158.9,584.6,124.6M617.3,193C615,188.1,615.3,188,613,183.1M613,183.1C599.3,153.6,598.8,153.8,585,124.4M613,183.1C599.3,153.6,599,153.7,585.2,124.3M613,183.1C599.3,153.6,599.2,153.7,585.4,124.2M613,183.1C599.3,153.6,599.3,153.6,585.6,124.1M613,183.1C599.3,153.6,599.5,153.5,585.8,124M613,183.1C610.8,178.2,611.3,177.9,609.1,173M609.1,173C597.8,148.3,597.5,148.5,586.2,123.9M609.1,173C606.8,168,607.1,167.9,604.8,163M604.8,163C595.8,143.3,595.6,143.4,586.5,123.7M604.8,163C595.8,143.3,595.7,143.3,586.7,123.6M604.8,163C595.8,143.3,595.8,143.3,586.9,123.6M604.8,163C602.6,158.1,603,157.9,600.7,152.9M600.7,152.9C594.1,138.1,593.9,138.2,587.2,123.4M600.7,152.9C598.5,148,598.7,147.9,596.5,143M596.5,143C592,133.1,591.9,133.2,587.4,123.3M596.5,143C594.3,138,594.4,138,592.2,133M592.2,133C590,128.1,589.9,128.1,587.7,123.2M592.2,133C590,128.1,590,128.1,587.8,123.1M619.3,192.1C604.1,157.4,603.7,157.6,588.3,122.9M619.3,192.1C617.2,187.1,617.4,187,615.3,182.1M615.3,182.1C602.3,152.3,601.8,152.5,588.7,122.7M615.3,182.1C602.3,152.3,602,152.4,588.9,122.6M615.3,182.1C602.3,152.3,602.2,152.3,589.1,122.5M615.3,182.1C602.3,152.3,602.3,152.3,589.4,122.5M615.3,182.1C602.3,152.3,602.5,152.2,589.6,122.4M615.3,182.1C613.1,177.1,613.7,176.8,611.6,171.9M611.6,171.9C600.9,147,600.6,147.1,589.9,122.2M611.6,171.9C609.5,166.9,609.7,166.8,607.6,161.8M607.6,161.8C599.1,141.8,598.8,142,590.3,122.1M607.6,161.8C599.1,141.8,598.9,141.9,590.4,122M607.6,161.8C599.1,141.8,599.1,141.8,590.6,121.9M607.6,161.8C605.4,156.8,605.8,156.6,603.7,151.6M603.7,151.6C597.4,136.7,597.2,136.7,590.9,121.8M603.7,151.6C601.6,146.6,601.8,146.6,599.7,141.6M599.7,141.6C595.5,131.6,595.4,131.6,591.2,121.7M599.7,141.6C597.6,136.6,597.8,136.5,595.7,131.5M595.7,131.5C593.6,126.5,593.5,126.5,591.5,121.6M595.7,131.5C593.6,126.5,593.7,126.5,591.6,121.5M621.3,191.3C607,156.2,606.6,156.3,592.1,121.3M621.3,191.3C619.3,186.2,619.6,186.1,617.5,181.1M617.5,181.1C605.3,151,604.8,151.2,592.5,121.1M617.5,181.1C605.3,151,605,151.1,592.7,121M617.5,181.1C605.3,151,605.2,151.1,592.9,121M617.5,181.1C605.3,151,605.3,151,593.1,120.9M617.5,181.1C605.3,151,605.5,150.9,593.3,120.8M617.5,181.1C615.5,176.1,616.1,175.8,614.1,170.8M614.1,170.8C604.1,145.7,603.8,145.8,593.7,120.6M614.1,170.8C612.1,165.8,612.3,165.7,610.3,160.6M610.3,160.6C602.4,140.5,602.1,140.6,594.1,120.5M610.3,160.6C602.4,140.5,602.2,140.6,594.2,120.4M610.3,160.6C602.4,140.5,602.4,140.5,594.4,120.4M610.3,160.6C608.4,155.6,608.8,155.5,606.8,150.4M606.8,150.4C600.9,135.3,600.6,135.4,594.7,120.2M606.8,150.4C604.8,145.4,605,145.3,603,140.2M603,140.2C599.1,130.2,598.9,130.2,595,120.1M603,140.2C601.1,135.2,601.2,135.1,599.2,130.1M599.2,130.1C597.3,125,597.2,125.1,595.2,120M599.2,130.1C597.3,125,597.3,125,595.4,120M623.4,190.5C609.9,155,609.5,155.2,595.9,119.8M623.4,190.5C621.4,185.4,621.7,185.3,619.8,180.2M619.8,180.2C608.4,149.8,607.9,150,596.3,119.6M619.8,180.2C608.4,149.8,608,149.9,596.5,119.5M619.8,180.2C608.4,149.8,608.2,149.9,596.7,119.5M619.8,180.2C608.4,149.8,608.4,149.8,596.9,119.4M619.8,180.2C608.4,149.8,608.6,149.7,597.1,119.3M619.8,180.2C617.9,175.1,618.5,174.9,616.6,169.8M616.6,169.8C607.3,144.4,607,144.5,597.5,119.2M616.6,169.8C614.8,164.8,615,164.7,613.1,159.6M613.1,159.6C605.7,139.2,605.4,139.3,597.9,119M613.1,159.6C605.7,139.2,605.5,139.3,598,119M613.1,159.6C605.7,139.2,605.7,139.2,598.2,118.9M613.1,159.6C611.3,154.5,611.7,154.3,609.8,149.3M609.8,149.3C604.3,134,604.1,134.1,598.5,118.8M609.8,149.3C608,144.2,608.2,144.1,606.3,139M606.3,139C602.7,128.8,602.5,128.9,598.8,118.7M606.3,139C604.5,133.9,604.6,133.9,602.8,128.8M602.8,128.8C601,123.7,600.9,123.7,599.1,118.6M602.8,128.8C601,123.7,601,123.6,599.2,118.5M629,199.9C614.6,159,614.2,159.2,599.7,118.4M629,199.9C627.2,194.8,627.5,194.7,625.7,189.6M625.7,189.6C613.2,153.8,612.7,154,600.1,118.2M625.7,189.6C613.2,153.8,612.9,153.9,600.3,118.1M625.7,189.6C613.2,153.8,613.1,153.8,600.6,118.1M625.7,189.6C613.2,153.8,613.2,153.8,600.8,118M625.7,189.6C613.2,153.8,613.4,153.7,601,117.9M625.7,189.6C623.9,184.5,624.5,184.3,622.7,179.2M622.7,179.2C612.2,148.4,611.9,148.5,601.4,117.8M622.7,179.2C621,174,621.2,174,619.5,168.8M619.5,168.8C610.8,143.2,610.5,143.3,601.7,117.7M619.5,168.8C610.8,143.2,610.6,143.2,601.9,117.6M619.5,168.8C610.8,143.2,610.8,143.2,602.1,117.5M619.5,168.8C617.7,163.7,618.1,163.6,616.4,158.4M616.4,158.4C609.6,137.9,609.3,138,602.4,117.4M616.4,158.4C614.7,153.3,614.9,153.2,613.2,148.1M613.2,148.1C608.1,132.7,607.8,132.7,602.7,117.3M613.2,148.1C611.5,142.9,611.8,142.8,610.1,137.7M610.1,137.7C606.7,127.4,606.4,127.5,602.9,117.2M610.1,137.7C606.7,127.4,606.5,127.5,603.1,117.2M610.1,137.7C606.7,127.4,606.6,127.4,603.2,117.2M610.1,137.7C606.7,127.4,606.7,127.4,603.3,117.1M610.1,137.7C606.7,127.4,606.9,127.4,603.5,117.1M610.1,137.7C608.4,132.6,608.8,132.4,607.1,127.3M607.1,127.3C605.5,122.1,605.4,122.1,603.7,117M607.1,127.3C605.5,122.1,605.5,122.1,603.8,116.9M631.2,199.2C618,157.9,617.6,158,604.3,116.8M631.2,199.2C629.5,194,629.8,193.9,628.2,188.8M628.2,188.8C616.8,152.6,616.3,152.8,604.8,116.6M628.2,188.8C616.8,152.6,616.5,152.7,605,116.6M628.2,188.8C616.8,152.6,616.6,152.7,605.2,116.5M628.2,188.8C616.8,152.6,616.8,152.6,605.4,116.4M628.2,188.8C616.8,152.6,617,152.6,605.7,116.4M628.2,188.8C626.6,183.6,627.1,183.4,625.5,178.3M625.5,178.3C616,147.2,615.7,147.3,606,116.3M625.5,178.3C623.9,173.1,624.2,173,622.6,167.8M622.6,167.8C614.7,141.9,614.4,142,606.4,116.1M622.6,167.8C614.7,141.9,614.5,142,606.6,116.1M622.6,167.8C614.7,141.9,614.6,141.9,606.7,116M622.6,167.8C621,162.7,621.4,162.5,619.9,157.3M619.9,157.3C613.6,136.6,613.3,136.7,607.1,115.9M619.9,157.3C618.3,152.2,618.5,152.1,617,146.9M617,146.9C612.3,131.3,612,131.4,607.3,115.9M617,146.9C615.4,141.7,615.7,141.6,614.1,136.4M614.1,136.4C611.1,126,610.7,126.1,607.6,115.8M614.1,136.4C611.1,126,610.8,126.1,607.8,115.7M614.1,136.4C611.1,126,611,126.1,607.9,115.7M614.1,136.4C611.1,126,611.1,126,608,115.6M614.1,136.4C611.1,126,611.2,126,608.2,115.6M614.1,136.4C612.6,131.2,613,131.1,611.5,125.9M611.5,125.9C610,120.7,609.9,120.7,608.4,115.5M611.5,125.9C610,120.7,610.1,120.7,608.5,115.5M633.4,198.5C621.5,156.9,621.1,157,609,115.4M633.4,198.5C631.9,193.3,632.2,193.2,630.7,188M630.7,188C620.4,151.5,619.9,151.7,609.5,115.2M630.7,188C620.4,151.5,620.1,151.6,609.7,115.2M630.7,188C620.4,151.5,620.2,151.6,609.9,115.1M630.7,188C620.4,151.5,620.4,151.5,610.1,115M630.7,188C620.4,151.5,620.6,151.5,610.4,115M630.7,188C629.2,182.8,629.8,182.7,628.3,177.4M628.3,177.4C619.7,146.1,619.4,146.2,610.7,114.9M628.3,177.4C626.9,172.2,627.1,172.2,625.7,166.9M625.7,166.9C618.6,140.8,618.3,140.9,611.1,114.8M625.7,166.9C618.6,140.8,618.4,140.8,611.3,114.7M625.7,166.9C618.6,140.8,618.6,140.8,611.4,114.7M625.7,166.9C624.3,161.7,624.7,161.6,623.3,156.4M623.3,156.4C617.7,135.4,617.4,135.5,611.8,114.6M623.3,156.4C621.9,151.1,622.1,151.1,620.7,145.8M620.7,145.8C616.6,130.1,616.3,130.2,612.1,114.5M620.7,145.8C619.4,140.6,619.6,140.5,618.2,135.3M618.2,135.3C615.5,124.8,615.1,124.9,612.3,114.4M618.2,135.3C615.5,124.8,615.3,124.9,612.5,114.4M618.2,135.3C615.5,124.8,615.4,124.8,612.6,114.4M618.2,135.3C615.5,124.8,615.5,124.8,612.7,114.3M618.2,135.3C615.5,124.8,615.6,124.8,612.9,114.3M618.2,135.3C616.9,130,617.3,129.9,615.9,124.7M615.9,124.7C614.6,119.4,614.5,119.5,613.1,114.2M615.9,124.7C614.6,119.4,614.6,119.4,613.3,114.2M638.2,208.4C626.3,161.2,625.9,161.3,613.8,114.1M638.2,208.4C636.9,203.2,637.1,203.1,635.8,197.9M635.8,197.9C625.3,155.8,624.9,155.9,614.2,113.9M635.8,197.9C625.3,155.8,625,155.9,614.4,113.9M635.8,197.9C625.3,155.8,625.2,155.9,614.7,113.8M635.8,197.9C625.3,155.8,625.4,155.8,614.9,113.8M635.8,197.9C625.3,155.8,625.5,155.8,615.1,113.7M635.8,197.9C634.5,192.6,635,192.5,633.7,187.2M633.7,187.2C624.8,150.4,624.5,150.5,615.5,113.6M633.7,187.2C632.5,182,632.7,181.9,631.4,176.7M631.4,176.7C623.8,145.1,623.5,145.1,615.8,113.5M631.4,176.7C623.8,145.1,623.7,145.1,616,113.5M631.4,176.7C623.8,145.1,623.8,145.1,616.2,113.5M631.4,176.7C630.1,171.4,630.5,171.3,629.3,166M629.3,166C623.1,139.7,622.8,139.7,616.5,113.4M629.3,166C628,160.8,628.2,160.7,627,155.4M627,155.4C622.1,134.3,621.8,134.4,616.8,113.3M627,155.4C625.8,150.2,626,150.1,624.8,144.8M624.8,144.8C621.1,129,620.8,129.1,617.1,113.2M624.8,144.8C621.1,129,620.9,129,617.2,113.2M624.8,144.8C621.1,129,621.1,129,617.4,113.2M624.8,144.8C623.6,139.5,624,139.4,622.8,134.2M622.8,134.2C621.6,128.9,621.3,128.9,620.1,123.7M622.8,134.2C621.6,128.9,621.6,128.9,620.4,123.6M622.8,134.2C620.4,123.6,620.7,123.5,618.3,113M620.1,123.7C618.9,118.4,618.8,118.4,617.6,113.1M620.1,123.7C618.9,118.4,618.9,118.4,617.7,113.1M620.4,123.6C619.2,118.3,619.2,118.3,618,113M620.4,123.6C619.2,118.3,619.3,118.3,618.1,113M640.3,208C629.8,160.3,629.5,160.4,618.8,112.8M640.3,208C639.1,202.7,639.4,202.6,638.2,197.3M638.2,197.3C629.1,155,628.6,155.1,619.3,112.7M638.2,197.3C629.1,155,628.8,155,619.5,112.7M638.2,197.3C629.1,155,628.9,155,619.7,112.6M638.2,197.3C629.1,155,629.1,155,620,112.6M638.2,197.3C629.1,155,629.3,154.9,620.2,112.6M638.2,197.3C637.1,192,637.6,191.9,636.5,186.6M636.5,186.6C628.7,149.5,628.4,149.6,620.6,112.5M636.5,186.6C635.4,181.3,635.6,181.3,634.5,176M634.5,176C627.9,144.1,627.6,144.2,620.9,112.4M634.5,176C627.9,144.1,627.7,144.2,621.1,112.4M634.5,176C627.9,144.1,627.9,144.1,621.3,112.3M634.5,176C633.4,170.7,633.8,170.6,632.7,165.3M632.7,165.3C627.3,138.7,627.1,138.8,621.6,112.2M632.7,165.3C631.6,160,631.8,159.9,630.8,154.6M630.8,154.6C626.5,133.4,626.2,133.4,621.9,112.2M630.8,154.6C629.7,149.3,629.9,149.3,628.9,143.9M628.9,143.9C625.7,128,625.4,128.1,622.2,112.1M628.9,143.9C625.7,128,625.5,128,622.3,112.1M628.9,143.9C625.7,128,625.6,128,622.5,112.1M628.9,143.9C627.8,138.6,628.3,138.5,627.3,133.2M627.3,133.2C626.2,127.9,625.9,128,624.9,122.6M627.3,133.2C626.2,127.9,626.2,127.9,625.2,122.6M627.3,133.2C625.2,122.6,625.5,122.5,623.4,111.9M624.9,122.6C623.8,117.3,623.8,117.3,622.7,112M624.9,122.6C623.8,117.3,623.9,117.3,622.8,112M625.2,122.6C624.2,117.3,624.1,117.3,623.1,112M625.2,122.6C624.2,117.3,624.2,117.3,623.2,111.9M642.3,207.5C633.4,159.6,633,159.7,624,111.8M642.3,207.5C641.3,202.2,641.6,202.2,640.6,196.8M640.6,196.8C632.8,154.2,632.4,154.3,624.4,111.7M640.6,196.8C632.8,154.2,632.5,154.3,624.6,111.7M640.6,196.8C632.8,154.2,632.7,154.2,624.9,111.6M640.6,196.8C632.8,154.2,632.8,154.2,625.1,111.6M640.6,196.8C632.8,154.2,633,154.2,625.3,111.5M640.6,196.8C639.6,191.5,640.1,191.4,639.2,186.1M639.2,186.1C632.6,148.7,632.4,148.8,625.7,111.5M639.2,186.1C638.3,180.8,638.5,180.7,637.6,175.4M637.6,175.4C632,143.4,631.7,143.4,626.1,111.4M637.6,175.4C632,143.4,631.8,143.4,626.2,111.4M637.6,175.4C632,143.4,632,143.4,626.4,111.3M637.6,175.4C636.6,170,637,170,636.1,164.6M636.1,164.6C631.6,137.9,631.3,138,626.8,111.3M636.1,164.6C635.2,159.3,635.4,159.3,634.5,153.9M634.5,153.9C630.9,132.6,630.7,132.6,627.1,111.2M634.5,153.9C633.6,148.6,633.9,148.5,633,143.2M633,143.2C630.3,127.2,630,127.2,627.3,111.2M633,143.2C630.3,127.2,630.1,127.2,627.5,111.2M633,143.2C630.3,127.2,630.3,127.2,627.6,111.1M633,143.2C632.1,137.9,632.6,137.8,631.7,132.4M631.7,132.4C630.9,127.1,630.5,127.1,629.7,121.8M631.7,132.4C630.9,127.1,630.9,127.1,630,121.7M631.7,132.4C630,121.7,630.3,121.7,628.6,111M629.7,121.8C628.8,116.4,628.7,116.4,627.9,111.1M629.7,121.8C628.8,116.4,628.8,116.4,628,111.1M630,121.7C629.1,116.4,629.1,116.4,628.2,111M630,121.7C629.1,116.4,629.2,116.4,628.3,111M644.4,207.2C637,159,636.6,159.1,629.1,110.9M644.4,207.2C643.6,201.8,643.8,201.8,643,196.4M643,196.4C636.6,153.6,636.1,153.7,629.6,110.8M643,196.4C636.6,153.6,636.3,153.6,629.8,110.8M643,196.4C636.6,153.6,636.5,153.6,630,110.8M643,196.4C636.6,153.6,636.6,153.6,630.2,110.7M643,196.4C636.6,153.6,636.8,153.6,630.5,110.7M643,196.4C642.2,191.1,642.7,191,642,185.7M642,185.7C636.6,148.1,636.3,148.2,630.9,110.6M642,185.7C641.2,180.3,641.4,180.3,640.6,174.9M640.6,174.9C636.1,142.7,635.8,142.8,631.2,110.6M640.6,174.9C636.1,142.7,636,142.7,631.4,110.6M640.6,174.9C636.1,142.7,636.1,142.7,631.6,110.5M640.6,174.9C639.9,169.5,640.3,169.5,639.5,164.1M639.5,164.1C635.9,137.3,635.6,137.3,631.9,110.5M639.5,164.1C638.8,158.7,639,158.7,638.3,153.3M638.3,153.3C635.4,131.9,635.2,131.9,632.2,110.4M638.3,153.3C637.6,148,637.8,147.9,637.1,142.6M637.1,142.6C635,126.5,634.7,126.5,632.5,110.4M637.1,142.6C635,126.5,634.8,126.5,632.6,110.4M637.1,142.6C635,126.5,634.9,126.5,632.8,110.4M637.1,142.6C636.4,137.2,636.9,137.1,636.2,131.8M636.2,131.8C635.5,126.4,635.2,126.4,634.5,121.1M636.2,131.8C635.5,126.4,635.5,126.4,634.8,121M636.2,131.8C634.8,121,635.1,121,633.8,110.2M634.5,121.1C633.8,115.7,633.7,115.7,633,110.3M634.5,121.1C633.8,115.7,633.8,115.7,633.1,110.3M634.8,121C634.1,115.7,634.1,115.7,633.4,110.3M634.8,121C634.1,115.7,634.2,115.6,633.5,110.3M642.6,174.6C638.7,142.4,638.3,142.4,634.3,110.2M642.6,174.6C641.9,169.3,642.3,169.2,641.7,163.8M641.7,163.8C638.5,136.9,638,137,634.7,110.1M641.7,163.8C638.5,136.9,638.2,137,635,110.1M641.7,163.8C638.5,136.9,638.4,137,635.2,110.1M641.7,163.8C638.5,136.9,638.5,136.9,635.4,110M641.7,163.8C638.5,136.9,638.7,136.9,635.6,110M641.7,163.8C641,158.5,641.7,158.4,641.2,153M641.2,153C638.8,131.5,638.5,131.5,636,110M641.2,153C640.6,147.6,640.8,147.6,640.3,142.2M640.3,142.2C638.5,126,638.2,126.1,636.4,109.9M640.3,142.2C638.5,126,638.4,126.1,636.6,109.9M640.3,142.2C638.5,126,638.5,126,636.8,109.9M640.3,142.2C639.7,136.8,640.1,136.8,639.5,131.4M639.5,131.4C638.4,120.6,638.2,120.6,637.1,109.9M639.5,131.4C639,126,639.2,126,638.6,120.6M638.6,120.6C638,115.2,638,115.2,637.4,109.8M638.6,120.6C638,115.2,638.1,115.2,637.6,109.8M644.9,174.4C641.7,142,641.3,142.1,638.1,109.8M644.9,174.4C644.3,169,644.7,169,644.2,163.6M644.2,163.6C641.7,136.6,641.1,136.7,638.5,109.7M644.2,163.6C641.7,136.6,641.3,136.6,638.8,109.7M644.2,163.6C641.7,136.6,641.5,136.6,639,109.7M644.2,163.6C641.7,136.6,641.7,136.6,639.2,109.6M644.2,163.6C641.7,136.6,641.9,136.6,639.4,109.6M644.2,163.6C643.7,158.2,644.4,158.1,643.9,152.7M643.9,152.7C642.1,131.1,641.8,131.2,639.8,109.6M643.9,152.7C643.5,147.3,643.7,147.3,643.3,141.9M643.3,141.9C641.9,125.7,641.6,125.7,640.2,109.6M643.3,141.9C641.9,125.7,641.8,125.7,640.4,109.5M643.3,141.9C641.9,125.7,641.9,125.7,640.6,109.5M643.3,141.9C642.8,136.5,643.3,136.5,642.8,131.1M642.8,131.1C642,120.3,641.8,120.3,640.9,109.5M642.8,131.1C642.4,125.7,642.6,125.7,642.1,120.3M642.1,120.3C641.7,114.9,641.6,114.9,641.2,109.5M642.1,120.3C641.7,114.9,641.8,114.9,641.4,109.5M647.1,163.4C645.3,136.3,644,136.4,642,109.4M647.1,163.4C646.7,157.9,647.8,157.9,647.5,152.5M647.5,152.5C646.2,130.8,644.1,131,642.5,109.4M647.5,152.5C646.2,130.8,644.3,131,642.8,109.4M647.5,152.5C647.2,147.1,646.8,147.1,646.5,141.7M647.5,152.5C647.2,147.1,651.2,146.9,651,141.5M646.5,141.7C645.5,125.5,644.3,125.5,643.2,109.3M646.5,141.7C645.5,125.5,644.5,125.5,643.4,109.3M646.5,141.7C645.5,125.5,644.7,125.5,643.7,109.3M646.5,141.7C645.5,125.5,644.9,125.5,643.9,109.3M646.5,141.7C645.5,125.5,645.1,125.5,644.1,109.3M646.5,141.7C645.5,125.5,645.3,125.5,644.3,109.2M646.5,141.7C645.5,125.5,645.5,125.5,644.6,109.2M646.5,141.7C645.9,130.9,646.5,130.8,645.9,120M646.5,141.7C645.5,125.5,646.9,125.4,646,109.2M646.5,141.7C646.2,136.3,648.3,136.2,648.1,130.7M645.9,120C645.6,114.6,645.3,114.6,645,109.2M645.9,120C645.6,114.6,645.5,114.6,645.2,109.2M645.9,120C645.6,114.6,645.7,114.6,645.4,109.2M645.9,120C645.6,114.6,645.9,114.6,645.6,109.2M648.1,130.7C647.6,119.9,647,120,646.5,109.1M648.1,130.7C647.6,119.9,647.2,119.9,646.7,109.1M648.1,130.7C647.9,125.3,648,125.3,647.8,119.9M648.1,130.7C647.9,125.3,648.8,125.3,648.6,119.9M647.8,119.9C647.5,114.5,647.3,114.5,647,109.1M647.8,119.9C647.5,114.5,647.4,114.5,647.2,109.1M647.8,119.9C647.5,114.5,647.6,114.5,647.4,109.1M647.8,119.9C647.5,114.5,647.8,114.5,647.6,109.1M648.6,119.9C648.4,114.5,648.1,114.5,647.9,109.1M648.6,119.9C648.4,114.5,648.3,114.5,648.1,109.1M648.6,119.9C648.4,114.5,648.5,114.5,648.3,109.1M648.6,119.9C648.4,114.5,648.7,114.5,648.5,109.1M651,141.5C650.7,125.2,649.5,125.3,648.9,109M651,141.5C650.7,125.2,649.7,125.3,649.2,109M651,141.5C650.7,125.2,649.9,125.3,649.4,109M651,141.5C650.7,125.2,650.1,125.3,649.6,109M651,141.5C650.7,125.2,650.3,125.3,649.9,109M651,141.5C650.7,125.2,650.5,125.2,650.1,109M651,141.5C650.7,125.2,650.7,125.2,650.3,109M651,141.5C650.8,130.7,651.4,130.6,651.1,119.8M651,141.5C650.7,125.2,651.8,125.2,651.6,109M651,141.5C650.9,136.1,652.9,136,652.9,130.6M651.1,119.8C651,114.4,650.8,114.4,650.7,109M651.1,119.8C651,114.4,651,114.4,650.9,109M651.1,119.8C651,114.4,651.2,114.4,651.1,109M652.9,130.6C652.8,119.8,652.1,119.8,652,109M652.9,130.6C652.8,119.8,652.3,119.8,652.2,109M652.9,130.6C652.8,125.2,653,125.2,652.9,119.8M652.9,130.6C652.8,125.2,653.8,125.2,653.8,119.8M652.9,119.8C652.9,114.4,652.6,114.4,652.6,109M652.9,119.8C652.9,114.4,652.8,114.4,652.7,109M652.9,119.8C652.9,114.4,653,114.4,652.9,109M652.9,119.8C652.9,114.4,653.1,114.4,653.1,109M653.8,119.8C653.8,114.4,653.5,114.4,653.5,109M653.8,119.8C653.8,114.4,653.7,114.4,653.7,109M653.8,119.8C653.8,114.4,653.8,114.4,653.8,109M653.8,119.8C653.8,114.4,654,114.4,654,109"/>
<path fill="none" stroke="#23171b" stroke-width="6.2" stroke-linecap="round" d="M654.2,271.4h0"/>
<path fill="none" stroke="#4a41b5" stroke-width="6.2" stroke-linecap="round" d="M655.1,119.8h0M656.8,119.8h0M658.5,119.8h0M660.6,119.9h0M663.2,120h0M665.3,120.2h0M667,120.3h0M666.7,142h0M669.1,142.3h0M671.5,142.6h0M674.6,143.1h0M677.6,143.6h0M678.7,154.8h0M683.6,156h0M688.6,157.4h0M694,159.1h0M699,161h0M703.8,163.1h0M709.2,165.7h0M714.6,168.7h0M720.1,172.2h0M725,175.6h0M729.5,179.1h0M733.8,182.8h0M738.5,187.2h0M742.9,191.9h0M747.1,196.8h0M751.1,202.1h0M754.6,207.3h0M757.9,212.8h0M761.2,219.1h0M764.2,225.6h0M766.6,231.9h0M768.6,238.2h0M770.2,244.1h0M771.5,250.2h0M772.5,257.1h0M773.1,264.1h0M773.4,271.1h0M762.3,277.8h0M761.4,287h0M759.8,295.8h0M747.8,298.8h0M745.9,304.6h0M763.1,319.8h0M759.3,327.5h0M755.5,334.3h0M743.5,332.7h0M759.1,348.2h0M730.2,332.5h0M725,338.5h0M719.3,344h0M713.2,349.1h0M707.4,353.2h0M702.6,356.1h0M697,359.1h0M689.7,362.3h0M682.2,364.8h0M674.5,366.8h0M667.5,368h0M662,368.6h0M655.6,368.9h0M647.6,368.7h0M639.8,367.9h0M632,366.4h0M625.1,364.5h0M619.9,362.7h0M613.9,360.2h0M606.8,356.7h0M600.1,352.5h0M593.7,347.9h0M588.3,343.3h0M584.3,339.4h0M580,334.7h0M575.1,328.4h0M570.7,321.8h0M566.9,314.8h0M563.2,306.4h0M560.3,297.8h0M558.3,289h0M557.2,281.1h0M556.7,273.2h0M556.9,265.3h0M557.7,257.4h0M559.2,249.6h0M572.1,243.8h0M644.4,266.7h0"/>
<path fill="none" stroke="#426ff2" stroke-width="6.2" stroke-linecap="round" d="M655.1,109h0M656.9,109h0M658.8,109h0M660.6,109.1h0M661.5,109.1h0M663.3,109.2h0M664.2,109.3h0M666.1,109.4h0M667.9,109.5h0M668.1,120.4h0M668.3,131.3h0M670.9,120.7h0M670.9,131.6h0M673.8,121.1h0M673.5,132h0M676.6,121.4h0M676.2,132.3h0M677.7,132.6h0M681.1,122.2h0M679.9,133h0M685.7,112h0M680.5,144.1h0M682.7,144.6h0M692.4,113.5h0M688.7,134.9h0M688.1,146h0M699.2,115.3h0M691.3,146.9h0M693.8,147.6h0M706.4,117.6h0M700.8,138.5h0M699.6,149.6h0M713.7,120.2h0M706.7,140.8h0M704.7,151.7h0M719.9,122.8h0M707.9,153h0M710.2,154.1h0M726.8,126.1h0M718.7,146.3h0M716.4,157.3h0M734.4,130.1h0M719.7,159.1h0M722.2,160.6h0M741.6,134.5h0M725.1,162.5h0M726.9,163.7h0M740.6,146.8h0M748.3,139h0M736.9,157.5h0M732.3,167.5h0M746.8,151.3h0M754.9,143.9h0M742.2,161.5h0M736.9,171.1h0M752.1,155.6h0M760.5,148.5h0M740.1,173.9h0M741.8,175.4h0M757.8,160.6h0M766.5,154h0M752.8,170.9h0M747,180.4h0M763.8,166.6h0M772.9,160.5h0M750.1,183.7h0M751.8,185.6h0M769.3,172.7h0M778.7,167.1h0M754.6,188.9h0M756.3,190.9h0M774.6,179.3h0M784.3,174.1h0M767.8,188.2h0M760.6,196.8h0M779.6,186.2h0M789.6,181.6h0M772.1,194.4h0M764.2,202.2h0M783.8,192.6h0M794,188.5h0M766.6,206.1h0M767.9,208.5h0M787.9,199.9h0M798.3,196.4h0M779.9,208h0M771.6,215.6h0M792.1,208.3h0M802.7,205.4h0M773.6,220h0M774.7,222.7h0M795.6,216.7h0M806.4,214.5h0M776.4,227h0M777.2,229.4h0M798.4,224.4h0M809.3,222.8h0M789,230.6h0M779.3,236.3h0M800.8,232.4h0M811.7,231.4h0M790.9,237.7h0M780.9,242.5h0M802.5,239.7h0M813.5,239.2h0M781.8,246.8h0M782.3,249.4h0M804,247.8h0M815,247.9h0M793.8,252.8h0M783.4,257.2h0M805.2,256.9h0M816.1,257.7h0M783.8,261.9h0M784,264.8h0M805.8,265.8h0M816.6,267.3h0M784.2,269.6h0M784.2,272.5h0M805.8,274.8h0M816.6,276.8h0M773.2,278.1h0M772.9,281.6h0M815.7,289.2h0M772.3,287.2h0M782.6,291.9h0M792.9,295.9h0M813.7,302.6h0M770.6,297h0M780.4,302.5h0M811.3,312.8h0M810.9,314.6h0M779.1,307.4h0M757.6,303.9h0M807.7,324.7h0M776.6,315.2h0M755.4,310.1h0M804.2,333.9h0M773.6,322.8h0M772.6,325.1h0M771.5,327.6h0M799.1,345h0M769.6,331.3h0M768.6,333.2h0M767.2,335.7h0M793.6,354.9h0M765.3,339h0M764.3,340.6h0M781.6,353.8h0M789.7,361.2h0M753.1,337.9h0M760.9,345.7h0M777.6,359.6h0M777,360.5h0M767.5,355.1h0M783.5,369.8h0M748.3,344.6h0M746.3,347.1h0M736.4,342h0M775.1,380h0M742,352h0M739.8,354.3h0M730.4,348.5h0M765.9,389.5h0M735.2,358.9h0M732.8,361h0M723.9,354.4h0M755.9,398.2h0M727.8,365.2h0M725.2,367.1h0M716.9,359.8h0M745.3,406h0M713.3,362.2h0M711.6,363.3h0M737.4,411h0M708.1,365.4h0M706.3,366.4h0M729.4,415.5h0M708.2,377.7h0M705.3,379.1h0M698.5,370.3h0M717.4,421.2h0M699.4,381.7h0M696.4,382.9h0M690.4,373.6h0M705,425.8h0M690.3,385h0M687.2,386h0M681.9,376.2h0M692.3,429.4h0M680.9,387.6h0M677.8,388.3h0M673.3,378.1h0M679.3,432h0M669.1,378.8h0M667,379h0M670.1,433.2h0M662.9,379.4h0M660.9,379.6h0M660.9,433.8h0M657.8,390.6h0M654.6,390.6h0M652.2,379.8h0M647.6,433.8h0M648.1,390.5h0M644.9,390.3h0M643.4,379.2h0M634.4,432.7h0M638.5,389.6h0M635.3,389.1h0M634.7,378h0M621.4,430.6h0M628.9,387.9h0M625.8,387.2h0M626.1,376.1h0M608.6,427.4h0M622,374.9h0M620,374.3h0M599.7,424.6h0M616.1,372.9h0M614.2,372.1h0M591.1,421.2h0M606.8,380.8h0M603.8,379.4h0M606.3,368.6h0M579.1,415.6h0M598,376.5h0M595.2,375h0M598.6,364.4h0M567.6,409h0M589.7,371.6h0M587,369.8h0M591.2,359.6h0M556.7,401.5h0M581.7,366h0M579.2,364.1h0M584.2,354.2h0M546.5,393.1h0M581,351.3h0M579.5,349.9h0M539.7,386.8h0M576.6,347h0M575.1,345.5h0M533.3,380.1h0M564.7,350.2h0M562.6,347.7h0M569.5,339h0M524.9,369.9h0M558.6,342.6h0M556.7,340h0M564.3,331.9h0M517.3,359h0M553.2,334.6h0M551.5,331.9h0M559.7,324.4h0M510.7,347.6h0M548.3,326.2h0M546.9,323.3h0M555.6,316.3h0M504.2,333.9h0M543.7,316.1h0M542.5,313.1h0M551.8,306.9h0M499,319.6h0M540,305.6h0M539.1,302.5h0M549,297.2h0M495.2,304.9h0M537.3,294.8h0M536.8,291.6h0M547.1,287.5h0M493,291.9h0M535.8,285.2h0M535.5,282h0M546.1,278.7h0M491.9,278.7h0M535.1,275.5h0M535,272.3h0M545.9,269.9h0M491.8,265.5h0M535.2,265.8h0M535.4,262.6h0M546.4,261.1h0M492.8,252.3h0M536,256.2h0M536.5,253h0M547.6,252.4h0M494.9,239.3h0M537.7,246.6h0M538.4,243.5h0M549.5,243.8h0M498.1,226.4h0M529.6,234.4h0M551.1,238.1h0M562.9,237.2h0M563.8,235h0M505,207h0M545.3,223h0M546.7,220.1h0M635.4,260.6h0"/>
<path fill="none" stroke="#2f9df5" stroke-width="6.2" stroke-linecap="round" d="M669.1,109.6h0M669,120.5h0M669.8,120.6h0M672.1,109.9h0M671.8,120.8h0M672.6,120.9h0M675.2,110.3h0M674.6,121.2h0M675.5,121.3h0M678.2,110.7h0M677.4,121.6h0M678.3,121.7h0M679.1,121.8h0M680,122h0M683,111.5h0M681.9,122.3h0M682.7,133.5h0M684.4,133.9h0M690.6,113.1h0M691.3,124.4h0M690.2,135.3h0M697.4,114.8h0M694.4,136.5h0M696,137h0M704,116.8h0M698,137.6h0M704.4,128.3h0M702.3,139.1h0M711.3,119.3h0M704.3,139.8h0M710.7,130.7h0M707.8,141.2h0M717.6,121.8h0M709.7,142h0M712.3,143.2h0M713.8,143.9h0M724.5,125h0M715.7,144.8h0M723.7,136.6h0M720.5,147.2h0M732.2,128.9h0M722.4,148.2h0M725.1,149.8h0M726.8,150.8h0M739.4,133.1h0M728.6,151.9h0M731,153.4h0M732.4,154.3h0M745.8,137.2h0M746.8,137.9h0M743.3,148.7h0M738.2,158.4h0M752.5,142h0M753.4,142.8h0M749,153.1h0M743.2,162.3h0M758.2,146.6h0M759.1,147.3h0M747.3,165.8h0M748.5,166.9h0M764.3,151.9h0M765.2,152.7h0M760.4,163.2h0M754.2,172.3h0M770.8,158.3h0M771.6,159.1h0M758.1,176.4h0M759.5,177.9h0M776.8,164.8h0M777.6,165.7h0M763,182h0M764,183.3h0M781.9,171h0M773.9,178.4h0M783.2,172.7h0M776.6,181.8h0M768.8,189.6h0M787.4,178.3h0M779,185.2h0M788.6,180.1h0M781.2,188.5h0M772.8,195.4h0M791.9,185.2h0M783.2,191.6h0M793,187h0M776,200.7h0M776.8,202.1h0M796.5,192.9h0M787.4,198.9h0M797.5,194.8h0M789.6,203.1h0M780.8,209.8h0M801,201.8h0M791.6,207.3h0M801.9,203.8h0M783.5,215.7h0M784.3,217.5h0M804.9,210.8h0M795.2,215.6h0M805.7,212.8h0M786.5,223.3h0M787.1,224.8h0M808.1,219.2h0M787.8,226.8h0M808.7,221.1h0M799.4,227.5h0M789.5,232.2h0M810.7,227.8h0M790,234.2h0M811.2,229.6h0M801.5,235.1h0M791.2,238.9h0M812.7,235.5h0M791.7,240.9h0M813.1,237.4h0M792.5,244.8h0M792.8,246.4h0M814.4,244.2h0M793.1,248.5h0M814.7,246.1h0M804.5,251.4h0M794.1,254.8h0M815.8,253.9h0M794.3,256.9h0M816,255.9h0M794.7,261.1h0M794.8,263.1h0M816.5,263.5h0M794.9,265.2h0M816.6,265.4h0M795,269.4h0M795,271.4h0M816.7,273.1h0M795,273.5h0M816.7,275h0M784,278.8h0M794.6,282.2h0M816.1,285.5h0M783.6,283.7h0M783.1,288.7h0M793.4,292.9h0M814.5,297.8h0M803.7,296.9h0M803.6,297.7h0M814,300.8h0M781.2,299.3h0M791.1,304.4h0M811.8,311h0M789.6,310.4h0M789,312.3h0M809.2,320.1h0M767.5,308.4h0M786.8,318.8h0M786.3,320.4h0M806,329.5h0M765,315.2h0M783.6,327.1h0M782.8,328.9h0M801.9,339.3h0M791.7,335.5h0M781.3,332.1h0M799.9,343.3h0M779.2,336.3h0M778.4,337.8h0M796.8,349.4h0M786.8,345h0M776.7,340.9h0M794.5,353.4h0M774.5,344.6h0M773.8,345.8h0M791.3,358.6h0M790.7,359.6h0M762.1,344h0M770.2,351.2h0M787.1,364.9h0M786.4,365.9h0M785.7,366.9h0M776.5,361.2h0M775.9,361.9h0M774.4,363.9h0M756.4,351.7h0M755.1,353.4h0M762.5,361.5h0M744.6,349.1h0M766.5,373.4h0M749.6,359.8h0M748.1,361.3h0M754.8,370h0M738,356.2h0M757.8,382.2h0M742.1,367.3h0M740.5,368.7h0M746.5,377.9h0M730.9,362.7h0M748.5,390.3h0M734,374.1h0M732.3,375.4h0M737.5,385h0M723.2,368.6h0M719.8,370.9h0M718.7,371.7h0M717.4,372.5h0M714.1,374.5h0M712.8,375.2h0M711.5,375.9h0M723.6,406.3h0M712.5,387.6h0M710.6,388.6h0M713.8,399h0M703,380.2h0M712.4,411.5h0M702.9,392h0M700.9,392.8h0M703.3,403.5h0M694,383.8h0M700.8,415.8h0M692.9,395.6h0M690.9,396.2h0M692.4,407h0M684.7,386.6h0M688.9,419.1h0M682.7,398.3h0M680.6,398.7h0M681.2,409.7h0M675.2,388.7h0M671.2,389.4h0M669.8,389.6h0M668.3,389.8h0M664.5,390.2h0M663.1,390.3h0M661.6,390.4h0M659.6,423h0M657.5,401.4h0M655.4,401.4h0M653.8,412.3h0M652,390.6h0M647.2,423h0M646.9,401.2h0M644.8,401.1h0M642.4,411.8h0M642.4,390h0M634.9,421.9h0M636.4,400.2h0M634.3,399.9h0M631,410.4h0M632.8,388.7h0M622.7,419.8h0M626,398.3h0M623.9,397.9h0M619.8,408h0M623.3,386.5h0M619.4,385.4h0M618.1,385h0M616.6,384.5h0M613,383.3h0M611.6,382.8h0M610.2,382.2h0M594.5,410.9h0M601.9,390.4h0M599.9,389.6h0M593.9,398.7h0M601.5,378.3h0M583.4,405.6h0M592.3,385.8h0M590.5,384.8h0M583.8,393.4h0M593,373.7h0M572.7,399.4h0M583.3,380.4h0M581.5,379.2h0M574.1,387.3h0M584.9,368.4h0M562.6,392.3h0M574.6,374.3h0M573,373h0M564.9,380.4h0M577.2,362.4h0M574.2,359.8h0M573.1,358.8h0M572,357.8h0M569.3,355.1h0M568.3,354h0M567.2,352.9h0M540.8,372.2h0M556.2,356.8h0M554.8,355.2h0M545.5,360.9h0M561,345.7h0M533,362.6h0M549.5,348.6h0M548.3,346.9h0M538.5,351.8h0M555.3,337.9h0M526,352.5h0M543.6,339.8h0M542.5,338h0M532.4,342.1h0M550.2,329.6h0M519.8,341.8h0M538.4,330.6h0M537.5,328.7h0M527,332h0M545.7,320.7h0M513.9,328.9h0M533.4,319.5h0M532.7,317.6h0M521.9,319.9h0M541.6,310.4h0M509.1,315.6h0M529.5,308.1h0M528.9,306h0M518,307.3h0M538.4,299.7h0M505.6,301.9h0M526.6,296.3h0M526.2,294.2h0M515.3,294.5h0M536.3,289.1h0M503.6,289.7h0M525,285.8h0M524.8,283.7h0M513.8,283.1h0M535.3,279.4h0M502.6,277.4h0M524.3,275.2h0M524.2,273.2h0M513.4,271.6h0M535,269.8h0M502.7,265h0M524.4,264.7h0M524.5,262.6h0M513.8,260.2h0M535.6,260.1h0M503.7,252.7h0M525.4,254.1h0M525.7,252.1h0M515.2,248.8h0M536.9,250.5h0M505.7,240.6h0M527.2,243.7h0M527.7,241.7h0M517.5,237.6h0M539,241h0M508.7,228.6h0M519.3,231h0M540.4,235.9h0M541.2,233.5h0M552.8,233.4h0M553.7,230.9h0M515.3,210.5h0M535.7,218h0M536.6,216.1h0M527.5,210h0M626,255.2h0"/>
<path fill="none" stroke="#25c6d8" stroke-width="6.2" stroke-linecap="round" d="M670,109.7h0M670.9,109.8h0M673.1,110h0M674,110.2h0M676.1,110.4h0M677,110.6h0M679.1,110.9h0M680,111h0M680.9,111.2h0M681.8,111.3h0M683.9,111.7h0M684.3,122.8h0M684.9,122.9h0M685.6,123.1h0M686.3,123.2h0M689.4,112.8h0M693.3,113.7h0M693.7,113.8h0M694.2,113.9h0M694.6,114.1h0M692.6,124.7h0M696.2,114.5h0M696.8,125.9h0M697.5,126.1h0M698.1,126.3h0M698.8,126.5h0M702.8,116.4h0M701.3,127.3h0M707.3,117.9h0M707.7,118h0M708.2,118.2h0M708.6,118.3h0M705.6,128.8h0M710.1,118.9h0M708.1,129.7h0M714.5,120.6h0M714.9,120.7h0M711.5,131h0M716.5,121.4h0M714,132.1h0M716.2,133h0M716.8,133.3h0M717.4,133.6h0M718,133.9h0M723.4,124.4h0M720.5,135h0M727.6,126.5h0M728.1,126.7h0M728.5,126.9h0M728.9,127.1h0M729.3,127.3h0M729.7,127.5h0M725.3,137.5h0M731.1,128.3h0M727.6,138.7h0M729.7,139.9h0M730.3,140.2h0M730.9,140.6h0M731.5,140.9h0M732,141.3h0M738.4,132.5h0M734.3,142.7h0M736.3,144h0M736.9,144.3h0M737.5,144.7h0M738.1,145.1h0M744.8,136.6h0M749.1,139.5h0M749.4,139.8h0M749.8,140h0M750.2,140.3h0M744.3,149.5h0M751.5,141.3h0M755.6,144.5h0M755.9,144.7h0M749.7,153.6h0M757.2,145.8h0M753.9,157.2h0M754.4,157.6h0M754.9,158.1h0M755.5,158.5h0M763.4,151.1h0M767.1,154.6h0M767.5,154.9h0M767.8,155.3h0M768.1,155.6h0M768.5,155.9h0M768.8,156.2h0M761.6,164.4h0M769.9,157.4h0M765.4,168.4h0M765.9,168.9h0M766.4,169.4h0M766.8,169.9h0M767.3,170.4h0M776,163.8h0M770.9,174.6h0M771.3,175.1h0M771.8,175.6h0M772.2,176.1h0M781.2,170h0M782.5,171.7h0M784.9,174.9h0M785.2,175.2h0M785.4,175.6h0M785.7,176h0M777.3,182.9h0M786.7,177.3h0M787.9,179.1h0M790.1,182.4h0M790.4,182.7h0M781.6,189.2h0M791.2,184.1h0M792.4,185.9h0M785,194.7h0M785.3,195.2h0M785.7,195.8h0M786,196.4h0M795.9,191.9h0M796.9,193.7h0M798.8,197.2h0M799,197.6h0M799.2,198h0M799.4,198.5h0M799.6,198.9h0M799.8,199.3h0M790.4,204.7h0M800.5,200.7h0M801.4,202.7h0M793.1,210.5h0M793.3,211.1h0M793.6,211.7h0M793.9,212.4h0M794.1,213h0M804.5,209.6h0M805.3,211.6h0M796.5,218.9h0M796.7,219.6h0M796.9,220.2h0M797.2,220.8h0M807.7,218.1h0M798,223.4h0M809.5,223.7h0M809.7,224.1h0M809.8,224.6h0M809.9,225h0M799.7,228.8h0M810.4,226.6h0M800.5,231.3h0M811.9,232.3h0M812,232.7h0M801.7,236h0M812.4,234.3h0M802.3,238.6h0M803,242h0M803.1,242.7h0M803.2,243.4h0M803.4,244.1h0M814.2,243h0M803.8,246.7h0M815.1,248.8h0M815.2,249.3h0M815.2,249.7h0M815.3,250.2h0M815.4,250.7h0M815.4,251.1h0M804.8,253.1h0M815.6,252.7h0M805.1,255.8h0M805.4,259.3h0M805.4,260h0M805.5,260.7h0M805.5,261.3h0M805.6,262h0M816.4,262.3h0M805.7,264.7h0M805.8,268.2h0M805.8,268.9h0M805.9,269.6h0M805.9,270.3h0M805.9,271h0M816.7,271.8h0M805.9,273.6h0M794.9,277.4h0M794.8,279.5h0M816.3,282.6h0M805.5,282.5h0M816.2,284.3h0M794.4,284.7h0M794,288.2h0M793.8,290.3h0M815,295h0M804.2,294.1h0M814.7,296.6h0M814.4,298.7h0M814.2,299.6h0M792.2,299.7h0M791.7,301.8h0M812.5,308.3h0M801.8,306.5h0M812.1,309.9h0M800.2,312.4h0M800.1,313h0M799.9,313.7h0M799.7,314.3h0M799.5,315h0M809.6,319h0M777.8,311.7h0M797.3,321.8h0M797,322.5h0M796.8,323.1h0M796.6,323.7h0M806.4,328.3h0M775.1,319.2h0M793.9,330.4h0M793.7,331h0M793.4,331.7h0M793.1,332.3h0M792.9,332.9h0M802.4,338.1h0M801.5,340.1h0M791.4,336.1h0M791.1,336.7h0M800.5,342.2h0M789.2,340.7h0M788.8,341.3h0M788.5,341.9h0M788.2,342.5h0M797.3,348.4h0M796.3,350.2h0M786.5,345.6h0M786.2,346.2h0M795.2,352.3h0M784,350h0M783.6,350.5h0M783.3,351.1h0M792,357.6h0M780.3,355.8h0M770.9,350.3h0M779.4,357h0M787.8,363.9h0M785.2,367.6h0M784.6,368.4h0M783,370.5h0M765.3,358h0M781.6,372.3h0M764.1,359.5h0M780.2,374.1h0M779.9,374.4h0M771.1,368.1h0M778.9,375.7h0M753.5,355.4h0M777.5,377.3h0M768.5,371.1h0M774.5,380.7h0M757.9,366.7h0M773,382.3h0M756.6,368.2h0M771.4,384h0M771.1,384.3h0M762.8,377.3h0M770,385.5h0M746.3,363.2h0M768.5,386.9h0M760,380.1h0M765.2,390.1h0M749.8,374.9h0M763.6,391.6h0M748.4,376.2h0M761.9,393.1h0M761.5,393.4h0M753.9,385.8h0M760.3,394.5h0M738.6,370.3h0M758.7,395.9h0M750.9,388.3h0M755.2,398.7h0M741.1,382.3h0M753.4,400.1h0M739.5,383.5h0M751.6,401.5h0M751.3,401.8h0M744.2,393.5h0M749.9,402.7h0M730.3,376.9h0M748.3,403.9h0M741,395.8h0M726.2,379.7h0M737.3,398.3h0M724.5,380.8h0M740.9,408.9h0M740.5,409.1h0M722.5,382h0M719.9,383.6h0M729.9,402.9h0M718.2,384.6h0M732.9,413.6h0M732.5,413.8h0M716.1,385.8h0M728.5,415.9h0M717.9,397.1h0M726.5,417h0M716.1,397.9h0M724.5,418h0M724.1,418.2h0M718.8,408.7h0M722.6,418.9h0M708.3,389.6h0M720.7,419.7h0M715.2,410.3h0M716.5,421.5h0M707.4,401.8h0M714.5,422.4h0M705.6,402.6h0M712.4,423.2h0M711.9,423.4h0M707.4,413.5h0M710.4,423.9h0M698.5,393.7h0M708.5,424.6h0M703.7,414.8h0M704.1,426.1h0M696.7,405.7h0M702,426.8h0M694.8,406.3h0M699.8,427.4h0M699.4,427.5h0M695.7,417.3h0M697.8,428h0M688.4,396.9h0M695.8,428.5h0M691.9,418.4h0M691.4,429.6h0M685.6,408.7h0M689.2,430.1h0M683.7,409.2h0M687,430.6h0M686.5,430.7h0M683.7,420.2h0M684.9,431h0M678.1,399.2h0M682.9,431.4h0M679.8,420.9h0M673.3,400h0M675.4,421.6h0M671.3,400.3h0M674.1,432.7h0M673.7,432.8h0M669,400.6h0M665.9,400.9h0M666.7,422.6h0M663.9,401.1h0M664.9,433.6h0M664.4,433.6h0M661.6,401.2h0M659.9,433.8h0M658.3,412.2h0M657.7,433.9h0M656.4,412.3h0M655.4,433.9h0M655,433.9h0M654.2,423.1h0M653.3,433.9h0M652.8,401.4h0M651.3,433.9h0M650.3,423.1h0M646.7,433.8h0M646.9,412.1h0M644.5,433.7h0M644.9,412h0M642.2,433.5h0M641.8,433.5h0M641.9,422.6h0M640.1,433.3h0M642.3,400.9h0M638.1,433.1h0M638,422.2h0M633.5,432.6h0M635.5,411h0M631.3,432.3h0M633.5,410.8h0M629.1,432h0M628.6,431.9h0M629.7,421.1h0M627,431.7h0M631.8,399.5h0M625,431.3h0M625.8,420.4h0M620.5,430.4h0M624.2,409h0M618.3,429.9h0M622.3,408.6h0M616.1,429.4h0M615.7,429.3h0M617.6,418.6h0M614.1,428.9h0M621.4,397.3h0M612.1,428.4h0M613.7,417.6h0M616.7,395.9h0M609.4,416.3h0M614.8,395.3h0M603.5,425.9h0M603.1,425.7h0M612.6,394.6h0M609.7,393.6h0M601.2,413.6h0M607.8,392.9h0M594.8,422.7h0M594.4,422.5h0M605.6,392h0M590.2,420.8h0M598,400.6h0M588.2,419.9h0M596.2,399.8h0M586.1,419h0M585.7,418.8h0M589.7,408.7h0M584.2,418.1h0M597.6,388.5h0M582.4,417.2h0M586.1,407h0M578.3,415.1h0M587.7,395.6h0M576.3,414.1h0M586,394.6h0M574.4,413h0M574,412.8h0M578.7,403h0M572.5,411.9h0M588.3,383.5h0M570.8,410.9h0M575.3,401h0M566.9,408.5h0M577.8,389.8h0M565,407.3h0M576.2,388.7h0M563.1,406h0M562.7,405.8h0M568.3,396.4h0M561.4,404.8h0M579.4,377.8h0M559.7,403.6h0M565,394.1h0M556,400.9h0M568.4,383.2h0M554.2,399.6h0M566.9,382h0M552.5,398.2h0M552.1,397.9h0M558.4,389h0M550.8,396.8h0M571,371.3h0M549.3,395.5h0M555.3,386.5h0M567.3,368.1h0M552,383.5h0M565.8,366.7h0M542.6,389.6h0M542.3,389.3h0M564.1,365.1h0M561.9,363h0M545.7,377.5h0M560.5,361.5h0M536.1,383h0M535.8,382.7h0M558.9,359.8h0M532.7,379.4h0M548.4,364.4h0M531.2,377.7h0M547.1,362.9h0M529.8,376h0M529.5,375.6h0M537.4,368.2h0M528.4,374.4h0M553.2,353.3h0M527.2,372.8h0M534.9,365.1h0M524.4,369.2h0M541.2,355.4h0M523,367.3h0M540,353.9h0M521.7,365.5h0M521.4,365.1h0M529.9,358.3h0M520.5,363.8h0M546.9,344.8h0M519.3,362.1h0M527.7,355.1h0M516.8,358.3h0M534.7,346h0M515.6,356.4h0M533.7,344.3h0M514.5,354.4h0M514.2,354h0M523.2,347.9h0M513.4,352.6h0M541.2,335.8h0M512.4,350.8h0M521.3,344.5h0M510.2,346.8h0M529,336h0M509.2,344.8h0M528.2,334.3h0M508.2,342.8h0M508,342.4h0M517.4,337h0M507.3,340.9h0M536.4,326.4h0M506.4,339h0M525.2,328.1h0M503.8,333.1h0M523.6,324.1h0M503,331h0M522.8,322.2h0M502.2,328.9h0M502,328.4h0M511.9,324h0M501.4,326.9h0M531.8,315.2h0M500.8,325h0M520.5,315.8h0M498.7,318.8h0M519.2,311.6h0M498.1,316.6h0M518.7,309.8h0M497.5,314.4h0M497.4,314h0M507.6,310.5h0M496.9,312.4h0M528.2,303.6h0M496.4,310.4h0M517,303.1h0M495,304h0M516.1,298.9h0M494.6,301.8h0M515.7,297h0M494.2,299.6h0M494.1,299.2h0M504.6,296.6h0M493.8,297.5h0M525.8,291.7h0M493.5,295.5h0M504,292.7h0M492.9,291h0M514.3,287.5h0M492.6,288.8h0M514.1,285.6h0M492.4,286.5h0M492.4,286.1h0M503.1,284.4h0M492.2,284.4h0M524.6,281.2h0M492.1,282.4h0M502.8,280.5h0M491.8,277.8h0M513.4,276.1h0M491.8,275.6h0M513.4,274.2h0M491.7,273.3h0M491.7,272.8h0M502.5,272.1h0M491.7,271.2h0M524.2,270.6h0M491.7,269.2h0M502.6,268.1h0M491.8,264.6h0M513.5,264.7h0M492,262.3h0M513.6,262.7h0M492.1,260.1h0M492.1,259.6h0M503,259.7h0M492.3,258h0M524.7,260h0M492.4,255.9h0M503.3,255.8h0M492.9,251.4h0M514.5,253.2h0M493.2,249.2h0M514.8,251.3h0M493.6,246.9h0M493.6,246.5h0M504.4,247.5h0M493.9,244.9h0M526.1,249.5h0M494.2,242.8h0M505.1,243.6h0M495.1,238.4h0M516.5,241.9h0M495.6,236.2h0M516.9,240h0M496.1,234h0M496.2,233.5h0M506.9,235.4h0M496.6,231.9h0M528.3,239.2h0M497.1,229.9h0M507.9,231.5h0M498.3,225.5h0M508.9,227.9h0M530,233.2h0M509.6,225.7h0M499.5,221.6h0M530.7,231h0M531.1,229.7h0M531.6,228.1h0M501.7,215.4h0M501.8,214.9h0M543,228.6h0M503.1,211.6h0M503.3,211.1h0M544.1,225.8h0M505.4,206.1h0M525.6,214.1h0M506.3,204.1h0M526.4,212.3h0M507.3,202h0M507.5,201.6h0M517.5,205.7h0M508.2,200.1h0M537.7,213.8h0M509.1,198.3h0M619.5,245.5h0"/>
<path fill="none" stroke="#2ee5ae" stroke-width="6.2" stroke-linecap="round" d="M686.4,112.2h0M687.1,112.3h0M687.8,112.5h0M688.6,112.6h0M695.3,114.2h0M699.9,115.5h0M700.6,115.7h0M701.3,115.9h0M702,116.1h0M704.7,117h0M709.3,118.6h0M712,119.6h0M715.6,121h0M718.3,122.1h0M720.6,123.1h0M721.3,123.4h0M721.9,123.7h0M722.6,124h0M725.2,125.3h0M730.3,127.9h0M732.8,129.2h0M735.1,130.5h0M735.7,130.9h0M736.3,131.2h0M737,131.6h0M737.6,132h0M740,133.5h0M742.2,134.8h0M742.8,135.2h0M743.4,135.6h0M744,136h0M750.8,140.7h0M756.5,145.2h0M761,149h0M761.6,149.5h0M762.1,150h0M762.7,150.5h0M769.3,156.7h0M773.4,161h0M773.9,161.5h0M774.4,162.1h0M774.9,162.6h0M775.4,163.2h0M779.2,167.6h0M779.7,168.2h0M780.1,168.8h0M780.6,169.3h0M786.1,176.6h0M790.7,183.4h0M794.3,189.2h0M794.7,189.8h0M795.1,190.4h0M795.4,191.1h0M800.1,199.9h0M803,206.1h0M803.3,206.8h0M803.6,207.5h0M803.9,208.1h0M804.1,208.8h0M806.6,215.2h0M806.9,215.8h0M807.1,216.5h0M807.4,217.2h0M808.3,219.9h0M810.1,225.7h0M810.9,228.5h0M812.2,233.5h0M812.8,236.2h0M813.6,239.9h0M813.8,240.7h0M813.9,241.4h0M814,242.1h0M814.5,244.9h0M815.5,251.8h0M815.8,254.7h0M816.2,258.4h0M816.2,259.2h0M816.3,259.9h0M816.3,260.6h0M816.4,261.4h0M816.5,264.2h0M816.7,268h0M816.7,268.7h0M816.7,269.5h0M816.7,270.2h0M816.7,270.9h0M816.7,273.8h0M805.8,277h0M805.7,277.6h0M805.7,278.2h0M805.7,278.7h0M805.7,279.3h0M805.6,279.9h0M805.6,280.4h0M805.6,281h0M816.3,283.3h0M805.3,285.1h0M805.2,285.7h0M815.9,287.4h0M804.9,288.6h0M804.8,289.2h0M804.8,289.7h0M804.7,290.3h0M804.6,290.9h0M804.5,291.4h0M804.5,292h0M804.4,292.6h0M814.9,295.7h0M802.9,301.1h0M802.8,301.6h0M802.7,302.2h0M802.6,302.8h0M802.5,303.3h0M802.4,303.9h0M802.2,304.4h0M802.1,305h0M812.3,309h0M810.7,315.3h0M810.5,316h0M810.3,316.7h0M810.1,317.4h0M809.9,318.1h0M798.7,317.4h0M788.1,315h0M808.3,323h0M807.5,325.4h0M807.2,326.1h0M807,326.8h0M806.7,327.5h0M795.7,326.1h0M785.2,323.1h0M804.9,332.3h0M803.9,334.6h0M803.6,335.3h0M803.3,336h0M803.1,336.6h0M802.8,337.3h0M801.2,340.7h0M800.9,341.4h0M798.8,345.6h0M798.5,346.3h0M798.1,346.9h0M797.8,347.6h0M796,350.9h0M795.6,351.5h0M793.2,355.6h0M792.9,356.2h0M792.5,356.8h0M789.3,361.8h0M779.9,356.3h0M788.4,363.1h0M774.1,364.4h0M782.2,371.6h0M772.8,366h0M780.8,373.4h0M779.4,375h0M761.8,362.3h0M777.1,377.8h0M776.8,378.1h0M776.6,378.4h0M776.3,378.6h0M766.1,373.8h0M773.6,381.7h0M764.7,375.4h0M772.1,383.3h0M770.6,384.8h0M754,370.8h0M768,387.5h0M767.7,387.7h0M767.5,388h0M767.2,388.2h0M757.4,382.6h0M764.2,391h0M755.9,384h0M762.6,392.5h0M761,393.9h0M745.6,378.6h0M758.2,396.3h0M757.9,396.6h0M757.6,396.8h0M757.3,397h0M748,390.6h0M754.2,399.6h0M746.4,391.9h0M752.4,400.9h0M750.7,402.2h0M736.6,385.7h0M747.7,404.4h0M747.4,404.6h0M747.1,404.8h0M746.8,405h0M732.5,388.5h0M737.9,398h0M743.2,407.4h0M730.7,389.7h0M741.7,408.4h0M734.3,400.3h0M727.9,391.4h0M725.7,392.8h0M730.5,402.5h0M735.3,412.3h0M723.9,393.8h0M733.7,413.2h0M726.8,404.6h0M721,395.5h0M723.1,406.6h0M727.3,416.6h0M721.2,407.5h0M725.3,417.6h0M723.4,418.5h0M712.8,399.5h0M720.1,420h0M719.7,420.1h0M719.4,420.3h0M719.1,420.4h0M711.9,411.7h0M715.3,422h0M709.9,412.5h0M713.2,422.9h0M711.2,423.6h0M702.2,403.8h0M707.8,424.9h0M707.4,425h0M707.1,425.1h0M706.7,425.2h0M700.3,416h0M702.9,426.5h0M698.3,416.6h0M700.7,427.2h0M698.7,427.7h0M691.3,407.3h0M695.1,428.7h0M694.8,428.8h0M694.4,428.9h0M694.1,429h0M688.4,419.2h0M690.1,429.9h0M686.3,419.7h0M687.9,430.4h0M685.8,430.8h0M680.1,409.9h0M682.2,431.5h0M681.8,431.6h0M681.5,431.6h0M681.1,431.7h0M675.3,410.7h0M676,421.5h0M676.9,432.4h0M673.1,411h0M675,432.6h0M671.8,422.1h0M669.8,411.4h0M667.3,411.7h0M667.4,422.5h0M667.6,433.4h0M665.1,411.9h0M665.8,433.5h0M663.2,422.9h0M661.8,412.1h0M659,423h0M658.6,433.9h0M656.9,423.1h0M656.3,433.9h0M654.2,433.9h0M652.7,412.3h0M650.6,433.9h0M650.2,433.9h0M649.8,433.9h0M649.5,433.9h0M646.6,422.9h0M645.4,433.7h0M644.5,422.8h0M643.1,433.6h0M641,433.4h0M641.3,411.7h0M637.4,433.1h0M637,433h0M636.6,433h0M636.3,433h0M634.4,421.8h0M632.2,432.5h0M632.3,421.5h0M630,432.1h0M627.9,431.8h0M629.9,410.2h0M624.3,431.2h0M623.9,431.1h0M623.5,431h0M623.2,431h0M622.2,419.7h0M619.2,430.1h0M620.1,419.2h0M617,429.6h0M614.9,429.1h0M618.7,407.7h0M611.4,428.2h0M611,428.1h0M610.7,428h0M610.3,427.9h0M614,406.4h0M610,416.5h0M606.2,426.7h0M611.9,405.8h0M604.4,426.1h0M606,415.2h0M608.7,404.7h0M606.3,403.9h0M601.8,413.8h0M597.4,423.7h0M604.3,403.2h0M595.7,423h0M597.9,412.3h0M601.2,401.9h0M594,410.7h0M589,420.3h0M592.1,409.8h0M587,419.4h0M585,418.5h0M592.9,398.2h0M581.7,416.9h0M581.4,416.7h0M581.1,416.6h0M580.7,416.4h0M582.9,405.3h0M577.1,414.5h0M581,404.3h0M575.1,413.4h0M573.3,412.4h0M582.8,392.8h0M570.1,410.5h0M569.8,410.3h0M569.5,410.1h0M569.2,409.9h0M572.2,399h0M565.7,407.8h0M570.5,397.9h0M563.9,406.5h0M562.1,405.3h0M573.2,386.6h0M559.1,403.2h0M558.8,403h0M558.5,402.8h0M558.2,402.6h0M562.1,392h0M555,400.1h0M560.4,390.7h0M553.2,398.7h0M551.5,397.4h0M564.1,379.7h0M548.7,395.1h0M548.4,394.8h0M548.1,394.6h0M547.9,394.3h0M560.3,376.4h0M552.5,383.9h0M544.7,391.5h0M558.7,375h0M543.3,390.2h0M549.3,381h0M556.3,372.7h0M554.5,370.9h0M546.2,377.9h0M538,385h0M553,369.4h0M536.7,383.7h0M543.3,374.9h0M550.7,367h0M540.4,371.8h0M531.8,378.4h0M539.1,370.2h0M530.4,376.7h0M529,375.1h0M544.8,360.1h0M526.7,372.2h0M526.5,371.9h0M526.2,371.6h0M526,371.3h0M532.7,362.2h0M523.5,368.1h0M531.4,360.5h0M522.2,366.3h0M521,364.5h0M537.9,350.9h0M518.9,361.5h0M518.7,361.2h0M518.5,360.9h0M518.3,360.6h0M525.7,352h0M516.1,357.1h0M524.6,350.2h0M514.9,355.2h0M513.9,353.4h0M531.8,341.2h0M512.1,350.2h0M511.9,349.9h0M511.7,349.5h0M511.5,349.2h0M519.6,341.3h0M509.6,345.6h0M518.6,339.4h0M508.6,343.6h0M507.7,341.7h0M526.6,331h0M515.9,333.6h0M515.3,332.3h0M504.9,335.6h0M513.6,328.4h0M503.3,331.8h0M512.9,326.5h0M502.5,329.7h0M501.8,327.7h0M521.6,318.8h0M510.7,320.4h0M510.2,319.1h0M499.6,321.4h0M508.9,315.1h0M498.4,317.5h0M508.3,313h0M497.7,315.3h0M497.2,313.3h0M517.7,306.2h0M506.7,306.8h0M506.4,305.5h0M495.6,306.7h0M505.5,301.3h0M494.7,302.7h0M505.1,299.3h0M494.3,300.5h0M494,298.4h0M515.1,293.4h0M493.4,294.8h0M493.3,294.4h0M493.3,294.1h0M493.2,293.7h0M503.6,289.1h0M492.7,289.7h0M503.3,287h0M492.5,287.4h0M492.3,285.3h0M513.8,282h0M492,281.6h0M492,281.3h0M492,280.9h0M492,280.5h0M502.6,276.8h0M491.8,276.5h0M502.6,274.7h0M491.7,274.2h0M491.7,272.1h0M513.4,270.5h0M491.7,268.4h0M491.7,268.1h0M491.7,267.7h0M491.8,267.3h0M502.7,264.5h0M491.9,263.2h0M502.8,262.4h0M492,261h0M492.2,258.9h0M513.9,259.1h0M492.5,255.2h0M492.5,254.9h0M492.6,254.5h0M492.6,254.1h0M503.8,252.2h0M493.1,250.1h0M504,250.1h0M493.4,247.8h0M493.7,245.8h0M515.4,247.7h0M494.4,242.1h0M494.4,241.8h0M494.5,241.4h0M494.6,241h0M505.8,240h0M495.4,237h0M506.3,237.9h0M495.9,234.8h0M496.4,232.8h0M517.8,236.5h0M497.3,229.2h0M497.4,228.9h0M497.5,228.5h0M497.6,228.2h0M498.5,224.8h0M519.5,230.4h0M509.4,226.4h0M499.3,222.5h0M520.4,227.6h0M520.7,226.7h0M500.5,218.8h0M510.9,221.8h0M521.4,224.5h0M501.4,216.2h0M532.6,225.4h0M502.7,212.8h0M502.8,212.4h0M533.8,222.3h0M504.2,209h0M504.3,208.7h0M515.6,210h0M505.9,204.9h0M516.4,208h0M506.9,202.9h0M507.8,201h0M528,209h0M509.4,197.6h0M509.6,197.3h0M509.8,197h0M509.9,196.7h0M510.1,196.3h0M520.2,200.5h0M615.1,233.9h0M647.1,163.4h0"/>
<path fill="none" stroke="#4df884" stroke-width="6.2" stroke-linecap="round" d="M816.6,277.4h0M816.6,278h0M816.5,278.7h0M816.5,279.3h0M816.5,279.9h0M816.4,280.5h0M816.4,281.1h0M816.4,281.7h0M816,286.1h0M816,286.7h0M815.7,289.8h0M815.6,290.4h0M815.5,291h0M815.4,291.7h0M815.4,292.3h0M815.3,292.9h0M815.2,293.5h0M815.1,294.1h0M813.6,303.2h0M813.4,303.8h0M813.3,304.4h0M813.2,305h0M813.1,305.6h0M812.9,306.2h0M812.8,306.8h0M812.7,307.4h0M809.1,320.7h0M798.6,317.9h0M798.4,318.4h0M808.5,322.3h0M805.8,330h0M795.5,326.6h0M795.3,327h0M805.2,331.6h0M788.9,362.3h0M788.8,362.5h0M782.6,371h0M781.2,372.8h0M770.2,369.1h0M778.1,376.6h0M774.1,381.1h0M772.6,382.8h0M761.9,378.2h0M769.2,386.3h0M764.8,390.5h0M763.1,392h0M752.9,386.6h0M759.4,395.3h0M754.7,399.1h0M752.9,400.5h0M743.2,394.3h0M749,403.4h0M738.8,397.3h0M744.3,406.7h0M743.8,407h0M736.9,398.6h0M742.3,408h0M740,409.5h0M733.8,400.5h0M739,410.1h0M731.5,402h0M736.5,411.6h0M735.9,411.9h0M729.5,403.1h0M734.3,412.8h0M732,414.1h0M726.4,404.9h0M731,414.7h0M728,416.2h0M726,417.2h0M717.6,409.2h0M721.6,419.3h0M716,421.7h0M713.9,422.6h0M706.2,413.9h0M709.3,424.3h0M703.6,426.3h0M701.4,426.9h0M694.4,417.7h0M696.7,428.3h0M690.8,429.8h0M688.6,430.3h0M682.4,420.5h0M683.8,431.2h0M677.2,421.4h0M678.2,432.2h0M677.6,432.3h0M674.9,421.7h0M675.7,432.5h0M673,432.9h0M671.3,422.1h0M671.9,433h0M668.6,422.4h0M669,433.3h0M668.4,433.3h0M666.3,422.6h0M666.5,433.5h0M663.8,433.7h0M662.7,422.9h0M662.7,433.7h0M659.3,433.9h0M657.1,433.9h0M652.9,423.1h0M652.2,433.9h0M646.1,433.7h0M643.9,433.6h0M640.6,422.5h0M639,433.2h0M632.9,432.6h0M630.7,432.2h0M628.3,420.9h0M625.9,431.5h0M619.9,430.3h0M617.7,429.8h0M616.3,418.3h0M613,428.6h0M611.1,416.9h0M607.5,427.1h0M606.9,426.9h0M608.9,416.2h0M605.1,426.4h0M602.5,425.5h0M605.5,415.1h0M601.5,425.2h0M602.9,414.2h0M598.7,424.2h0M598.1,424h0M600.7,413.4h0M596.4,423.3h0M593.8,422.3h0M597.4,412.1h0M592.8,421.9h0M589.7,420.6h0M587.6,419.7h0M588.4,408.1h0M583.2,417.6h0M577.8,414.9h0M575.8,413.8h0M577.5,402.3h0M571.5,411.4h0M566.4,408.2h0M564.5,406.9h0M567.2,395.7h0M560.4,404.2h0M555.5,400.6h0M553.8,399.2h0M557.3,388.2h0M550,396.1h0M553.3,384.7h0M545.7,392.4h0M545.2,392h0M551.6,383.1h0M543.8,390.7h0M541.8,388.9h0M549,380.7h0M541,388.1h0M547,378.8h0M538.9,386h0M538.5,385.6h0M545.4,377.1h0M537.2,384.2h0M535.3,382.3h0M542.9,374.5h0M534.6,381.4h0M532.3,378.9h0M530.8,377.2h0M536.5,367.1h0M527.7,373.5h0M524,368.7h0M522.6,366.8h0M529.1,357.2h0M519.8,362.9h0M516.5,357.8h0M515.3,355.8h0M522.6,346.8h0M512.9,351.6h0M509.9,346.3h0M508.9,344.3h0M516.9,335.8h0M506.8,339.9h0M506.2,338.5h0M506,338.2h0M505.9,337.9h0M505.8,337.6h0M505.5,337.1h0M505.4,336.8h0M505.3,336.5h0M505.2,336.3h0M503.6,332.5h0M502.8,330.4h0M511.5,322.7h0M501.1,325.8h0M500.6,324.4h0M500.5,324.1h0M500.4,323.8h0M500.3,323.5h0M500.1,322.9h0M500,322.6h0M499.9,322.4h0M499.8,322.1h0M498.6,318.2h0M497.9,316h0M507.3,309.2h0M496.7,311.3h0M496.3,309.8h0M496.2,309.5h0M496.2,309.2h0M496.1,308.9h0M495.9,308.3h0M495.9,308h0M495.8,307.7h0M495.7,307.4h0M494.9,303.5h0M494.5,301.2h0M504.4,295.3h0M493.6,296.4h0M492.8,290.4h0M492.6,288.1h0M503,283.1h0M492.1,283.3h0M491.8,277.2h0M491.7,274.9h0M502.5,270.7h0M491.7,270.1h0M491.9,264h0M492,261.7h0M503.1,258.4h0M492.4,256.9h0M493,250.8h0M493.3,248.6h0M504.7,246.2h0M494.1,243.7h0M495.2,237.8h0M495.7,235.6h0M507.2,234.1h0M496.9,230.8h0M509.1,227.5h0M498.9,223.7h0M499,223.2h0M510,224.5h0M510.2,224h0M510.3,223.5h0M500.2,219.5h0M500.7,218.3h0M511,221.3h0M501,217.2h0M501.1,216.9h0M522.4,221.9h0M502.4,213.4h0M523.7,218.6h0M503.9,209.7h0M505.7,205.6h0M506.6,203.5h0M518.1,204.5h0M508.7,199.1h0M510.4,195.8h0M510.5,195.5h0M510.7,195.3h0M510.8,195h0M511.1,194.5h0M511.2,194.2h0M511.4,193.9h0M511.5,193.7h0M511.7,193.4h0M511.8,193.1h0M512,192.9h0M512.1,192.6h0M512.3,192.3h0M512.4,192.1h0M512.6,191.8h0M512.7,191.5h0M512.9,191.3h0M513,191h0M513.2,190.7h0M513.3,190.5h0M513.5,190.2h0M513.6,189.9h0M513.8,189.7h0M513.9,189.4h0M514.1,189.2h0M514.2,188.9h0M514.4,188.6h0M514.5,188.4h0M514.7,188.1h0M514.9,187.8h0M515,187.6h0M515.2,187.3h0M515.3,187.1h0M515.5,186.8h0M515.6,186.5h0M515.8,186.3h0M516,186h0M516.1,185.8h0M516.3,185.5h0M516.5,185.2h0M571.9,219.2h0M573.1,217.3h0M583.3,221.6h0M584.6,219.8h0M585.9,218.1h0M587.3,216.4h0M588.7,214.7h0M590.1,213.1h0M591.6,211.5h0M593.1,209.9h0M594.7,208.4h0M596.3,206.9h0M598,205.5h0M599.6,204.1h0M594.7,194.2h0M596.6,192.8h0M598.4,191.5h0M600.3,190.2h0M602.3,188.9h0M604.2,187.7h0M611.5,196h0M613.4,195h0M615.4,194h0M617.3,193h0M619.3,192.1h0M621.3,191.3h0M623.4,190.5h0M629,199.9h0M631.2,199.2h0M633.4,198.5h0M638.2,208.4h0M640.3,208h0M642.3,207.5h0M644.4,207.2h0M642.6,174.6h0M644.9,174.4h0M642,109.4h0M647.5,152.5h0"/>
<path fill="none" stroke="#7bfe5f" stroke-width="6.2" stroke-linecap="round" d="M808.9,321.2h0M808.7,321.7h0M805.6,330.5h0M805.4,331h0M778.5,376.1h0M769.6,385.9h0M759.9,394.9h0M749.5,403.1h0M744.8,406.3h0M742.8,407.7h0M739.5,409.7h0M737,411.3h0M734.9,412.5h0M731.5,414.4h0M722.1,419.1h0M709.9,424.1h0M697.3,428.1h0M684.4,431.1h0M678.8,432.1h0M676.3,432.4h0M672.5,432.9h0M669.6,433.2h0M667.1,433.4h0M663.3,433.7h0M652.8,433.9h0M639.6,433.3h0M626.5,431.6h0M613.6,428.8h0M608.1,427.3h0M605.7,426.5h0M602,425.4h0M599.2,424.4h0M596.9,423.5h0M593.3,422.1h0M583.8,417.9h0M572.1,411.7h0M560.9,404.5h0M550.4,396.5h0M546.1,392.8h0M544.3,391.1h0M541.5,388.5h0M539.4,386.4h0M537.6,384.7h0M535,381.9h0M528.1,374h0M520.2,363.4h0M513.2,352.2h0M507.1,340.4h0M501.3,326.4h0M496.8,311.9h0M493.7,297h0M492.2,283.9h0M491.7,270.7h0M492.3,257.5h0M494,244.3h0M496.7,231.4h0M498.7,224.3h0M499.7,221.1h0M499.9,220.6h0M500,220.1h0M500.8,217.8h0M512.2,218.3h0M502.2,214h0M513.5,214.8h0M503.7,210.2h0M508.4,199.7h0M516.7,184.8h0M563,213.1h0M518.8,181.6h0M564.4,210.9h0M521,178.4h0M574.6,215.1h0M523.3,175.1h0M576.1,213.1h0M525.8,171.8h0M577.6,211.2h0M528.4,168.6h0M579.1,209.2h0M531,165.5h0M580.7,207.4h0M533.7,162.4h0M582.3,205.5h0M536.5,159.4h0M584,203.8h0M539.3,156.5h0M585.8,202h0M542.3,153.7h0M587.5,200.3h0M545.3,150.9h0M589.3,198.7h0M548.3,148.2h0M591.2,197.1h0M551.5,145.6h0M593.1,195.5h0M554.7,143h0M588.4,185.4h0M557.7,140.7h0M590.5,183.8h0M560.8,138.5h0M592.5,182.4h0M564,136.3h0M594.7,180.9h0M567.2,134.2h0M596.8,179.6h0M570.4,132.2h0M599,178.2h0M573.7,130.3h0M606.5,186.4h0M577.3,128.3h0M608.6,185.2h0M580.9,126.4h0M610.8,184.1h0M584.6,124.6h0M613,183.1h0M588.3,122.9h0M615.3,182.1h0M592.1,121.3h0M617.5,181.1h0M595.9,119.8h0M619.8,180.2h0M599.7,118.4h0M625.7,189.6h0M604.3,116.8h0M628.2,188.8h0M609,115.4h0M630.7,188h0M613.8,114.1h0M635.8,197.9h0M618.8,112.8h0M638.2,197.3h0M624,111.8h0M640.6,196.8h0M629.1,110.9h0M643,196.4h0M634.3,110.2h0M641.7,163.8h0M638.1,109.8h0M644.2,163.6h0M642.5,109.4h0M642.8,109.4h0M646.5,141.7h0M651,141.5h0"/>
<path fill="none" stroke="#aff444" stroke-width="6.2" stroke-linecap="round" d="M502,214.5h0M503.5,210.7h0M517,184.4h0M517.1,184.2h0M517.2,184h0M517.3,183.8h0M517.5,183.6h0M554.2,206.6h0M519.1,181.2h0M519.2,181h0M519.3,180.8h0M519.4,180.6h0M519.6,180.5h0M555.8,204.3h0M521.2,178.1h0M521.3,177.9h0M521.5,177.7h0M521.6,177.5h0M521.7,177.3h0M566.2,208.3h0M523.6,174.7h0M523.7,174.6h0M523.9,174.4h0M524,174.2h0M524.2,174h0M567.8,206.1h0M526.1,171.5h0M526.2,171.3h0M526.4,171.1h0M526.5,170.9h0M526.6,170.8h0M569.5,203.9h0M528.6,168.3h0M528.8,168.1h0M528.9,167.9h0M529.1,167.8h0M529.2,167.6h0M571.2,201.8h0M531.3,165.2h0M531.4,165h0M531.6,164.8h0M531.7,164.6h0M531.9,164.5h0M573,199.7h0M534,162.1h0M534.1,161.9h0M534.3,161.8h0M534.5,161.6h0M534.6,161.4h0M574.8,197.7h0M536.8,159.1h0M536.9,158.9h0M537.1,158.8h0M537.3,158.6h0M537.4,158.5h0M576.7,195.7h0M539.6,156.2h0M539.8,156h0M540,155.9h0M540.1,155.7h0M540.3,155.6h0M578.6,193.8h0M542.6,153.3h0M542.8,153.2h0M542.9,153h0M543.1,152.9h0M543.3,152.7h0M580.6,191.9h0M545.6,150.6h0M545.8,150.4h0M545.9,150.3h0M546.1,150.1h0M546.3,150h0M582.6,190.1h0M548.7,147.9h0M548.8,147.7h0M549,147.6h0M549.2,147.4h0M549.4,147.3h0M584.7,188.3h0M551.8,145.3h0M552,145.1h0M552.2,145h0M552.3,144.8h0M552.5,144.7h0M586.8,186.6h0M555,142.7h0M555.2,142.6h0M555.4,142.4h0M555.6,142.3h0M555.7,142.2h0M582.4,176.3h0M558.1,140.4h0M558.3,140.3h0M558.4,140.2h0M558.6,140h0M558.8,139.9h0M584.7,174.6h0M561.2,138.2h0M561.4,138.1h0M561.6,137.9h0M561.7,137.8h0M561.9,137.7h0M587,173h0M564.3,136.1h0M564.5,135.9h0M564.7,135.8h0M564.9,135.7h0M565.1,135.6h0M589.3,171.5h0M567.5,134h0M567.7,133.9h0M567.9,133.7h0M568.1,133.6h0M568.3,133.5h0M591.7,170h0M570.8,132h0M571,131.9h0M571.2,131.7h0M571.4,131.6h0M571.6,131.5h0M594.1,168.5h0M574.1,130.1h0M574.3,129.9h0M574.5,129.8h0M574.7,129.7h0M574.9,129.6h0M601.8,176.6h0M577.7,128.1h0M577.9,128h0M578.1,127.9h0M578.3,127.8h0M578.5,127.7h0M604.2,175.4h0M581.3,126.2h0M581.5,126.1h0M581.7,126h0M581.9,125.9h0M582.1,125.8h0M606.6,174.1h0M585,124.4h0M585.2,124.3h0M585.4,124.2h0M585.6,124.1h0M585.8,124h0M609.1,173h0M588.7,122.7h0M588.9,122.6h0M589.1,122.5h0M589.4,122.5h0M589.6,122.4h0M611.6,171.9h0M592.5,121.1h0M592.7,121h0M592.9,121h0M593.1,120.9h0M593.3,120.8h0M614.1,170.8h0M596.3,119.6h0M596.5,119.5h0M596.7,119.5h0M596.9,119.4h0M597.1,119.3h0M616.6,169.8h0M600.1,118.2h0M600.3,118.1h0M600.6,118.1h0M600.8,118h0M601,117.9h0M622.7,179.2h0M604.8,116.6h0M605,116.6h0M605.2,116.5h0M605.4,116.4h0M605.7,116.4h0M625.5,178.3h0M609.5,115.2h0M609.7,115.2h0M609.9,115.1h0M610.1,115h0M610.4,115h0M628.3,177.4h0M614.2,113.9h0M614.4,113.9h0M614.7,113.8h0M614.9,113.8h0M615.1,113.7h0M633.7,187.2h0M619.3,112.7h0M619.5,112.7h0M619.7,112.6h0M620,112.6h0M620.2,112.6h0M636.5,186.6h0M624.4,111.7h0M624.6,111.7h0M624.9,111.6h0M625.1,111.6h0M625.3,111.5h0M639.2,186.1h0M629.6,110.8h0M629.8,110.8h0M630,110.8h0M630.2,110.7h0M630.5,110.7h0M642,185.7h0M634.7,110.1h0M635,110.1h0M635.2,110.1h0M635.4,110h0M635.6,110h0M641.2,153h0M638.5,109.7h0M638.8,109.7h0M639,109.7h0M639.2,109.6h0M639.4,109.6h0M643.9,152.7h0M643.2,109.3h0M643.4,109.3h0M643.7,109.3h0M643.9,109.3h0M644.1,109.3h0M644.3,109.2h0M644.6,109.2h0M645.9,120h0M646,109.2h0M648.1,130.7h0M648.9,109h0M649.2,109h0M649.4,109h0M649.6,109h0M649.9,109h0M650.1,109h0M650.3,109h0M651.1,119.8h0M651.6,109h0M652.9,130.6h0"/>
<path fill="none" stroke="#dedd32" stroke-width="6.2" stroke-linecap="round" d="M517.7,183.3h0M545.3,200.4h0M519.8,180.1h0M547,197.9h0M522,177h0M557.6,201.7h0M524.4,173.7h0M559.3,199.3h0M526.9,170.4h0M561.2,197h0M529.5,167.3h0M563.1,194.6h0M532.1,164.2h0M565.1,192.4h0M534.9,161.1h0M567.1,190.2h0M537.7,158.2h0M569.1,188h0M540.6,155.3h0M571.3,185.9h0M543.5,152.4h0M573.5,183.8h0M546.6,149.7h0M575.7,181.8h0M549.7,147h0M578,179.9h0M552.8,144.4h0M580.3,178h0M556.1,141.9h0M576.2,167.5h0M559.1,139.7h0M578.6,165.7h0M562.3,137.5h0M581.1,163.9h0M565.4,135.3h0M583.7,162.2h0M568.7,133.3h0M586.3,160.6h0M571.9,131.3h0M588.9,159h0M575.3,129.4h0M596.8,167h0M578.9,127.5h0M599.4,165.6h0M582.5,125.6h0M602.1,164.3h0M586.2,123.9h0M604.8,163h0M589.9,122.2h0M607.6,161.8h0M593.7,120.6h0M610.3,160.6h0M597.5,119.2h0M613.1,159.6h0M601.4,117.8h0M619.5,168.8h0M606,116.3h0M622.6,167.8h0M610.7,114.9h0M625.7,166.9h0M615.5,113.6h0M631.4,176.7h0M620.6,112.5h0M634.5,176h0M625.7,111.5h0M637.6,175.4h0M630.9,110.6h0M640.6,174.9h0M636,110h0M640.3,142.2h0M639.8,109.6h0M643.3,141.9h0M645,109.2h0M645.2,109.2h0M645.4,109.2h0M645.6,109.2h0M646.5,109.1h0M646.7,109.1h0M647.8,119.9h0M648.6,119.9h0M650.7,109h0M650.9,109h0M651.1,109h0M652,109h0M652.2,109h0M652.9,119.8h0M653.8,119.8h0"/>
<path fill="none" stroke="#feb927" stroke-width="6.2" stroke-linecap="round" d="M517.9,183h0M518,182.8h0M518.1,182.7h0M536.5,194.1h0M520,179.8h0M520.1,179.7h0M520.2,179.5h0M538.3,191.4h0M522.2,176.7h0M522.3,176.5h0M522.4,176.4h0M549,195h0M524.6,173.4h0M524.7,173.2h0M524.8,173.1h0M551,192.4h0M527.1,170.2h0M527.2,170h0M527.4,169.9h0M553,189.8h0M529.7,167h0M529.8,166.9h0M530,166.7h0M555.1,187.3h0M532.4,163.9h0M532.5,163.8h0M532.6,163.6h0M557.2,184.8h0M535.1,160.9h0M535.3,160.7h0M535.4,160.6h0M559.5,182.4h0M538,157.9h0M538.1,157.8h0M538.2,157.6h0M561.7,180.1h0M540.8,155h0M541,154.9h0M541.1,154.8h0M564.1,177.8h0M543.8,152.2h0M543.9,152.1h0M544.1,151.9h0M566.4,175.5h0M546.9,149.5h0M547,149.3h0M547.1,149.2h0M568.9,173.4h0M550,146.8h0M550.1,146.7h0M550.2,146.6h0M571.4,171.2h0M553.1,144.2h0M553.3,144.1h0M553.4,144h0M573.9,169.2h0M556.4,141.7h0M556.5,141.6h0M556.7,141.5h0M570,158.5h0M559.4,139.4h0M559.6,139.3h0M559.7,139.2h0M572.7,156.6h0M562.6,137.2h0M562.7,137.1h0M562.9,137h0M575.4,154.7h0M565.7,135.1h0M565.9,135h0M566.1,134.9h0M578.2,152.9h0M569,133.1h0M569.1,133h0M569.3,132.9h0M581,151.1h0M572.3,131.1h0M572.4,131h0M572.6,130.9h0M583.8,149.4h0M575.6,129.2h0M575.7,129.1h0M575.9,129.1h0M592,157.3h0M579.2,127.3h0M579.3,127.2h0M579.5,127.1h0M594.9,155.8h0M582.8,125.5h0M583,125.4h0M583.2,125.3h0M597.8,154.3h0M586.5,123.7h0M586.7,123.6h0M586.9,123.6h0M600.7,152.9h0M590.3,122.1h0M590.4,122h0M590.6,121.9h0M603.7,151.6h0M594.1,120.5h0M594.2,120.4h0M594.4,120.4h0M606.8,150.4h0M597.9,119h0M598,119h0M598.2,118.9h0M609.8,149.3h0M601.7,117.7h0M601.9,117.6h0M602.1,117.5h0M616.4,158.4h0M606.4,116.1h0M606.6,116.1h0M606.7,116h0M619.9,157.3h0M611.1,114.8h0M611.3,114.7h0M611.4,114.7h0M623.3,156.4h0M615.8,113.5h0M616,113.5h0M616.2,113.5h0M629.3,166h0M620.9,112.4h0M621.1,112.4h0M621.3,112.3h0M632.7,165.3h0M626.1,111.4h0M626.2,111.4h0M626.4,111.3h0M636.1,164.6h0M631.2,110.6h0M631.4,110.6h0M631.6,110.5h0M639.5,164.1h0M636.4,109.9h0M636.6,109.9h0M636.8,109.9h0M639.5,131.4h0M640.2,109.6h0M640.4,109.5h0M640.6,109.5h0M642.8,131.1h0M647,109.1h0M647.2,109.1h0M647.4,109.1h0M647.6,109.1h0M647.9,109.1h0M648.1,109.1h0M648.3,109.1h0M648.5,109.1h0M652.6,109h0M652.7,109h0M652.9,109h0M653.1,109h0M653.5,109h0M653.7,109h0M653.8,109h0M654,109h0"/>
<path fill="none" stroke="#ff8e1f" stroke-width="6.2" stroke-linecap="round" d="M518.3,182.4h0M527.5,188h0M520.4,179.2h0M529.5,185.1h0M522.6,176.1h0M540.4,188.5h0M525,172.8h0M542.5,185.7h0M527.6,169.6h0M544.7,182.9h0M530.2,166.5h0M547,180.1h0M532.9,163.4h0M549.3,177.5h0M535.6,160.4h0M551.7,174.9h0M538.4,157.4h0M554.2,172.3h0M541.4,154.5h0M556.7,169.8h0M544.3,151.7h0M559.3,167.4h0M547.4,149h0M561.9,165h0M550.5,146.3h0M564.6,162.8h0M553.7,143.8h0M567.4,160.5h0M556.9,141.3h0M563.7,149.8h0M560,139h0M566.6,147.7h0M563.1,136.9h0M569.5,145.6h0M566.3,134.8h0M572.5,143.7h0M569.6,132.7h0M575.5,141.8h0M572.9,130.8h0M578.6,140h0M576.2,128.9h0M587,147.7h0M579.8,127h0M590.1,146.1h0M583.5,125.2h0M593.3,144.5h0M587.2,123.4h0M596.5,143h0M590.9,121.8h0M599.7,141.6h0M594.7,120.2h0M603,140.2h0M598.5,118.8h0M606.3,139h0M602.4,117.4h0M613.2,148.1h0M607.1,115.9h0M617,146.9h0M611.8,114.6h0M620.7,145.8h0M616.5,113.4h0M627,155.4h0M621.6,112.2h0M630.8,154.6h0M626.8,111.3h0M634.5,153.9h0M631.9,110.5h0M638.3,153.3h0M637.1,109.9h0M638.6,120.6h0M640.9,109.5h0M642.1,120.3h0"/>
<path fill="none" stroke="#f65f18" stroke-width="6.2" stroke-linecap="round" d="M518.4,182.2h0M518.5,182h0M520.6,179h0M520.7,178.9h0M522.8,175.9h0M531.7,182h0M525.2,172.6h0M534,178.9h0M527.8,169.4h0M536.4,175.9h0M530.4,166.2h0M538.8,173h0M533.1,163.1h0M541.3,170.1h0M535.8,160.1h0M543.9,167.3h0M538.7,157.2h0M546.6,164.6h0M541.6,154.3h0M549.3,161.9h0M544.6,151.5h0M552.1,159.3h0M547.6,148.8h0M555,156.8h0M550.7,146.2h0M557.9,154.3h0M553.9,143.6h0M560.9,151.9h0M557.2,141.1h0M557.3,141h0M560.3,138.9h0M560.4,138.8h0M563.4,136.7h0M563.5,136.6h0M566.6,134.6h0M566.7,134.5h0M569.8,132.6h0M570,132.5h0M573.1,130.6h0M573.3,130.5h0M576.5,128.8h0M581.9,138.1h0M580.1,126.8h0M585.3,136.3h0M583.7,125h0M588.7,134.6h0M587.4,123.3h0M592.2,133h0M591.2,121.7h0M595.7,131.5h0M595,120.1h0M599.2,130.1h0M598.8,118.7h0M602.8,128.8h0M602.7,117.3h0M610.1,137.7h0M607.3,115.9h0M614.1,136.4h0M612.1,114.5h0M618.2,135.3h0M616.8,113.3h0M624.8,144.8h0M621.9,112.2h0M628.9,143.9h0M627.1,111.2h0M633,143.2h0M632.2,110.4h0M637.1,142.6h0M637.4,109.8h0M637.6,109.8h0M641.2,109.5h0M641.4,109.5h0"/>
<path fill="none" stroke="#d0330e" stroke-width="6.2" stroke-linecap="round" d="M522.9,175.6h0M523,175.5h0M525.4,172.4h0M525.5,172.3h0M527.9,169.2h0M528,169.1h0M530.5,166h0M530.6,165.9h0M533.2,162.9h0M533.3,162.8h0M536,159.9h0M536.1,159.8h0M538.9,157h0M539,156.9h0M541.8,154.1h0M541.9,154h0M544.8,151.3h0M544.9,151.2h0M547.8,148.6h0M547.9,148.5h0M550.9,146h0M551.1,145.9h0M554.1,143.4h0M554.2,143.3h0M576.7,128.6h0M576.8,128.6h0M580.3,126.7h0M580.4,126.7h0M584,124.9h0M584.1,124.8h0M587.7,123.2h0M587.8,123.1h0M591.5,121.6h0M591.6,121.5h0M595.2,120h0M595.4,120h0M599.1,118.6h0M599.2,118.5h0M602.9,117.2h0M603.1,117.2h0M603.2,117.2h0M603.3,117.1h0M603.5,117.1h0M607.1,127.3h0M607.6,115.8h0M607.8,115.7h0M607.9,115.7h0M608,115.6h0M608.2,115.6h0M611.5,125.9h0M612.3,114.4h0M612.5,114.4h0M612.6,114.4h0M612.7,114.3h0M612.9,114.3h0M615.9,124.7h0M617.1,113.2h0M617.2,113.2h0M617.4,113.2h0M622.8,134.2h0M622.2,112.1h0M622.3,112.1h0M622.5,112.1h0M627.3,133.2h0M627.3,111.2h0M627.5,111.2h0M627.6,111.1h0M631.7,132.4h0M632.5,110.4h0M632.6,110.4h0M632.8,110.4h0M636.2,131.8h0"/>
<path fill="none" stroke="#a51403" stroke-width="6.2" stroke-linecap="round" d="M603.7,117h0M603.8,116.9h0M608.4,115.5h0M608.5,115.5h0M613.1,114.2h0M613.3,114.2h0M620.1,123.7h0M620.4,123.6h0M618.3,113h0M624.9,122.6h0M625.2,122.6h0M623.4,111.9h0M629.7,121.8h0M630,121.7h0M628.6,111h0M634.5,121.1h0M634.8,121h0M633.8,110.2h0"/>
<path fill="none" stroke="#900c00" stroke-width="6.2" stroke-linecap="round" d="M617.6,113.1h0M617.7,113.1h0M618,113h0M618.1,113h0M622.7,112h0M622.8,112h0M623.1,112h0M623.2,111.9h0M627.9,111.1h0M628,111.1h0M628.2,111h0M628.3,111h0M633,110.3h0M633.1,110.3h0M633.4,110.3h0M633.5,110.3h0"/>
</svg>
<svg class="abs" style="left:285px;top:476px" width="739" height="126" viewBox="285 476 739 126">
<defs><linearGradient id="tg" gradientUnits="userSpaceOnUse" x1="0" y1="577.4" x2="0" y2="498.9"><stop offset="0.0000" stop-color="#23171b"/><stop offset="0.0667" stop-color="#4a41b5"/><stop offset="0.1333" stop-color="#426ff2"/><stop offset="0.2000" stop-color="#2f9df5"/><stop offset="0.2667" stop-color="#25c6d8"/><stop offset="0.3333" stop-color="#2ee5ae"/><stop offset="0.4000" stop-color="#4df884"/><stop offset="0.4667" stop-color="#7bfe5f"/><stop offset="0.5333" stop-color="#aff444"/><stop offset="0.6000" stop-color="#dedd32"/><stop offset="0.6667" stop-color="#feb927"/><stop offset="0.7333" stop-color="#ff8e1f"/><stop offset="0.8000" stop-color="#f65f18"/><stop offset="0.8667" stop-color="#d0330e"/><stop offset="0.9333" stop-color="#a51403"/><stop offset="1.0000" stop-color="#900c00"/></linearGradient></defs>
<path fill="#a5b8d4" fill-opacity="0.017" stroke="none" d="M316.9,571.9L317.6,570.9L318.2,569.2L318.9,568.9L319.6,568.9L320.2,568.9L320.9,566.9L321.6,563.3L322.3,563L322.9,563L323.6,563L324.3,563L324.9,563L325.6,563L326.3,563L326.9,562.9L327.6,561.1L328.3,561.4L329,563L329.6,564.3L330.3,564.3L331,561.1L331.6,557L332.3,556.5L333,558L333.6,561.7L334.3,562.2L335,561.1L335.7,558.1L336.3,560.2L337,561.7L337.7,561.4L338.3,557L339,556.5L339.7,557.6L340.3,558L341,561.4L341.7,561.2L342.4,561.1L343,558.1L343.7,558.9L344.4,558.4L345,562L345.7,562.4L346.4,559.9L347,558.9L347.7,558.4L348.4,562L349.1,560.4L349.7,557L350.4,556.5L351.1,557.6L351.7,558L352.4,561.4L353.1,561.2L353.7,559.9L354.4,558.4L355.1,558L355.8,558.6L356.4,559.9L357.1,561.5L357.8,559.9L358.4,555.2L359.1,556.2L359.8,556.8L360.4,558.4L361.1,559.9L361.8,561.5L362.5,559.9L363.1,556.5L363.8,556.5L364.5,559.1L365.1,561.9L365.8,564.2L366.5,561.7L367.1,559.1L367.8,558.6L368.5,561.1L369.2,564L369.8,563.7L370.5,559.9L371.2,559.6L371.8,561.9L372.5,564L373.2,560.2L373.8,556.5L374.5,556.5L375.2,559.1L375.9,561.9L376.5,564.2L377.2,561.4L377.9,558.4L378.5,558L379.2,559.6L379.9,561.9L380.5,564L381.2,560.2L381.9,555.2L382.6,556.2L383.2,556.8L383.9,560.2L384.6,563L385.2,563L385.9,558.4L386.6,556.5L387.2,556.8L387.9,558.9L388.6,561.1L389.2,564.2L389.9,562.5L390.6,560.2L391.3,558L391.9,559.1L392.6,561.1L393.3,564.2L393.9,563.7L394.6,559.9L395.3,558.9L395.9,559.6L396.6,564L397.3,562.9L398,558.4L398.6,556.5L399.3,556.8L400,558.9L400.6,561.1L401.3,564.2L402,562.5L402.6,558.8L403.3,558.3L404,558.4L404.7,559.1L405.3,562.9L406,563.7L406.7,560.2L407.3,555.2L408,556.2L408.7,556.8L409.3,558.9L410,561.1L410.7,564.2L411.4,561.7L412,557L412.7,556.5L413.4,557.6L414,557.8L414.7,560.7L415.4,563L416,562.5L416.7,560.2L417.4,558L418.1,558.6L418.7,558.9L419.4,562.9L420.1,563.5L420.7,561.7L421.4,558.6L422.1,557.8L422.7,560.7L423.4,563L424.1,561.7L424.8,557L425.4,556.5L426.1,557.6L426.8,557.8L427.4,560.7L428.1,563L428.8,562.5L429.4,558.8L430.1,558.3L430.8,558.4L431.5,557.8L432.1,560.7L432.8,563L433.5,561.7L434.1,556.6L434.8,555.2L435.5,556.5L436.1,558.4L436.8,557.8L437.5,562.2L438.2,563L438.8,560.2L439.5,555.2L440.2,556.2L440.8,556.8L441.5,558.4L442.2,558.9L442.8,562.9L443.5,562.4L444.2,556.2L444.9,549.9L445.5,549.6L446.2,549.6L446.9,549.5L447.5,551.6L448.2,554.8L448.9,558.6L449.5,555.5L450.2,553.7L450.9,556.5L451.5,559.1L452.2,556.2L452.9,549.9L453.6,549.6L454.2,549.6L454.9,549.5L455.6,551.6L456.2,554.8L456.9,559.3L457.6,559.1L458.2,562L458.9,563L459.6,560.4L460.3,553.7L460.9,549.1L461.6,549.6L462.3,549.6L462.9,549.1L463.6,553.2L464.3,555.8L464.9,561.2L465.6,563L466.3,562L467,556.6L467.6,555.2L468.3,556.5L469,558.4L469.6,555.5L470.3,551.9L471,546.3L471.6,551.4L472.3,557.8L473,559.9L473.7,556.5L474.3,556.5L475,558.4L475.7,555.5L476.3,551.9L477,546.3L477.7,551.4L478.3,557.8L479,559.9L479.7,555.2L480.4,556.2L481,556.8L481.7,559.7L482.4,559.1L483,557.8L483.7,558.1L484.4,561.4L485,561.4L485.7,557L486.4,556.5L487.1,557.8L487.7,559.4L488.4,559.1L489.1,556.8L489.7,559.3L490.4,561.7L491.1,560.6L491.7,557.8L492.4,557.8L493.1,561.1L493.8,564L494.4,561.7L495.1,555.2L495.8,554.5L496.4,556.2L497.1,561.1L497.8,564L498.4,563.7L499.1,563.2L499.8,562.7L500.5,561.1L501.1,555.7L501.8,555.8L502.5,555.2L503.1,555.2L503.8,555L504.5,558.3L505.1,554.2L505.8,551.9L506.5,550.1L507.2,556.8L507.8,559.9L508.5,560.9L509.2,555.7L509.8,555.8L510.5,555.2L511.2,555.2L511.8,555L512.5,558.3L513.2,554.2L513.9,551.9L514.5,550.1L515.2,556.8L515.9,559.9L516.5,560.9L517.2,555.7L517.9,555.8L518.5,555.2L519.2,555.2L519.9,555L520.5,558.3L521.2,554.2L521.9,551.9L522.6,550.1L523.2,556.8L523.9,559.9L524.6,560.9L525.2,555.7L525.9,555.8L526.6,555.2L527.2,555.2L527.9,555L528.6,558.3L529.3,554.2L529.9,551.9L530.6,550.1L531.3,556.8L531.9,559.6L532.6,557.3L533.3,550.4L533.9,549.9L534.6,552.2L535.3,551.2L536,552.7L536.6,555.5L537.3,553.2L538,551.1L538.6,556.2L539.3,558.1L540,552.4L540.6,549.1L541.3,552.2L542,551.1L542.7,552.6L543.3,554.5L544,555.2L544.7,550.1L545.3,554.5L546,559.1L546.7,558.8L547.3,555.8L548,555.2L548.7,555.7L549.4,554.5L550,556.8L550.7,557.5L551.4,553.4L552,550.8L552.7,551.4L553.4,558.3L554,560.9L554.7,558.8L555.4,555.8L556.1,555.2L556.7,555.7L557.4,554.5L558.1,556.8L558.7,557.5L559.4,553.4L560.1,550.8L560.7,551.4L561.4,558.3L562.1,560.9L562.8,558.8L563.4,555.8L564.1,555.2L564.8,555.7L565.4,554.5L566.1,556.8L566.8,557.5L567.4,553.4L568.1,550.8L568.8,551.4L569.5,558.3L570.1,560.9L570.8,558.8L571.5,555.8L572.1,555.2L572.8,555.7L573.5,554.5L574.1,556.8L574.8,557.5L575.5,553.4L576.2,550.8L576.8,551.4L577.5,558.3L578.2,559.6L578.8,554.8L579.5,549.3L580.2,551.2L580.8,551.6L581.5,552.1L582.2,553.4L582.9,555.8L583.5,550.9L584.2,552.7L584.9,557.1L585.5,557.1L586.2,550.4L586.9,549.9L587.5,552.2L588.2,551.2L588.9,552.7L589.5,555.5L590.2,553.2L590.9,551.1L591.6,556.2L592.2,560.7L592.9,556.6L593.6,556.2L594.2,554.8L594.9,555.7L595.6,554.2L596.2,558.1L596.9,555.8L597.6,552.9L598.3,550.1L598.9,554.2L599.6,559.1L600.3,561.5L600.9,556.6L601.6,556.2L602.3,554.8L602.9,555.7L603.6,554.2L604.3,558.1L605,555.8L605.6,552.9L606.3,550.1L607,554.2L607.6,559.1L608.3,561.5L609,556.6L609.6,556.2L610.3,554.8L611,555.7L611.7,554.2L612.3,558.1L613,555.8L613.7,552.9L614.3,550.1L615,554.2L615.7,559.1L616.3,561.5L617,556.6L617.7,556.2L618.4,554.8L619,555.7L619.7,554.2L620.4,558.1L621,555.8L621.7,552.9L622.4,550.1L623,554.2L623.7,559.1L624.4,558.9L625.1,552.4L625.7,549.1L626.4,552.2L627.1,551.1L627.7,552.6L628.4,554.5L629.1,555.2L629.7,550.1L630.4,554.5L631.1,557.8L631.8,554.8L632.4,549.3L633.1,551.2L633.8,551.6L634.4,552.1L635.1,553.4L635.8,555.8L636.4,550.9L637.1,552.7L637.8,557.5L638.5,560.7L639.1,555.7L639.8,555.8L640.5,555.2L641.1,555.2L641.8,555L642.5,558.3L643.1,554.2L643.8,551.9L644.5,550.1L645.2,556.8L645.8,559.9L646.5,560.9L647.2,555.7L647.8,555.8L648.5,555.2L649.2,555.2L649.8,555L650.5,558.3L651.2,554.2L651.8,551.9L652.5,550.1L653.2,556.8L653.9,559.9L654.5,560.9L655.2,555.7L655.9,555.8L656.5,555.2L657.2,555.2L657.9,555L658.5,558.3L659.2,554.2L659.9,551.9L660.6,550.1L661.2,556.8L661.9,559.9L662.6,560.9L663.2,555.7L663.9,555.8L664.6,555.2L665.2,555.2L665.9,555L666.6,558.3L667.3,554.2L667.9,551.9L668.6,550.1L669.3,556.8L669.9,559.6L670.6,557.3L671.3,550.4L671.9,549.9L672.6,552.2L673.3,551.2L674,552.7L674.6,555.5L675.3,553.2L676,551.1L676.6,556.2L677.3,558.1L678,552.4L678.6,549.1L679.3,552.2L680,551.1L680.7,552.6L681.3,554.5L682,555.2L682.7,550.1L683.3,554.5L684,559.1L684.7,558.8L685.3,555.8L686,555.2L686.7,555.7L687.4,554.5L688,556.8L688.7,557.5L689.4,553.4L690,550.8L690.7,551.4L691.4,558.3L692,560.9L692.7,558.8L693.4,555.8L694.1,555.2L694.7,555.7L695.4,554.5L696.1,556.8L696.7,557.5L697.4,553.4L698.1,550.8L698.7,551.4L699.4,558.3L700.1,560.9L700.8,558.8L701.4,555.8L702.1,555.2L702.8,555.7L703.4,554.5L704.1,556.8L704.8,557.5L705.4,553.4L706.1,550.8L706.8,551.4L707.5,558.3L708.1,560.9L708.8,558.8L709.5,555.8L710.1,555.2L710.8,555.7L711.5,554.5L712.1,556.8L712.8,557.5L713.5,553.4L714.2,550.6L714.8,548.8L715.5,548.6L716.2,546.8L716.8,553L717.5,558.6L718.2,560.9L718.8,555.7L719.5,555.8L720.2,555.2L720.8,555.2L721.5,555L722.2,558.3L722.9,554.2L723.5,551.9L724.2,548.8L724.9,549.5L725.5,546.8L726.2,550.4L726.9,557L727.5,561.4L728.2,556.6L728.9,556.2L729.6,554.8L730.2,555.7L730.9,554.2L731.6,558.1L732.2,555.8L732.9,552.9L733.6,549.5L734.2,549.3L734.9,547.5L735.6,548L736.3,555.2L736.9,560.2L737.6,558.8L738.3,555.8L738.9,555.2L739.6,555.7L740.3,554.5L740.9,556.8L741.6,557.5L742.3,553.4L743,550.8L743.6,551.4L744.3,558.3L745,560.9L745.6,558.8L746.3,555.8L747,555.2L747.6,555.7L748.3,554.5L749,556.8L749.7,557.5L750.3,553.4L751,550.8L751.7,551.4L752.3,558.3L753,560.9L753.7,558.8L754.3,555.8L755,555.2L755.7,555.7L756.4,554.5L757,556.8L757.7,557.5L758.4,553.4L759,550.8L759.7,551.4L760.4,558.3L761,560.9L761.7,558.8L762.4,555.8L763.1,555.2L763.7,555.7L764.4,554.5L765.1,556.8L765.7,557.5L766.4,553.4L767.1,550.8L767.7,551.4L768.4,558.3L769.1,560.9L769.8,558.8L770.4,555.8L771.1,555.2L771.8,555.7L772.4,554.5L773.1,556.8L773.8,557.5L774.4,553.4L775.1,550.8L775.8,551.4L776.5,558.3L777.1,560.9L777.8,558.8L778.5,555.8L779.1,555.2L779.8,555.7L780.5,554.5L781.1,556.8L781.8,557.5L782.5,553.4L783.2,550.8L783.8,551.4L784.5,558.3L785.2,560.9L785.8,561.1L786.5,557.8L787.2,552.9L787.8,549.3L788.5,551.4L789.2,553.2L789.8,550.1L790.5,547.3L791.2,547.3L791.9,549L792.5,548.6L793.2,548L793.9,552.1L794.5,555.7L795.2,550.9L795.9,546L796.5,549.3L797.2,555.5L797.9,553.9L798.6,546.8L799.2,548L799.9,556.8L800.6,561.5L801.2,556.6L801.9,556.2L802.6,554.8L803.2,555.7L803.9,554.2L804.6,558.1L805.3,555.8L805.9,552.9L806.6,550.1L807.3,551.7L807.9,550.1L808.6,548.5L809.3,546.8L809.9,546.7L810.6,546L811.3,546L812,546L812.6,546L813.3,546L814,546L814.6,546L815.3,546L816,546L816.6,545.5L817.3,543.2L818,540.3L818.7,536.4L819.3,531.9L820,527.8L820.7,525.1L821.3,528L822,530.9L822.7,535.1L823.3,533.2L824,529.4L824.7,524.9L825.4,527L826,529.9L826.7,533.7L827.4,534.7L828,530.7L828.7,526.1L829.4,520.7L830,524L830.7,527.5L831.4,532.7L832.1,534.7L832.7,530.7L833.4,526.1L834.1,520.7L834.7,524L835.4,527.5L836.1,532.7L836.7,534.7L837.4,530.7L838.1,526.1L838.8,520.7L839.4,524L840.1,527.5L840.8,532.7L841.4,534.7L842.1,530.7L842.8,526.1L843.4,520.7L844.1,524L844.8,527.5L845.5,532.7L846.1,534.7L846.8,530.7L847.5,526.1L848.1,520.7L848.8,524L849.5,527.5L850.1,532.7L850.8,534.7L851.5,530.7L852.2,526.1L852.8,520.7L853.5,524L854.2,527.5L854.8,532.7L855.5,534.7L856.2,530.7L856.8,526.1L857.5,520.7L858.2,524L858.8,527.5L859.5,532.7L860.2,534.7L860.9,530.7L861.5,526.1L862.2,520.7L862.9,524L863.5,527.5L864.2,532.7L864.9,534.7L865.5,530.7L866.2,526.1L866.9,520.7L867.6,524L868.2,527.5L868.9,532.7L869.6,534.7L870.2,530.7L870.9,526.1L871.6,520.7L872.2,524L872.9,527.5L873.6,532.7L874.3,534.7L874.9,530.7L875.6,526.1L876.3,520.7L876.9,524L877.6,527.5L878.3,532.7L878.9,534.7L879.6,530.7L880.3,526.1L881,520.7L881.6,524L882.3,527.5L883,532.7L883.6,534.7L884.3,530.7L885,526.1L885.6,526.1L886.3,528.9L887,532.2L887.7,535.7L888.3,531.9L889,527.8L889.7,525.1L890.3,528L891,530.9L891.7,535.1L892.3,533.2L893,529.4L893.7,524.9L894.4,527L895,529.9L895.7,533.7L896.4,534.7L897,530.7L897.7,526.1L898.4,526.1L899,528.9L899.7,532.2L900.4,535.7L901.1,531.9L901.7,527.8L902.4,525.1L903.1,528L903.7,530.9L904.4,535.1L905.1,533.2L905.7,529.4L906.4,524.9L907.1,527L907.8,529.9L908.4,533.7L909.1,534.7L909.8,530.7L910.4,526.1L911.1,520.7L911.8,524L912.4,527.5L913.1,532.7L913.8,534.7L914.5,530.7L915.1,526.1L915.8,520.7L916.5,524L917.1,527.5L917.8,532.7L918.5,534.7L919.1,530.7L919.8,526.1L920.5,520.7L921.1,524L921.8,527.5L922.5,532.7L923.2,534.7L923.8,530.7L924.5,526.1L925.2,520.7L925.8,524L926.5,527.5L927.2,532.7L927.8,534.7L928.5,530.7L929.2,526.1L929.9,520.7L930.5,524L931.2,527.5L931.9,532.7L932.5,534.7L933.2,530.7L933.9,526.1L934.5,520.7L935.2,524L935.9,527.5L936.6,532.7L937.2,534.7L937.9,530.7L938.6,526.1L939.2,520.7L939.9,524L940.6,527.5L941.2,532.7L941.9,534.7L942.6,530.7L943.3,526.1L943.9,519.9L944.6,515.1L945.3,511.3L945.9,517.5L946.6,524.6L947.3,531.8L947.9,534.7L948.6,530.7L949.3,526.1L950,519.9L950.6,515.1L951.3,511.3L952,517.5L952.6,524.6L953.3,531.8L954,534.7L954.6,530.7L955.3,526.1L956,519.9L956.7,515.1L957.3,511.3L958,517.5L958.7,524.6L959.3,531.8L960,534.7L960.7,530.7L961.3,526.1L962,519.9L962.7,514.5L963.4,508.3L964,505.2L964.7,513.1L965.4,521.8L966,531.2L966.7,534.7L967.4,530.7L968,526.1L968.7,519.9L969.4,514.5L970.1,508.3L970.7,505.2L971.4,513.1L972.1,521.8L972.7,531.2L973.4,534.7L974.1,530.7L974.7,526.1L975.4,519.9L976.1,514.5L976.8,508.3L977.4,505.2L978.1,513.1L978.8,521.8L979.4,531.2L980.1,534.7L980.8,530.7L981.4,526.1L982.1,519.9L982.8,514.5L983.5,508.3L984.1,505.2L984.8,513.1L985.5,521.8L986.1,531.2L986.8,534.7L987.5,530.7L988.1,526.1L988.8,526.1L989.5,528.9L990.1,532.2L990.8,535.7L991.5,531.9L992.2,527.8L992.8,525.6L993.5,529.9L994.2,533.8L994.8,538.4L995.5,537.9L996.2,535.1L996.8,533.7L997.5,532.7L998.2,530.4L998.9,529.3L999.5,527.1L1000.2,528.1L1000.9,530.8L1001.5,533.2L1002.2,534.7L1002.9,534L1003.5,532.6L1004.2,530L1004.9,528.8L1005.6,526.6L1006.2,525.8L1006.7,525.9L1006.7,577.4L316.9,577.4Z"/>
<path fill="none" stroke="url(#tg)" stroke-width="1.5" stroke-linejoin="round" stroke-linecap="round" d="M316.9,571.9L317.1,571.4L317.3,571.1L317.6,570.9L317.8,570.5L318,569.7L318.2,569.2L318.5,569.2L318.7,569.1L318.9,568.9L319.1,568.9L319.4,568.9L319.6,568.9L319.8,569.1L320,569.2L320.2,568.9L320.5,568.4L320.7,567.9L320.9,566.9L321.1,565.6L321.4,564.3L321.6,563.3L321.8,563L322,563L322.3,563L322.5,563L322.7,563L322.9,563L323.2,563L323.4,563L323.6,563L323.8,563L324,563L324.3,563L324.5,563L324.7,563L324.9,563L325.2,563L325.4,563L325.6,563L325.8,563L326.1,563L326.3,563L326.5,563L326.7,563L326.9,562.9L327.2,562.4L327.4,561.7L327.6,561.1L327.8,560.4L328.1,560.4L328.3,561.4L328.5,562.4L328.7,562.9L329,563L329.2,563L329.4,563.3L329.6,564.3L329.9,565.1L330.1,565L330.3,564.3L330.5,563.3L330.7,562L331,561.1L331.2,560.1L331.4,558.4L331.6,557L331.9,556.5L332.1,556.5L332.3,556.5L332.5,556.5L332.8,556.8L333,558L333.2,559.7L333.4,561.2L333.6,561.7L333.9,561.7L334.1,561.9L334.3,562.2L334.5,562.2L334.8,561.7L335,561.1L335.2,560.2L335.4,559.1L335.7,558.1L335.9,558L336.1,558.8L336.3,560.2L336.6,561.4L336.8,561.7L337,561.7L337.2,561.7L337.4,561.7L337.7,561.4L337.9,560.2L338.1,558.4L338.3,557L338.6,556.5L338.8,556.5L339,556.5L339.2,556.5L339.5,556.8L339.7,557.6L339.9,558.4L340.1,558.4L340.3,558L340.6,558.4L340.8,559.9L341,561.4L341.2,562L341.5,561.7L341.7,561.2L341.9,561.2L342.1,561.4L342.4,561.1L342.6,560.2L342.8,559.1L343,558.1L343.2,558L343.5,558.4L343.7,558.9L343.9,558.6L344.1,558L344.4,558.4L344.6,559.9L344.8,561.4L345,562L345.3,561.7L345.5,561.5L345.7,562.4L345.9,562.9L346.2,561.7L346.4,559.9L346.6,558.8L346.8,558.6L347,558.9L347.3,558.6L347.5,558L347.7,558.4L347.9,559.9L348.2,561.4L348.4,562L348.6,561.5L348.8,560.7L349.1,560.4L349.3,559.9L349.5,558.4L349.7,557L349.9,556.5L350.2,556.5L350.4,556.5L350.6,556.5L350.8,556.8L351.1,557.6L351.3,558.4L351.5,558.4L351.7,558L352,558.4L352.2,559.9L352.4,561.4L352.6,562L352.9,561.7L353.1,561.2L353.3,561.2L353.5,561.1L353.7,559.9L354,558.8L354.2,558.4L354.4,558.4L354.6,558.3L354.9,558L355.1,558L355.3,558.4L355.5,558.9L355.8,558.6L356,558L356.2,558.4L356.4,559.9L356.6,561.4L356.9,562L357.1,561.5L357.3,560.7L357.5,560.4L357.8,559.9L358,558.4L358.2,556.6L358.4,555.2L358.7,554.5L358.9,555.2L359.1,556.2L359.3,556.5L359.6,556.5L359.8,556.8L360,557.6L360.2,558.4L360.4,558.4L360.7,558L360.9,558.4L361.1,559.9L361.3,561.4L361.6,562L361.8,561.5L362,560.7L362.2,560.4L362.5,559.9L362.7,558.4L362.9,557L363.1,556.5L363.3,556.5L363.6,556.5L363.8,556.5L364,556.8L364.2,557.8L364.5,559.1L364.7,560.2L364.9,561.1L365.1,561.9L365.4,563L365.6,564L365.8,564.2L366,563.5L366.2,562.5L366.5,561.7L366.7,561.1L366.9,560.2L367.1,559.1L367.4,558.1L367.6,558L367.8,558.6L368,559.6L368.3,560.4L368.5,561.1L368.7,561.9L368.9,563L369.2,564L369.4,564.2L369.6,563.8L369.8,563.7L370,563.2L370.3,561.7L370.5,559.9L370.7,558.8L370.9,558.8L371.2,559.6L371.4,560.4L371.6,561.1L371.8,561.9L372.1,563L372.3,564L372.5,564L372.7,563L372.9,561.7L373.2,560.2L373.4,558.4L373.6,557L373.8,556.5L374.1,556.5L374.3,556.5L374.5,556.5L374.7,556.8L375,557.8L375.2,559.1L375.4,560.2L375.6,561.1L375.9,561.9L376.1,563L376.3,564L376.5,564.2L376.7,563.5L377,562.5L377.2,561.4L377.4,559.9L377.6,558.8L377.9,558.4L378.1,558.4L378.3,558.3L378.5,558L378.8,558L379,558.6L379.2,559.6L379.4,560.4L379.6,561.1L379.9,561.9L380.1,563L380.3,564L380.5,564L380.8,563L381,561.7L381.2,560.2L381.4,558.4L381.7,556.6L381.9,555.2L382.1,554.5L382.3,555.2L382.6,556.2L382.8,556.5L383,556.5L383.2,556.8L383.4,557.8L383.7,559.1L383.9,560.2L384.1,561.1L384.3,561.9L384.6,563L384.8,564L385,564L385.2,563L385.5,561.7L385.7,560.2L385.9,558.4L386.1,557L386.3,556.5L386.6,556.5L386.8,556.5L387,556.5L387.2,556.8L387.5,557.6L387.7,558.4L387.9,558.9L388.1,559.1L388.4,559.6L388.6,561.1L388.8,562.9L389,564L389.2,564.2L389.5,563.8L389.7,563.3L389.9,562.5L390.1,561.7L390.4,561.1L390.6,560.2L390.8,559.1L391,558.1L391.3,558L391.5,558.4L391.7,558.9L391.9,559.1L392.2,559.1L392.4,559.6L392.6,561.1L392.8,562.9L393,564L393.3,564.2L393.5,563.8L393.7,563.7L393.9,563.7L394.2,563.2L394.4,561.7L394.6,559.9L394.8,558.8L395.1,558.6L395.3,558.9L395.5,559.1L395.7,559.1L395.9,559.6L396.2,561.1L396.4,562.9L396.6,564L396.8,564.2L397.1,563.7L397.3,562.9L397.5,561.7L397.7,560.2L398,558.4L398.2,557L398.4,556.5L398.6,556.5L398.9,556.5L399.1,556.5L399.3,556.8L399.5,557.6L399.7,558.4L400,558.9L400.2,559.1L400.4,559.6L400.6,561.1L400.9,562.9L401.1,564L401.3,564.2L401.5,563.8L401.8,563.3L402,562.5L402.2,561.4L402.4,559.9L402.6,558.8L402.9,558.4L403.1,558.4L403.3,558.3L403.5,558L403.8,558L404,558.4L404.2,558.9L404.4,559.1L404.7,559.1L404.9,559.6L405.1,561.1L405.3,562.9L405.6,564L405.8,564.2L406,563.7L406.2,562.9L406.4,561.7L406.7,560.2L406.9,558.4L407.1,556.6L407.3,555.2L407.6,554.5L407.8,555.2L408,556.2L408.2,556.5L408.5,556.5L408.7,556.8L408.9,557.6L409.1,558.4L409.3,558.9L409.6,559.1L409.8,559.6L410,561.1L410.2,562.9L410.5,564L410.7,564.2L410.9,563.7L411.1,562.9L411.4,561.7L411.6,560.2L411.8,558.4L412,557L412.2,556.5L412.5,556.5L412.7,556.5L412.9,556.5L413.1,556.8L413.4,557.6L413.6,558.4L413.8,558.4L414,557.8L414.3,557.8L414.5,558.9L414.7,560.7L414.9,562.2L415.2,562.9L415.4,563L415.6,563.2L415.8,563.2L416,562.5L416.3,561.7L416.5,561.1L416.7,560.2L416.9,559.1L417.2,558.1L417.4,558L417.6,558.4L417.8,558.9L418.1,558.6L418.3,557.8L418.5,557.8L418.7,558.9L418.9,560.7L419.2,562.2L419.4,562.9L419.6,563L419.8,563.2L420.1,563.5L420.3,563.7L420.5,563.2L420.7,561.7L421,559.9L421.2,558.8L421.4,558.6L421.6,558.9L421.9,558.6L422.1,557.8L422.3,557.8L422.5,558.9L422.7,560.7L423,562.2L423.2,562.9L423.4,563L423.6,563L423.9,562.7L424.1,561.7L424.3,560.2L424.5,558.4L424.8,557L425,556.5L425.2,556.5L425.4,556.5L425.6,556.5L425.9,556.8L426.1,557.6L426.3,558.4L426.5,558.4L426.8,557.8L427,557.8L427.2,558.9L427.4,560.7L427.7,562.2L427.9,562.9L428.1,563L428.3,563.2L428.5,563.2L428.8,562.5L429,561.4L429.2,559.9L429.4,558.8L429.7,558.4L429.9,558.4L430.1,558.3L430.3,558L430.6,558L430.8,558.4L431,558.9L431.2,558.6L431.5,557.8L431.7,557.8L431.9,558.9L432.1,560.7L432.3,562.2L432.6,562.9L432.8,563L433,563L433.2,562.7L433.5,561.7L433.7,560.2L433.9,558.4L434.1,556.6L434.4,555.2L434.6,554.5L434.8,555.2L435,556.2L435.2,556.5L435.5,556.5L435.7,556.8L435.9,557.6L436.1,558.4L436.4,558.4L436.6,557.8L436.8,557.8L437,558.9L437.3,560.7L437.5,562.2L437.7,562.9L437.9,563L438.2,563L438.4,562.7L438.6,561.7L438.8,560.2L439,558.4L439.3,556.6L439.5,555.2L439.7,554.5L439.9,555.2L440.2,556.2L440.4,556.5L440.6,556.5L440.8,556.8L441.1,557.6L441.3,558.4L441.5,558.4L441.7,557.8L441.9,557.8L442.2,558.9L442.4,560.7L442.6,562.2L442.8,562.9L443.1,563L443.3,563L443.5,562.4L443.7,560.7L444,558.6L444.2,556.2L444.4,553.7L444.6,551.6L444.9,549.9L445.1,549.1L445.3,549.3L445.5,549.6L445.7,549.6L446,549.6L446.2,549.6L446.4,549.6L446.6,549.6L446.9,549.5L447.1,549.1L447.3,549.8L447.5,551.6L447.8,553.2L448,554.2L448.2,554.8L448.4,555.8L448.6,557.3L448.9,558.6L449.1,558.6L449.3,557.1L449.5,555.5L449.8,554.5L450,553.9L450.2,553.7L450.4,554.4L450.7,555.3L450.9,556.5L451.1,557.8L451.3,558.8L451.5,559.1L451.8,559.1L452,558.3L452.2,556.2L452.4,553.7L452.7,551.6L452.9,549.9L453.1,549.1L453.3,549.3L453.6,549.6L453.8,549.6L454,549.6L454.2,549.6L454.5,549.6L454.7,549.6L454.9,549.5L455.1,549.1L455.3,549.8L455.6,551.6L455.8,553.2L456,554.2L456.2,554.8L456.5,555.8L456.7,557.5L456.9,559.3L457.1,559.9L457.4,559.4L457.6,559.1L457.8,559.4L458,560.6L458.2,562L458.5,562.9L458.7,563L458.9,563L459.1,562.7L459.4,561.7L459.6,560.4L459.8,558.6L460,556.2L460.3,553.7L460.5,551.6L460.7,549.9L460.9,549.1L461.2,549.3L461.4,549.6L461.6,549.6L461.8,549.6L462,549.6L462.3,549.6L462.5,549.6L462.7,549.5L462.9,549.1L463.2,549.8L463.4,551.6L463.6,553.2L463.8,554.2L464.1,554.8L464.3,555.8L464.5,557.5L464.7,559.6L464.9,561.2L465.2,561.9L465.4,562.4L465.6,563L465.8,563.3L466.1,563L466.3,562L466.5,560.4L466.7,558.4L467,556.6L467.2,555.2L467.4,554.5L467.6,555.2L467.9,556.2L468.1,556.5L468.3,556.5L468.5,556.8L468.7,557.6L469,558.4L469.2,558.4L469.4,557.1L469.6,555.5L469.9,554.5L470.1,553.5L470.3,551.9L470.5,549.8L470.8,547.7L471,546.3L471.2,546.8L471.4,549L471.6,551.4L471.9,553.9L472.1,556.2L472.3,557.8L472.5,559.1L472.8,560.1L473,559.9L473.2,558.4L473.4,557L473.7,556.5L473.9,556.5L474.1,556.5L474.3,556.5L474.5,556.8L474.8,557.6L475,558.4L475.2,558.4L475.4,557.1L475.7,555.5L475.9,554.5L476.1,553.5L476.3,551.9L476.6,549.8L476.8,547.7L477,546.3L477.2,546.8L477.5,549L477.7,551.4L477.9,553.9L478.1,556.2L478.3,557.8L478.6,559.1L478.8,560.1L479,559.9L479.2,558.4L479.5,556.6L479.7,555.2L479.9,554.5L480.1,555.2L480.4,556.2L480.6,556.5L480.8,556.5L481,556.8L481.2,557.8L481.5,559.1L481.7,559.7L481.9,559.4L482.1,559.1L482.4,559.1L482.6,559.1L482.8,558.8L483,557.8L483.3,556.8L483.5,557L483.7,558.1L483.9,559.3L484.2,560.4L484.4,561.4L484.6,561.7L484.8,561.7L485,561.4L485.3,560.2L485.5,558.4L485.7,557L485.9,556.5L486.2,556.5L486.4,556.5L486.6,556.5L486.8,556.8L487.1,557.8L487.3,559.1L487.5,559.7L487.7,559.4L487.9,559.1L488.2,559.1L488.4,559.1L488.6,558.8L488.8,557.8L489.1,556.8L489.3,557L489.5,558.1L489.7,559.3L490,560.4L490.2,561.4L490.4,561.7L490.6,561.7L490.9,561.4L491.1,560.6L491.3,559.7L491.5,558.9L491.7,557.8L492,556.8L492.2,556.8L492.4,557.8L492.6,559.1L492.9,560.2L493.1,561.1L493.3,561.9L493.5,563L493.8,564L494,564L494.2,563L494.4,561.7L494.6,559.9L494.9,557.3L495.1,555.2L495.3,554.5L495.5,554.5L495.8,554.5L496,554.5L496.2,554.8L496.4,556.2L496.7,558.3L496.9,560.1L497.1,561.1L497.3,561.7L497.5,562.7L497.8,564L498,564.7L498.2,564.3L498.4,563.7L498.7,563.2L498.9,563L499.1,563.2L499.3,563.3L499.6,563L499.8,562.7L500,562.7L500.2,562.4L500.5,561.1L500.7,558.8L500.9,556.6L501.1,555.7L501.3,555.8L501.6,556.2L501.8,555.8L502,555.2L502.2,554.8L502.5,555.2L502.7,555.7L502.9,555.7L503.1,555.2L503.4,554.5L503.6,554.2L503.8,555L504,556.8L504.2,558.1L504.5,558.3L504.7,557.5L504.9,555.8L505.1,554.2L505.4,553.4L505.6,552.9L505.8,551.9L506,550.8L506.3,550.1L506.5,550.1L506.7,551.4L506.9,554.2L507.2,556.8L507.4,558.3L507.6,559.1L507.8,559.9L508,560.9L508.3,561.5L508.5,560.9L508.7,558.8L508.9,556.6L509.2,555.7L509.4,555.8L509.6,556.2L509.8,555.8L510.1,555.2L510.3,554.8L510.5,555.2L510.7,555.7L510.9,555.7L511.2,555.2L511.4,554.5L511.6,554.2L511.8,555L512.1,556.8L512.3,558.1L512.5,558.3L512.7,557.5L513,555.8L513.2,554.2L513.4,553.4L513.6,552.9L513.9,551.9L514.1,550.8L514.3,550.1L514.5,550.1L514.7,551.4L515,554.2L515.2,556.8L515.4,558.3L515.6,559.1L515.9,559.9L516.1,560.9L516.3,561.5L516.5,560.9L516.8,558.8L517,556.6L517.2,555.7L517.4,555.8L517.6,556.2L517.9,555.8L518.1,555.2L518.3,554.8L518.5,555.2L518.8,555.7L519,555.7L519.2,555.2L519.4,554.5L519.7,554.2L519.9,555L520.1,556.8L520.3,558.1L520.5,558.3L520.8,557.5L521,555.8L521.2,554.2L521.4,553.4L521.7,552.9L521.9,551.9L522.1,550.8L522.3,550.1L522.6,550.1L522.8,551.4L523,554.2L523.2,556.8L523.5,558.3L523.7,559.1L523.9,559.9L524.1,560.9L524.3,561.5L524.6,560.9L524.8,558.8L525,556.6L525.2,555.7L525.5,555.8L525.7,556.2L525.9,555.8L526.1,555.2L526.4,554.8L526.6,555.2L526.8,555.7L527,555.7L527.2,555.2L527.5,554.5L527.7,554.2L527.9,555L528.1,556.8L528.4,558.1L528.6,558.3L528.8,557.5L529,555.8L529.3,554.2L529.5,553.4L529.7,552.9L529.9,551.9L530.2,550.8L530.4,550.1L530.6,550.1L530.8,551.4L531,554.2L531.3,556.8L531.5,558.3L531.7,559.1L531.9,559.6L532.2,559.6L532.4,558.9L532.6,557.3L532.8,554.8L533.1,552.4L533.3,550.4L533.5,549.3L533.7,549.1L533.9,549.9L534.2,551.2L534.4,552.2L534.6,552.2L534.8,551.6L535.1,551.1L535.3,551.2L535.5,552.1L535.7,552.6L536,552.7L536.2,553.4L536.4,554.5L536.6,555.5L536.9,555.8L537.1,555.2L537.3,553.2L537.5,550.9L537.7,550.1L538,551.1L538.2,552.7L538.4,554.5L538.6,556.2L538.9,557.1L539.1,557.8L539.3,558.1L539.5,557.1L539.8,554.8L540,552.4L540.2,550.4L540.4,549.3L540.6,549.1L540.9,549.9L541.1,551.2L541.3,552.2L541.5,552.2L541.8,551.6L542,551.1L542.2,551.2L542.4,552.1L542.7,552.6L542.9,552.7L543.1,553.4L543.3,554.5L543.5,555.5L543.8,555.8L544,555.2L544.2,553.2L544.4,550.9L544.7,550.1L544.9,551.1L545.1,552.7L545.3,554.5L545.6,556.2L545.8,557.5L546,559.1L546.2,560.7L546.5,560.7L546.7,558.8L546.9,556.6L547.1,555.7L547.3,555.8L547.6,556.2L547.8,555.8L548,555.2L548.2,554.8L548.5,555.2L548.7,555.7L548.9,555.7L549.1,555.2L549.4,554.5L549.6,554.2L549.8,555L550,556.8L550.2,558.1L550.5,558.3L550.7,557.5L550.9,555.8L551.1,554.2L551.4,553.4L551.6,552.9L551.8,551.9L552,550.8L552.3,550.1L552.5,550.1L552.7,551.4L552.9,554.2L553.2,556.8L553.4,558.3L553.6,559.1L553.8,559.9L554,560.9L554.3,561.5L554.5,560.9L554.7,558.8L554.9,556.6L555.2,555.7L555.4,555.8L555.6,556.2L555.8,555.8L556.1,555.2L556.3,554.8L556.5,555.2L556.7,555.7L556.9,555.7L557.2,555.2L557.4,554.5L557.6,554.2L557.8,555L558.1,556.8L558.3,558.1L558.5,558.3L558.7,557.5L559,555.8L559.2,554.2L559.4,553.4L559.6,552.9L559.9,551.9L560.1,550.8L560.3,550.1L560.5,550.1L560.7,551.4L561,554.2L561.2,556.8L561.4,558.3L561.6,559.1L561.9,559.9L562.1,560.9L562.3,561.5L562.5,560.9L562.8,558.8L563,556.6L563.2,555.7L563.4,555.8L563.6,556.2L563.9,555.8L564.1,555.2L564.3,554.8L564.5,555.2L564.8,555.7L565,555.7L565.2,555.2L565.4,554.5L565.7,554.2L565.9,555L566.1,556.8L566.3,558.1L566.5,558.3L566.8,557.5L567,555.8L567.2,554.2L567.4,553.4L567.7,552.9L567.9,551.9L568.1,550.8L568.3,550.1L568.6,550.1L568.8,551.4L569,554.2L569.2,556.8L569.5,558.3L569.7,559.1L569.9,559.9L570.1,560.9L570.3,561.5L570.6,560.9L570.8,558.8L571,556.6L571.2,555.7L571.5,555.8L571.7,556.2L571.9,555.8L572.1,555.2L572.4,554.8L572.6,555.2L572.8,555.7L573,555.7L573.2,555.2L573.5,554.5L573.7,554.2L573.9,555L574.1,556.8L574.4,558.1L574.6,558.3L574.8,557.5L575,555.8L575.3,554.2L575.5,553.4L575.7,552.9L575.9,551.9L576.2,550.8L576.4,550.1L576.6,550.1L576.8,551.4L577,554.2L577.3,556.8L577.5,558.3L577.7,559.1L577.9,559.6L578.2,559.6L578.4,558.9L578.6,557.3L578.8,554.8L579.1,552.4L579.3,550.4L579.5,549.3L579.7,549.1L579.9,549.9L580.2,551.2L580.4,552.2L580.6,552.2L580.8,551.6L581.1,551.1L581.3,551.2L581.5,552.1L581.7,552.6L582,552.7L582.2,553.4L582.4,554.5L582.6,555.5L582.9,555.8L583.1,555.2L583.3,553.2L583.5,550.9L583.7,550.1L584,551.1L584.2,552.7L584.4,554.5L584.6,556.2L584.9,557.1L585.1,557.8L585.3,558.1L585.5,557.1L585.8,554.8L586,552.4L586.2,550.4L586.4,549.3L586.6,549.1L586.9,549.9L587.1,551.2L587.3,552.2L587.5,552.2L587.8,551.6L588,551.1L588.2,551.2L588.4,552.1L588.7,552.6L588.9,552.7L589.1,553.4L589.3,554.5L589.5,555.5L589.8,555.8L590,555.2L590.2,553.2L590.4,550.9L590.7,550.1L590.9,551.1L591.1,552.7L591.3,554.5L591.6,556.2L591.8,557.5L592,559.1L592.2,560.7L592.5,560.7L592.7,558.8L592.9,556.6L593.1,555.7L593.3,555.8L593.6,556.2L593.8,555.8L594,555.2L594.2,554.8L594.5,555.2L594.7,555.7L594.9,555.7L595.1,555.2L595.4,554.5L595.6,554.2L595.8,555L596,556.8L596.2,558.1L596.5,558.3L596.7,557.5L596.9,555.8L597.1,554.2L597.4,553.4L597.6,552.9L597.8,551.9L598,550.8L598.3,550.1L598.5,550.1L598.7,551.4L598.9,554.2L599.2,556.8L599.4,558.3L599.6,559.1L599.8,559.9L600,560.9L600.3,561.5L600.5,560.9L600.7,558.8L600.9,556.6L601.2,555.7L601.4,555.8L601.6,556.2L601.8,555.8L602.1,555.2L602.3,554.8L602.5,555.2L602.7,555.7L602.9,555.7L603.2,555.2L603.4,554.5L603.6,554.2L603.8,555L604.1,556.8L604.3,558.1L604.5,558.3L604.7,557.5L605,555.8L605.2,554.2L605.4,553.4L605.6,552.9L605.9,551.9L606.1,550.8L606.3,550.1L606.5,550.1L606.7,551.4L607,554.2L607.2,556.8L607.4,558.3L607.6,559.1L607.9,559.9L608.1,560.9L608.3,561.5L608.5,560.9L608.8,558.8L609,556.6L609.2,555.7L609.4,555.8L609.6,556.2L609.9,555.8L610.1,555.2L610.3,554.8L610.5,555.2L610.8,555.7L611,555.7L611.2,555.2L611.4,554.5L611.7,554.2L611.9,555L612.1,556.8L612.3,558.1L612.5,558.3L612.8,557.5L613,555.8L613.2,554.2L613.4,553.4L613.7,552.9L613.9,551.9L614.1,550.8L614.3,550.1L614.6,550.1L614.8,551.4L615,554.2L615.2,556.8L615.5,558.3L615.7,559.1L615.9,559.9L616.1,560.9L616.3,561.5L616.6,560.9L616.8,558.8L617,556.6L617.2,555.7L617.5,555.8L617.7,556.2L617.9,555.8L618.1,555.2L618.4,554.8L618.6,555.2L618.8,555.7L619,555.7L619.2,555.2L619.5,554.5L619.7,554.2L619.9,555L620.1,556.8L620.4,558.1L620.6,558.3L620.8,557.5L621,555.8L621.3,554.2L621.5,553.4L621.7,552.9L621.9,551.9L622.2,550.8L622.4,550.1L622.6,550.1L622.8,551.4L623,554.2L623.3,556.8L623.5,558.3L623.7,559.1L623.9,559.6L624.2,559.6L624.4,558.9L624.6,557.3L624.8,554.8L625.1,552.4L625.3,550.4L625.5,549.3L625.7,549.1L625.9,549.9L626.2,551.2L626.4,552.2L626.6,552.2L626.8,551.6L627.1,551.1L627.3,551.2L627.5,552.1L627.7,552.6L628,552.7L628.2,553.4L628.4,554.5L628.6,555.5L628.9,555.8L629.1,555.2L629.3,553.2L629.5,550.9L629.7,550.1L630,551.1L630.2,552.7L630.4,554.5L630.6,556.2L630.9,557.1L631.1,557.8L631.3,558.1L631.5,557.1L631.8,554.8L632,552.4L632.2,550.4L632.4,549.3L632.6,549.1L632.9,549.9L633.1,551.2L633.3,552.2L633.5,552.2L633.8,551.6L634,551.1L634.2,551.2L634.4,552.1L634.7,552.6L634.9,552.7L635.1,553.4L635.3,554.5L635.5,555.5L635.8,555.8L636,555.2L636.2,553.2L636.4,550.9L636.7,550.1L636.9,551.1L637.1,552.7L637.3,554.5L637.6,556.2L637.8,557.5L638,559.1L638.2,560.7L638.5,560.7L638.7,558.8L638.9,556.6L639.1,555.7L639.3,555.8L639.6,556.2L639.8,555.8L640,555.2L640.2,554.8L640.5,555.2L640.7,555.7L640.9,555.7L641.1,555.2L641.4,554.5L641.6,554.2L641.8,555L642,556.8L642.2,558.1L642.5,558.3L642.7,557.5L642.9,555.8L643.1,554.2L643.4,553.4L643.6,552.9L643.8,551.9L644,550.8L644.3,550.1L644.5,550.1L644.7,551.4L644.9,554.2L645.2,556.8L645.4,558.3L645.6,559.1L645.8,559.9L646,560.9L646.3,561.5L646.5,560.9L646.7,558.8L646.9,556.6L647.2,555.7L647.4,555.8L647.6,556.2L647.8,555.8L648.1,555.2L648.3,554.8L648.5,555.2L648.7,555.7L648.9,555.7L649.2,555.2L649.4,554.5L649.6,554.2L649.8,555L650.1,556.8L650.3,558.1L650.5,558.3L650.7,557.5L651,555.8L651.2,554.2L651.4,553.4L651.6,552.9L651.8,551.9L652.1,550.8L652.3,550.1L652.5,550.1L652.7,551.4L653,554.2L653.2,556.8L653.4,558.3L653.6,559.1L653.9,559.9L654.1,560.9L654.3,561.5L654.5,560.9L654.8,558.8L655,556.6L655.2,555.7L655.4,555.8L655.6,556.2L655.9,555.8L656.1,555.2L656.3,554.8L656.5,555.2L656.8,555.7L657,555.7L657.2,555.2L657.4,554.5L657.7,554.2L657.9,555L658.1,556.8L658.3,558.1L658.5,558.3L658.8,557.5L659,555.8L659.2,554.2L659.4,553.4L659.7,552.9L659.9,551.9L660.1,550.8L660.3,550.1L660.6,550.1L660.8,551.4L661,554.2L661.2,556.8L661.5,558.3L661.7,559.1L661.9,559.9L662.1,560.9L662.3,561.5L662.6,560.9L662.8,558.8L663,556.6L663.2,555.7L663.5,555.8L663.7,556.2L663.9,555.8L664.1,555.2L664.4,554.8L664.6,555.2L664.8,555.7L665,555.7L665.2,555.2L665.5,554.5L665.7,554.2L665.9,555L666.1,556.8L666.4,558.1L666.6,558.3L666.8,557.5L667,555.8L667.3,554.2L667.5,553.4L667.7,552.9L667.9,551.9L668.2,550.8L668.4,550.1L668.6,550.1L668.8,551.4L669,554.2L669.3,556.8L669.5,558.3L669.7,559.1L669.9,559.6L670.2,559.6L670.4,558.9L670.6,557.3L670.8,554.8L671.1,552.4L671.3,550.4L671.5,549.3L671.7,549.1L671.9,549.9L672.2,551.2L672.4,552.2L672.6,552.2L672.8,551.6L673.1,551.1L673.3,551.2L673.5,552.1L673.7,552.6L674,552.7L674.2,553.4L674.4,554.5L674.6,555.5L674.8,555.8L675.1,555.2L675.3,553.2L675.5,550.9L675.7,550.1L676,551.1L676.2,552.7L676.4,554.5L676.6,556.2L676.9,557.1L677.1,557.8L677.3,558.1L677.5,557.1L677.8,554.8L678,552.4L678.2,550.4L678.4,549.3L678.6,549.1L678.9,549.9L679.1,551.2L679.3,552.2L679.5,552.2L679.8,551.6L680,551.1L680.2,551.2L680.4,552.1L680.7,552.6L680.9,552.7L681.1,553.4L681.3,554.5L681.5,555.5L681.8,555.8L682,555.2L682.2,553.2L682.4,550.9L682.7,550.1L682.9,551.1L683.1,552.7L683.3,554.5L683.6,556.2L683.8,557.5L684,559.1L684.2,560.7L684.5,560.7L684.7,558.8L684.9,556.6L685.1,555.7L685.3,555.8L685.6,556.2L685.8,555.8L686,555.2L686.2,554.8L686.5,555.2L686.7,555.7L686.9,555.7L687.1,555.2L687.4,554.5L687.6,554.2L687.8,555L688,556.8L688.2,558.1L688.5,558.3L688.7,557.5L688.9,555.8L689.1,554.2L689.4,553.4L689.6,552.9L689.8,551.9L690,550.8L690.3,550.1L690.5,550.1L690.7,551.4L690.9,554.2L691.2,556.8L691.4,558.3L691.6,559.1L691.8,559.9L692,560.9L692.3,561.5L692.5,560.9L692.7,558.8L692.9,556.6L693.2,555.7L693.4,555.8L693.6,556.2L693.8,555.8L694.1,555.2L694.3,554.8L694.5,555.2L694.7,555.7L694.9,555.7L695.2,555.2L695.4,554.5L695.6,554.2L695.8,555L696.1,556.8L696.3,558.1L696.5,558.3L696.7,557.5L697,555.8L697.2,554.2L697.4,553.4L697.6,552.9L697.8,551.9L698.1,550.8L698.3,550.1L698.5,550.1L698.7,551.4L699,554.2L699.2,556.8L699.4,558.3L699.6,559.1L699.9,559.9L700.1,560.9L700.3,561.5L700.5,560.9L700.8,558.8L701,556.6L701.2,555.7L701.4,555.8L701.6,556.2L701.9,555.8L702.1,555.2L702.3,554.8L702.5,555.2L702.8,555.7L703,555.7L703.2,555.2L703.4,554.5L703.7,554.2L703.9,555L704.1,556.8L704.3,558.1L704.5,558.3L704.8,557.5L705,555.8L705.2,554.2L705.4,553.4L705.7,552.9L705.9,551.9L706.1,550.8L706.3,550.1L706.6,550.1L706.8,551.4L707,554.2L707.2,556.8L707.5,558.3L707.7,559.1L707.9,559.9L708.1,560.9L708.3,561.5L708.6,560.9L708.8,558.8L709,556.6L709.2,555.7L709.5,555.8L709.7,556.2L709.9,555.8L710.1,555.2L710.4,554.8L710.6,555.2L710.8,555.7L711,555.7L711.2,555.2L711.5,554.5L711.7,554.2L711.9,555L712.1,556.8L712.4,558.1L712.6,558.3L712.8,557.5L713,555.8L713.3,554.2L713.5,553.4L713.7,552.9L713.9,551.9L714.2,550.6L714.4,549.5L714.6,548.8L714.8,548.8L715,549.3L715.3,549.5L715.5,548.6L715.7,547.5L715.9,546.8L716.2,546.8L716.4,548L716.6,550.4L716.8,553L717.1,555.2L717.3,557L717.5,558.6L717.7,560.2L717.9,561.4L718.2,560.9L718.4,558.8L718.6,556.6L718.8,555.7L719.1,555.8L719.3,556.2L719.5,555.8L719.7,555.2L720,554.8L720.2,555.2L720.4,555.7L720.6,555.7L720.8,555.2L721.1,554.5L721.3,554.2L721.5,555L721.7,556.8L722,558.1L722.2,558.3L722.4,557.5L722.6,555.8L722.9,554.2L723.1,553.4L723.3,552.9L723.5,551.9L723.8,550.6L724,549.5L724.2,548.8L724.4,548.8L724.6,549.3L724.9,549.5L725.1,548.6L725.3,547.5L725.5,546.8L725.8,546.8L726,548L726.2,550.4L726.4,553L726.7,555.2L726.9,557L727.1,558.6L727.3,560.2L727.5,561.4L727.8,560.9L728,558.8L728.2,556.6L728.4,555.7L728.7,555.8L728.9,556.2L729.1,555.8L729.3,555.2L729.6,554.8L729.8,555.2L730,555.7L730.2,555.7L730.5,555.2L730.7,554.5L730.9,554.2L731.1,555L731.3,556.8L731.6,558.1L731.8,558.3L732,557.5L732.2,555.8L732.5,554.2L732.7,553.4L732.9,552.9L733.1,551.9L733.4,550.6L733.6,549.5L733.8,548.8L734,548.8L734.2,549.3L734.5,549.5L734.7,548.6L734.9,547.5L735.1,546.8L735.4,546.8L735.6,548L735.8,550.4L736,553L736.3,555.2L736.5,557L736.7,558.6L736.9,560.2L737.2,561.4L737.4,560.9L737.6,558.8L737.8,556.6L738,555.7L738.3,555.8L738.5,556.2L738.7,555.8L738.9,555.2L739.2,554.8L739.4,555.2L739.6,555.7L739.8,555.7L740.1,555.2L740.3,554.5L740.5,554.2L740.7,555L740.9,556.8L741.2,558.1L741.4,558.3L741.6,557.5L741.8,555.8L742.1,554.2L742.3,553.4L742.5,552.9L742.7,551.9L743,550.8L743.2,550.1L743.4,550.1L743.6,551.4L743.8,554.2L744.1,556.8L744.3,558.3L744.5,559.1L744.7,559.9L745,560.9L745.2,561.5L745.4,560.9L745.6,558.8L745.9,556.6L746.1,555.7L746.3,555.8L746.5,556.2L746.8,555.8L747,555.2L747.2,554.8L747.4,555.2L747.6,555.7L747.9,555.7L748.1,555.2L748.3,554.5L748.5,554.2L748.8,555L749,556.8L749.2,558.1L749.4,558.3L749.7,557.5L749.9,555.8L750.1,554.2L750.3,553.4L750.5,552.9L750.8,551.9L751,550.8L751.2,550.1L751.4,550.1L751.7,551.4L751.9,554.2L752.1,556.8L752.3,558.3L752.6,559.1L752.8,559.9L753,560.9L753.2,561.5L753.5,560.9L753.7,558.8L753.9,556.6L754.1,555.7L754.3,555.8L754.6,556.2L754.8,555.8L755,555.2L755.2,554.8L755.5,555.2L755.7,555.7L755.9,555.7L756.1,555.2L756.4,554.5L756.6,554.2L756.8,555L757,556.8L757.2,558.1L757.5,558.3L757.7,557.5L757.9,555.8L758.1,554.2L758.4,553.4L758.6,552.9L758.8,551.9L759,550.8L759.3,550.1L759.5,550.1L759.7,551.4L759.9,554.2L760.2,556.8L760.4,558.3L760.6,559.1L760.8,559.9L761,560.9L761.3,561.5L761.5,560.9L761.7,558.8L761.9,556.6L762.2,555.7L762.4,555.8L762.6,556.2L762.8,555.8L763.1,555.2L763.3,554.8L763.5,555.2L763.7,555.7L763.9,555.7L764.2,555.2L764.4,554.5L764.6,554.2L764.8,555L765.1,556.8L765.3,558.1L765.5,558.3L765.7,557.5L766,555.8L766.2,554.2L766.4,553.4L766.6,552.9L766.8,551.9L767.1,550.8L767.3,550.1L767.5,550.1L767.7,551.4L768,554.2L768.2,556.8L768.4,558.3L768.6,559.1L768.9,559.9L769.1,560.9L769.3,561.5L769.5,560.9L769.8,558.8L770,556.6L770.2,555.7L770.4,555.8L770.6,556.2L770.9,555.8L771.1,555.2L771.3,554.8L771.5,555.2L771.8,555.7L772,555.7L772.2,555.2L772.4,554.5L772.7,554.2L772.9,555L773.1,556.8L773.3,558.1L773.5,558.3L773.8,557.5L774,555.8L774.2,554.2L774.4,553.4L774.7,552.9L774.9,551.9L775.1,550.8L775.3,550.1L775.6,550.1L775.8,551.4L776,554.2L776.2,556.8L776.5,558.3L776.7,559.1L776.9,559.9L777.1,560.9L777.3,561.5L777.6,560.9L777.8,558.8L778,556.6L778.2,555.7L778.5,555.8L778.7,556.2L778.9,555.8L779.1,555.2L779.4,554.8L779.6,555.2L779.8,555.7L780,555.7L780.2,555.2L780.5,554.5L780.7,554.2L780.9,555L781.1,556.8L781.4,558.1L781.6,558.3L781.8,557.5L782,555.8L782.3,554.2L782.5,553.4L782.7,552.9L782.9,551.9L783.2,550.8L783.4,550.1L783.6,550.1L783.8,551.4L784,554.2L784.3,556.8L784.5,558.3L784.7,559.1L784.9,559.9L785.2,560.9L785.4,561.5L785.6,561.5L785.8,561.1L786.1,560.2L786.3,559.1L786.5,557.8L786.7,556.2L786.9,554.2L787.2,552.9L787.4,551.9L787.6,550.4L787.8,549.3L788.1,549.1L788.3,549.9L788.5,551.4L788.7,552.9L789,553.5L789.2,553.2L789.4,552.4L789.6,551.2L789.8,550.1L790.1,549.3L790.3,548.5L790.5,547.3L790.7,546.3L791,546.3L791.2,547.3L791.4,548.6L791.6,549.3L791.9,549L792.1,548.6L792.3,548.6L792.5,548.6L792.8,548.5L793,548L793.2,548L793.4,549.3L793.6,550.9L793.9,552.1L794.1,553.4L794.3,554.8L794.5,555.7L794.8,555.5L795,553.9L795.2,550.9L795.4,548.3L795.7,546.8L795.9,546L796.1,546L796.3,547.3L796.5,549.3L796.8,551.4L797,553.7L797.2,555.5L797.4,556.2L797.7,555.7L797.9,553.9L798.1,550.9L798.3,548.3L798.6,546.8L798.8,546L799,546.2L799.2,548L799.5,550.8L799.7,553.9L799.9,556.8L800.1,559.1L800.3,560.7L800.6,561.5L800.8,560.9L801,558.8L801.2,556.6L801.5,555.7L801.7,555.8L801.9,556.2L802.1,555.8L802.4,555.2L802.6,554.8L802.8,555.2L803,555.7L803.2,555.7L803.5,555.2L803.7,554.5L803.9,554.2L804.1,555L804.4,556.8L804.6,558.1L804.8,558.3L805,557.5L805.3,555.8L805.5,554.2L805.7,553.4L805.9,552.9L806.2,551.9L806.4,550.8L806.6,550.1L806.8,550.1L807,550.8L807.3,551.7L807.5,552.1L807.7,551.2L807.9,550.1L808.2,549.3L808.4,548.8L808.6,548.5L808.8,548L809.1,547.3L809.3,546.8L809.5,546.7L809.7,546.7L809.9,546.7L810.2,546.5L810.4,546.2L810.6,546L810.8,546L811.1,546L811.3,546L811.5,546L811.7,546L812,546L812.2,546L812.4,546L812.6,546L812.8,546L813.1,546L813.3,546L813.5,546L813.7,546L814,546L814.2,546L814.4,546L814.6,546L814.9,546L815.1,546L815.3,546L815.5,546L815.8,546L816,546L816.2,546L816.4,545.9L816.6,545.5L816.9,545L817.1,544.1L817.3,543.2L817.5,542.2L817.8,541.3L818,540.3L818.2,539.2L818.4,537.9L818.7,536.4L818.9,534.7L819.1,533.2L819.3,531.9L819.5,530.7L819.8,529.4L820,527.8L820.2,526.1L820.4,524.9L820.7,525.1L820.9,526.1L821.1,527L821.3,528L821.6,528.9L821.8,529.9L822,530.9L822.2,532.2L822.5,533.7L822.7,535.1L822.9,535.7L823.1,534.7L823.3,533.2L823.6,531.9L823.8,530.7L824,529.4L824.2,527.8L824.5,526.1L824.7,524.9L824.9,525.1L825.1,526.1L825.4,527L825.6,528L825.8,528.9L826,529.9L826.2,530.9L826.5,532.2L826.7,533.7L826.9,535.1L827.1,535.7L827.4,534.7L827.6,533.2L827.8,531.9L828,530.7L828.3,529.4L828.5,527.8L828.7,526.1L828.9,524L829.2,521.9L829.4,520.7L829.6,521.3L829.8,522.7L830,524L830.3,525.1L830.5,526.2L830.7,527.5L830.9,529L831.2,530.8L831.4,532.7L831.6,534.6L831.8,535.6L832.1,534.7L832.3,533.2L832.5,531.9L832.7,530.7L832.9,529.4L833.2,527.8L833.4,526.1L833.6,524L833.8,521.9L834.1,520.7L834.3,521.3L834.5,522.7L834.7,524L835,525.1L835.2,526.2L835.4,527.5L835.6,529L835.8,530.8L836.1,532.7L836.3,534.6L836.5,535.6L836.7,534.7L837,533.2L837.2,531.9L837.4,530.7L837.6,529.4L837.9,527.8L838.1,526.1L838.3,524L838.5,521.9L838.8,520.7L839,521.3L839.2,522.7L839.4,524L839.6,525.1L839.9,526.2L840.1,527.5L840.3,529L840.5,530.8L840.8,532.7L841,534.6L841.2,535.6L841.4,534.7L841.7,533.2L841.9,531.9L842.1,530.7L842.3,529.4L842.5,527.8L842.8,526.1L843,524L843.2,521.9L843.4,520.7L843.7,521.3L843.9,522.7L844.1,524L844.3,525.1L844.6,526.2L844.8,527.5L845,529L845.2,530.8L845.5,532.7L845.7,534.6L845.9,535.6L846.1,534.7L846.3,533.2L846.6,531.9L846.8,530.7L847,529.4L847.2,527.8L847.5,526.1L847.7,524L847.9,521.9L848.1,520.7L848.4,521.3L848.6,522.7L848.8,524L849,525.1L849.2,526.2L849.5,527.5L849.7,529L849.9,530.8L850.1,532.7L850.4,534.6L850.6,535.6L850.8,534.7L851,533.2L851.3,531.9L851.5,530.7L851.7,529.4L851.9,527.8L852.2,526.1L852.4,524L852.6,521.9L852.8,520.7L853,521.3L853.3,522.7L853.5,524L853.7,525.1L853.9,526.2L854.2,527.5L854.4,529L854.6,530.8L854.8,532.7L855.1,534.6L855.3,535.6L855.5,534.7L855.7,533.2L855.9,531.9L856.2,530.7L856.4,529.4L856.6,527.8L856.8,526.1L857.1,524L857.3,521.9L857.5,520.7L857.7,521.3L858,522.7L858.2,524L858.4,525.1L858.6,526.2L858.8,527.5L859.1,529L859.3,530.8L859.5,532.7L859.7,534.6L860,535.6L860.2,534.7L860.4,533.2L860.6,531.9L860.9,530.7L861.1,529.4L861.3,527.8L861.5,526.1L861.8,524L862,521.9L862.2,520.7L862.4,521.3L862.6,522.7L862.9,524L863.1,525.1L863.3,526.2L863.5,527.5L863.8,529L864,530.8L864.2,532.7L864.4,534.6L864.7,535.6L864.9,534.7L865.1,533.2L865.3,531.9L865.5,530.7L865.8,529.4L866,527.8L866.2,526.1L866.4,524L866.7,521.9L866.9,520.7L867.1,521.3L867.3,522.7L867.6,524L867.8,525.1L868,526.2L868.2,527.5L868.5,529L868.7,530.8L868.9,532.7L869.1,534.6L869.3,535.6L869.6,534.7L869.8,533.2L870,531.9L870.2,530.7L870.5,529.4L870.7,527.8L870.9,526.1L871.1,524L871.4,521.9L871.6,520.7L871.8,521.3L872,522.7L872.2,524L872.5,525.1L872.7,526.2L872.9,527.5L873.1,529L873.4,530.8L873.6,532.7L873.8,534.6L874,535.6L874.3,534.7L874.5,533.2L874.7,531.9L874.9,530.7L875.1,529.4L875.4,527.8L875.6,526.1L875.8,524L876,521.9L876.3,520.7L876.5,521.3L876.7,522.7L876.9,524L877.2,525.1L877.4,526.2L877.6,527.5L877.8,529L878.1,530.8L878.3,532.7L878.5,534.6L878.7,535.6L878.9,534.7L879.2,533.2L879.4,531.9L879.6,530.7L879.8,529.4L880.1,527.8L880.3,526.1L880.5,524L880.7,521.9L881,520.7L881.2,521.3L881.4,522.7L881.6,524L881.8,525.1L882.1,526.2L882.3,527.5L882.5,529L882.7,530.8L883,532.7L883.2,534.6L883.4,535.6L883.6,534.7L883.9,533.2L884.1,531.9L884.3,530.7L884.5,529.4L884.8,527.8L885,526.1L885.2,524.9L885.4,525.1L885.6,526.1L885.9,527L886.1,528L886.3,528.9L886.5,529.9L886.8,530.9L887,532.2L887.2,533.7L887.4,535.1L887.7,535.7L887.9,534.7L888.1,533.2L888.3,531.9L888.5,530.7L888.8,529.4L889,527.8L889.2,526.1L889.4,524.9L889.7,525.1L889.9,526.1L890.1,527L890.3,528L890.6,528.9L890.8,529.9L891,530.9L891.2,532.2L891.5,533.7L891.7,535.1L891.9,535.7L892.1,534.7L892.3,533.2L892.6,531.9L892.8,530.7L893,529.4L893.2,527.8L893.5,526.1L893.7,524.9L893.9,525.1L894.1,526.1L894.4,527L894.6,528L894.8,528.9L895,529.9L895.2,530.9L895.5,532.2L895.7,533.7L895.9,535.1L896.1,535.7L896.4,534.7L896.6,533.2L896.8,531.9L897,530.7L897.3,529.4L897.5,527.8L897.7,526.1L897.9,524.9L898.1,525.1L898.4,526.1L898.6,527L898.8,528L899,528.9L899.3,529.9L899.5,530.9L899.7,532.2L899.9,533.7L900.2,535.1L900.4,535.7L900.6,534.7L900.8,533.2L901.1,531.9L901.3,530.7L901.5,529.4L901.7,527.8L901.9,526.1L902.2,524.9L902.4,525.1L902.6,526.1L902.8,527L903.1,528L903.3,528.9L903.5,529.9L903.7,530.9L904,532.2L904.2,533.7L904.4,535.1L904.6,535.7L904.8,534.7L905.1,533.2L905.3,531.9L905.5,530.7L905.7,529.4L906,527.8L906.2,526.1L906.4,524.9L906.6,525.1L906.9,526.1L907.1,527L907.3,528L907.5,528.9L907.8,529.9L908,530.9L908.2,532.2L908.4,533.7L908.6,535.1L908.9,535.7L909.1,534.7L909.3,533.2L909.5,531.9L909.8,530.7L910,529.4L910.2,527.8L910.4,526.1L910.7,524L910.9,521.9L911.1,520.7L911.3,521.3L911.5,522.7L911.8,524L912,525.1L912.2,526.2L912.4,527.5L912.7,529L912.9,530.8L913.1,532.7L913.3,534.6L913.6,535.6L913.8,534.7L914,533.2L914.2,531.9L914.5,530.7L914.7,529.4L914.9,527.8L915.1,526.1L915.3,524L915.6,521.9L915.8,520.7L916,521.3L916.2,522.7L916.5,524L916.7,525.1L916.9,526.2L917.1,527.5L917.4,529L917.6,530.8L917.8,532.7L918,534.6L918.2,535.6L918.5,534.7L918.7,533.2L918.9,531.9L919.1,530.7L919.4,529.4L919.6,527.8L919.8,526.1L920,524L920.3,521.9L920.5,520.7L920.7,521.3L920.9,522.7L921.1,524L921.4,525.1L921.6,526.2L921.8,527.5L922,529L922.3,530.8L922.5,532.7L922.7,534.6L922.9,535.6L923.2,534.7L923.4,533.2L923.6,531.9L923.8,530.7L924.1,529.4L924.3,527.8L924.5,526.1L924.7,524L924.9,521.9L925.2,520.7L925.4,521.3L925.6,522.7L925.8,524L926.1,525.1L926.3,526.2L926.5,527.5L926.7,529L927,530.8L927.2,532.7L927.4,534.6L927.6,535.6L927.8,534.7L928.1,533.2L928.3,531.9L928.5,530.7L928.7,529.4L929,527.8L929.2,526.1L929.4,524L929.6,521.9L929.9,520.7L930.1,521.3L930.3,522.7L930.5,524L930.8,525.1L931,526.2L931.2,527.5L931.4,529L931.6,530.8L931.9,532.7L932.1,534.6L932.3,535.6L932.5,534.7L932.8,533.2L933,531.9L933.2,530.7L933.4,529.4L933.7,527.8L933.9,526.1L934.1,524L934.3,521.9L934.5,520.7L934.8,521.3L935,522.7L935.2,524L935.4,525.1L935.7,526.2L935.9,527.5L936.1,529L936.3,530.8L936.6,532.7L936.8,534.6L937,535.6L937.2,534.7L937.5,533.2L937.7,531.9L937.9,530.7L938.1,529.4L938.3,527.8L938.6,526.1L938.8,524L939,521.9L939.2,520.7L939.5,521.3L939.7,522.7L939.9,524L940.1,525.1L940.4,526.2L940.6,527.5L940.8,529L941,530.8L941.2,532.7L941.5,534.6L941.7,535.6L941.9,534.7L942.1,533.2L942.4,531.9L942.6,530.7L942.8,529.4L943,527.8L943.3,526.1L943.5,524L943.7,521.9L943.9,519.9L944.1,518.1L944.4,516.5L944.6,515.1L944.8,513.6L945,511.9L945.3,511.3L945.5,512.7L945.7,515.1L945.9,517.5L946.2,519.9L946.4,522.2L946.6,524.6L946.8,527L947.1,529.4L947.3,531.8L947.5,534.1L947.7,535.4L947.9,534.7L948.2,533.2L948.4,531.9L948.6,530.7L948.8,529.4L949.1,527.8L949.3,526.1L949.5,524L949.7,521.9L950,519.9L950.2,518.1L950.4,516.5L950.6,515.1L950.8,513.6L951.1,511.9L951.3,511.3L951.5,512.7L951.7,515.1L952,517.5L952.2,519.9L952.4,522.2L952.6,524.6L952.9,527L953.1,529.4L953.3,531.8L953.5,534.1L953.8,535.4L954,534.7L954.2,533.2L954.4,531.9L954.6,530.7L954.9,529.4L955.1,527.8L955.3,526.1L955.5,524L955.8,521.9L956,519.9L956.2,518.1L956.4,516.5L956.7,515.1L956.9,513.6L957.1,511.9L957.3,511.3L957.5,512.7L957.8,515.1L958,517.5L958.2,519.9L958.4,522.2L958.7,524.6L958.9,527L959.1,529.4L959.3,531.8L959.6,534.1L959.8,535.4L960,534.7L960.2,533.2L960.5,531.9L960.7,530.7L960.9,529.4L961.1,527.8L961.3,526.1L961.6,524L961.8,521.9L962,519.9L962.2,518.1L962.5,516.4L962.7,514.5L962.9,512.3L963.1,510.1L963.4,508.3L963.6,506.7L963.8,505.2L964,505.2L964.2,507.4L964.5,510.4L964.7,513.1L964.9,515.7L965.1,518.6L965.4,521.8L965.6,525L965.8,528.1L966,531.2L966.3,534L966.5,535.4L966.7,534.7L966.9,533.2L967.1,531.9L967.4,530.7L967.6,529.4L967.8,527.8L968,526.1L968.3,524L968.5,521.9L968.7,519.9L968.9,518.1L969.2,516.4L969.4,514.5L969.6,512.3L969.8,510.1L970.1,508.3L970.3,506.7L970.5,505.2L970.7,505.2L970.9,507.4L971.2,510.4L971.4,513.1L971.6,515.7L971.8,518.6L972.1,521.8L972.3,525L972.5,528.1L972.7,531.2L973,534L973.2,535.4L973.4,534.7L973.6,533.2L973.8,531.9L974.1,530.7L974.3,529.4L974.5,527.8L974.7,526.1L975,524L975.2,521.9L975.4,519.9L975.6,518.1L975.9,516.4L976.1,514.5L976.3,512.3L976.5,510.1L976.8,508.3L977,506.7L977.2,505.2L977.4,505.2L977.6,507.4L977.9,510.4L978.1,513.1L978.3,515.7L978.5,518.6L978.8,521.8L979,525L979.2,528.1L979.4,531.2L979.7,534L979.9,535.4L980.1,534.7L980.3,533.2L980.5,531.9L980.8,530.7L981,529.4L981.2,527.8L981.4,526.1L981.7,524L981.9,521.9L982.1,519.9L982.3,518.1L982.6,516.4L982.8,514.5L983,512.3L983.2,510.1L983.5,508.3L983.7,506.7L983.9,505.2L984.1,505.2L984.3,507.4L984.6,510.4L984.8,513.1L985,515.7L985.2,518.6L985.5,521.8L985.7,525L985.9,528.1L986.1,531.2L986.4,534L986.6,535.4L986.8,534.7L987,533.2L987.2,531.9L987.5,530.7L987.7,529.4L987.9,527.8L988.1,526.1L988.4,524.9L988.6,525.1L988.8,526.1L989,527L989.3,528L989.5,528.9L989.7,529.9L989.9,530.9L990.1,532.2L990.4,533.7L990.6,535.1L990.8,535.7L991,534.7L991.3,533.2L991.5,531.9L991.7,530.7L991.9,529.4L992.2,527.8L992.4,526.1L992.6,525L992.8,525.6L993.1,527L993.3,528.4L993.5,529.9L993.7,531.3L993.9,532.6L994.2,533.8L994.4,535.1L994.6,536.6L994.8,538.4L995.1,539.5L995.3,539L995.5,537.9L995.7,537L996,536L996.2,535.1L996.4,534.3L996.6,533.8L996.8,533.7L997.1,533.5L997.3,533.2L997.5,532.7L997.7,532.1L998,531.3L998.2,530.4L998.4,529.9L998.6,529.5L998.9,529.3L999.1,528.8L999.3,528L999.5,527.1L999.8,526.9L1000,527.4L1000.2,528.1L1000.4,528.9L1000.6,529.9L1000.9,530.8L1001.1,531.6L1001.3,532.4L1001.5,533.2L1001.8,534L1002,534.6L1002.2,534.7L1002.4,534.4L1002.7,534.1L1002.9,534L1003.1,533.7L1003.3,533.2L1003.5,532.6L1003.8,531.8L1004,530.8L1004.2,530L1004.4,529.5L1004.7,529.3L1004.9,528.8L1005.1,528L1005.3,527.1L1005.6,526.6L1005.8,526.1L1006,525.8L1006.2,525.8L1006.5,525.9L1006.7,525.9"/>
<text x="311.4" y="580.3" text-anchor="end" font-size="7.6" fill="#8b95a5" font-family="Liberation Sans, sans-serif">0</text>
<text x="311.4" y="554.1" text-anchor="end" font-size="7.6" fill="#8b95a5" font-family="Liberation Sans, sans-serif">5</text>
<text x="311.4" y="528" text-anchor="end" font-size="7.6" fill="#8b95a5" font-family="Liberation Sans, sans-serif">10</text>
<text x="311.4" y="501.8" text-anchor="end" font-size="7.6" fill="#8b95a5" font-family="Liberation Sans, sans-serif">15</text>
<text x="316.9" y="588.2" text-anchor="middle" font-size="7.4" fill="#8b95a5" font-family="Liberation Sans, sans-serif">0</text>
<text x="427.7" y="588.2" text-anchor="middle" font-size="7.4" fill="#8b95a5" font-family="Liberation Sans, sans-serif">500</text>
<text x="539.4" y="588.2" text-anchor="middle" font-size="7.4" fill="#8b95a5" font-family="Liberation Sans, sans-serif">1,000</text>
<text x="651" y="588.2" text-anchor="middle" font-size="7.4" fill="#8b95a5" font-family="Liberation Sans, sans-serif">1,500</text>
<text x="762.7" y="588.2" text-anchor="middle" font-size="7.4" fill="#8b95a5" font-family="Liberation Sans, sans-serif">2,000</text>
<text x="874.4" y="588.2" text-anchor="middle" font-size="7.4" fill="#8b95a5" font-family="Liberation Sans, sans-serif">2,500</text>
<text x="986" y="588.2" text-anchor="middle" font-size="7.4" fill="#8b95a5" font-family="Liberation Sans, sans-serif">3,000</text>
</svg>
</div></div>
</body>
</html>
